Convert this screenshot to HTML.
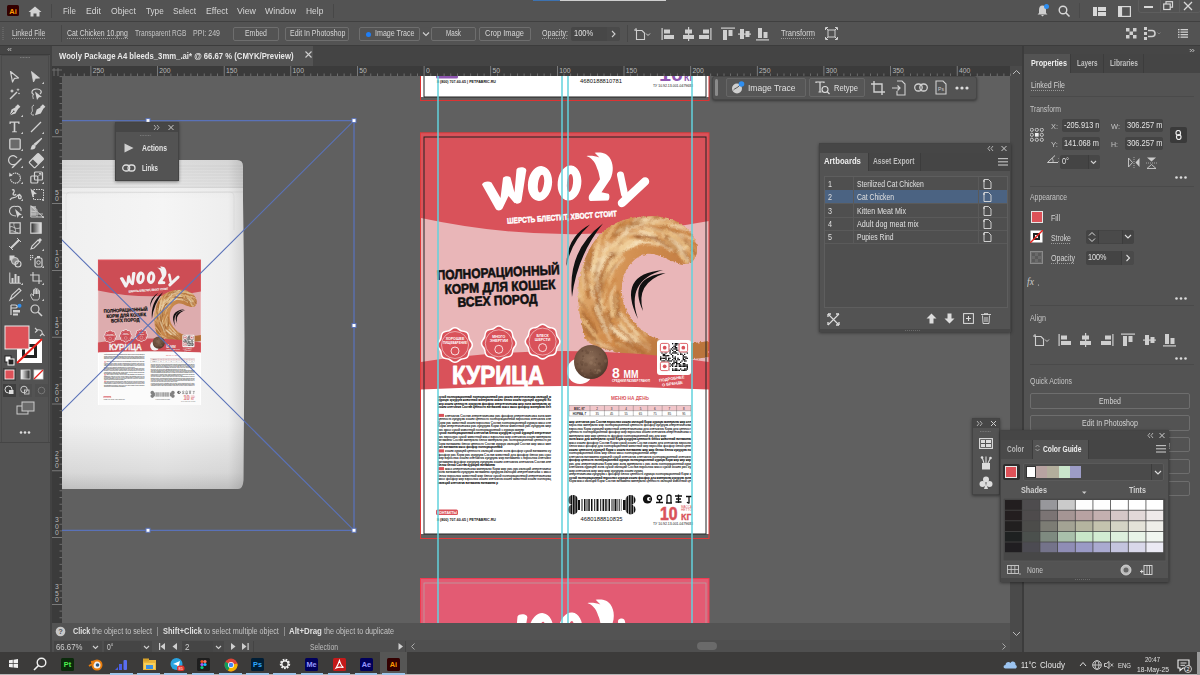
<!DOCTYPE html>
<html><head><meta charset="utf-8">
<style>
*{margin:0;padding:0;box-sizing:border-box}
html,body{width:1200px;height:675px;overflow:hidden;background:#535353;font-family:"Liberation Sans",sans-serif;color:#d8d8d8;position:relative}
.a{position:absolute}
.t{position:absolute;white-space:nowrap;line-height:1}
svg.s{position:absolute;overflow:hidden}
</style></head><body>
<div class="a" style="left:0px;top:0px;width:1200px;height:21px;background:#535353;"></div>
<div class="a" style="left:0px;top:21px;width:1200px;height:1px;background:#404040;"></div>
<div class="a" style="left:0px;top:22px;width:1200px;height:23px;background:#535353;"></div>
<div class="a" style="left:0px;top:45px;width:1200px;height:1px;background:#3c3c3c;"></div>
<div class="a" style="left:0px;top:46px;width:50px;height:606px;background:#535353;"></div>
<div class="a" style="left:0px;top:46px;width:50px;height:8px;background:#454545;"></div>
<div class="a" style="left:50px;top:46px;width:2px;height:606px;background:#424242;"></div>
<div class="a" style="left:52px;top:46px;width:970px;height:20px;background:#444444;"></div>
<div class="a" style="left:52px;top:46px;width:261px;height:20px;background:#535353;"></div>
<div class="a" style="left:52px;top:66px;width:959px;height:10px;background:#3b3b3b;"></div>
<div class="a" style="left:52px;top:66px;width:10px;height:557px;background:#3b3b3b;"></div>
<div class="a" style="left:62px;top:76px;width:948px;height:547px;background:#606060;"></div>
<div class="a" style="left:1010px;top:66px;width:12px;height:586px;background:#4a4a4a;"></div>
<div class="a" style="left:52px;top:623px;width:958px;height:17px;background:#535353;"></div>
<div class="a" style="left:52px;top:640px;width:958px;height:12px;background:#4d4d4d;"></div>
<div class="a" style="left:1022px;top:46px;width:2px;height:606px;background:#3c3c3c;"></div>
<div class="a" style="left:1024px;top:46px;width:176px;height:606px;background:#535353;"></div>
<div class="a" style="left:0px;top:652px;width:1200px;height:23px;background:#3d3d3c;"></div>

<svg class="s" style="left:62px;top:76px" width="948" height="547" viewBox="62 76 948 547"><rect x="62" y="76" width="948" height="547" fill="#606060"/><rect x="421" y="60" width="288" height="37" fill="#fff"/><rect x="420.5" y="60" width="288.5" height="40.5" fill="none" stroke="#d33" stroke-width="1"/><line x1="424" y1="97" x2="706" y2="97" stroke="#222" stroke-width="1"/><line x1="424" y1="60" x2="424" y2="97" stroke="#222" stroke-width="1"/><line x1="706" y1="60" x2="706" y2="97" stroke="#222" stroke-width="1"/><rect x="436" y="74" width="22" height="4.5" rx="1.5" fill="#8e55b0"/><text x="437" y="82.5" font-size="3.6" font-weight="bold" fill="#111" font-family="Liberation Sans" textLength="59" lengthAdjust="spacingAndGlyphs">8 (800) 707-60-65 | PETFABRIC.RU</text><text x="601" y="83" font-size="5.6" fill="#111" text-anchor="middle" font-family="Liberation Sans" textLength="42" lengthAdjust="spacingAndGlyphs">4680188810781</text><text x="659" y="81" font-size="19" font-weight="bold" fill="#8e55b0" font-family="Liberation Sans" textLength="24" lengthAdjust="spacingAndGlyphs">10</text><text x="684" y="80.5" font-size="9" font-weight="bold" fill="#8e55b0" font-family="Liberation Sans">КГ</text><text x="653" y="87" font-size="3" fill="#111" font-family="Liberation Sans" textLength="40" lengthAdjust="spacingAndGlyphs">ТУ 10.92.13-001-0479683</text><g id="ab"><rect x="421" y="133" width="288" height="401" fill="#fff"/><rect x="421" y="215" width="288" height="168" fill="#e9b6b8"/><path d="M421,133 L709,133 L709,221 Q565,249 421,218 Z" fill="#d9525a"/><filter id="fluff" x="-8%" y="-8%" width="116%" height="116%"><feTurbulence type="fractalNoise" baseFrequency="0.35" numOctaves="2" seed="5" result="n"/><feDisplacementMap in="SourceGraphic" in2="n" scale="3.5" xChannelSelector="R" yChannelSelector="G"/></filter><g filter="url(#fluff)"><defs><linearGradient id="tg" x1="0" y1="0" x2="1" y2="0.3"><stop offset="0" stop-color="#e4b57c"/><stop offset="0.45" stop-color="#d39152"/><stop offset="1" stop-color="#bd763c"/></linearGradient><clipPath id="tc"><path d="M587,341 C579,322 576,296 580,276 C584,256 594,238 606,229 C620,219 636,216 653,216 C672,217 686,224 693,236 C699,246 698,256 692,262 C686,266 678,263 671,261 C662,257 655,253 646,254 C636,256 627,265 623,278 C620,292 623,305 628,313 C633,322 642,333 657,339 C672,345 690,344 709,341 L709,357 C690,360 670,361 655,359 C640,358 626,356 616,352 C603,348 593,346 587,341 Z"/></clipPath></defs><path d="M587,341 C579,322 576,296 580,276 C584,256 594,238 606,229 C620,219 636,216 653,216 C672,217 686,224 693,236 C699,246 698,256 692,262 C686,266 678,263 671,261 C662,257 655,253 646,254 C636,256 627,265 623,278 C620,292 623,305 628,313 C633,322 642,333 657,339 C672,345 690,344 709,341 L709,357 C690,360 670,361 655,359 C640,358 626,356 616,352 C603,348 593,346 587,341 Z" fill="url(#tg)"/><filter id="fb" x="-5%" y="-5%" width="110%" height="110%"><feGaussianBlur stdDeviation="1.1"/></filter><radialGradient id="tsh" cx="0.62" cy="0.6" r="0.45"><stop offset="0.55" stop-color="#8a4e20" stop-opacity="0.35"/><stop offset="1" stop-color="#8a4e20" stop-opacity="0"/></radialGradient><g clip-path="url(#tc)" fill="none" stroke-linecap="round"><g filter="url(#fb)"><path d="M638.0,224.9 Q644.5,223.9 650.9,219.7" stroke="#9c5c2a" stroke-width="1.7" opacity="0.6"/><path d="M591.0,278.3 Q594.1,271.0 594.7,264.5" stroke="#f9e6c2" stroke-width="2.6" opacity="0.6"/><path d="M601.4,264.0 Q603.0,257.5 606.8,250.9" stroke="#cc8545" stroke-width="1.6" opacity="0.6"/><path d="M578.7,300.0 Q575.6,292.7 575.0,285.3" stroke="#cc8545" stroke-width="3.5" opacity="0.6"/><path d="M597.9,270.6 Q601.1,263.9 603.0,257.4" stroke="#f9e6c2" stroke-width="2.0" opacity="0.6"/><path d="M629.8,241.2 Q639.9,240.4 649.3,242.9" stroke="#f9e6c2" stroke-width="1.9" opacity="0.6"/><path d="M615.5,252.7 Q626.2,246.8 639.1,241.3" stroke="#f9e6c2" stroke-width="4.0" opacity="0.6"/><path d="M620.4,232.6 Q627.0,231.9 633.5,228.4" stroke="#cc8545" stroke-width="3.4" opacity="0.6"/><path d="M621.9,228.4 Q631.4,223.0 641.9,219.3" stroke="#cc8545" stroke-width="1.7" opacity="0.6"/><path d="M614.6,336.0 Q610.7,324.2 608.3,312.0" stroke="#9c5c2a" stroke-width="3.6" opacity="0.6"/><path d="M616.7,232.9 Q624.6,228.9 631.9,227.7" stroke="#f9e6c2" stroke-width="1.6" opacity="0.6"/><path d="M609.5,275.2 Q615.7,266.3 623.6,258.3" stroke="#f9e6c2" stroke-width="2.5" opacity="0.6"/><path d="M658.8,223.6 Q668.9,221.5 679.3,222.2" stroke="#cc8545" stroke-width="3.7" opacity="0.6"/><path d="M598.3,305.0 Q598.8,298.5 601.0,292.1" stroke="#9c5c2a" stroke-width="2.0" opacity="0.6"/><path d="M681.6,238.5 Q690.3,251.2 699.6,263.0" stroke="#cc8545" stroke-width="2.8" opacity="0.6"/><path d="M637.7,337.4 Q627.7,326.3 618.0,314.3" stroke="#cc8545" stroke-width="2.9" opacity="0.6"/><path d="M678.3,226.8 Q685.7,226.2 692.4,228.7" stroke="#cc8545" stroke-width="1.9" opacity="0.6"/><path d="M627.5,347.0 Q614.1,339.3 601.9,330.8" stroke="#cc8545" stroke-width="1.7" opacity="0.6"/><path d="M617.7,239.3 Q627.4,232.3 634.4,225.5" stroke="#f9e6c2" stroke-width="2.7" opacity="0.6"/><path d="M592.6,242.5 Q595.6,232.4 600.6,225.0" stroke="#cc8545" stroke-width="3.6" opacity="0.6"/><path d="M680.6,239.6 Q687.6,251.4 695.4,265.3" stroke="#cc8545" stroke-width="2.2" opacity="0.6"/><path d="M617.5,252.8 Q626.4,249.2 635.3,244.9" stroke="#f9e6c2" stroke-width="2.9" opacity="0.6"/><path d="M608.9,264.0 Q615.9,252.5 624.0,242.2" stroke="#f9e6c2" stroke-width="2.8" opacity="0.6"/><path d="M615.8,343.1 Q609.2,338.3 601.4,335.1" stroke="#cc8545" stroke-width="2.4" opacity="0.6"/><path d="M637.3,224.5 Q644.8,221.5 652.9,217.6" stroke="#eec88e" stroke-width="2.0" opacity="0.6"/><path d="M632.3,344.3 Q622.3,334.8 610.7,327.2" stroke="#f9e6c2" stroke-width="3.2" opacity="0.6"/><path d="M586.5,266.5 Q588.7,252.7 587.4,239.2" stroke="#cc8545" stroke-width="3.5" opacity="0.6"/><path d="M657.9,219.0 Q665.5,217.0 673.3,215.2" stroke="#9c5c2a" stroke-width="1.6" opacity="0.6"/><path d="M596.4,293.5 Q598.2,282.6 599.7,272.1" stroke="#9c5c2a" stroke-width="1.9" opacity="0.6"/><path d="M615.7,317.1 Q614.2,307.1 614.8,296.3" stroke="#9c5c2a" stroke-width="3.6" opacity="0.6"/><path d="M614.1,250.1 Q621.0,245.8 630.3,240.2" stroke="#eec88e" stroke-width="3.6" opacity="0.6"/><path d="M670.3,237.7 Q678.7,244.6 685.7,254.0" stroke="#9c5c2a" stroke-width="3.7" opacity="0.6"/><path d="M681.5,235.7 Q688.1,241.6 692.7,247.7" stroke="#f9e6c2" stroke-width="3.5" opacity="0.6"/><path d="M594.3,326.8 Q586.6,317.4 581.8,308.2" stroke="#cc8545" stroke-width="3.5" opacity="0.6"/><path d="M579.0,269.6 Q579.8,261.6 577.7,254.8" stroke="#cc8545" stroke-width="1.6" opacity="0.6"/><path d="M629.2,230.3 Q639.9,227.1 650.6,223.9" stroke="#cc8545" stroke-width="2.6" opacity="0.6"/><path d="M609.3,268.0 Q620.2,256.6 627.8,244.2" stroke="#f9e6c2" stroke-width="2.9" opacity="0.6"/><path d="M588.5,297.9 Q587.1,288.5 588.0,279.2" stroke="#cc8545" stroke-width="2.6" opacity="0.6"/><path d="M584.3,319.7 Q576.8,309.3 566.6,300.6" stroke="#cc8545" stroke-width="1.9" opacity="0.6"/><path d="M586.8,258.8 Q585.1,244.5 585.5,229.7" stroke="#eec88e" stroke-width="3.2" opacity="0.6"/><path d="M685.0,239.7 Q692.2,246.6 698.5,253.8" stroke="#f9e6c2" stroke-width="2.4" opacity="0.6"/><path d="M631.0,349.8 Q624.0,346.0 615.3,340.3" stroke="#9c5c2a" stroke-width="1.8" opacity="0.6"/><path d="M599.8,343.2 Q592.2,330.8 582.2,319.5" stroke="#eec88e" stroke-width="3.4" opacity="0.6"/><path d="M607.0,247.5 Q614.6,240.7 623.4,232.2" stroke="#cc8545" stroke-width="2.3" opacity="0.6"/><path d="M577.5,299.1 Q571.1,284.9 568.1,270.5" stroke="#cc8545" stroke-width="3.5" opacity="0.6"/><path d="M589.5,337.2 Q586.4,332.3 580.3,327.8" stroke="#9c5c2a" stroke-width="2.5" opacity="0.6"/><path d="M619.3,356.8 Q611.5,355.3 605.0,352.4" stroke="#eec88e" stroke-width="1.6" opacity="0.6"/><path d="M602.6,238.2 Q608.7,230.4 613.1,219.8" stroke="#cc8545" stroke-width="2.2" opacity="0.6"/><path d="M649.1,349.7 Q641.5,343.2 632.1,334.1" stroke="#f9e6c2" stroke-width="2.7" opacity="0.6"/><path d="M651.3,227.9 Q665.8,229.4 680.1,232.9" stroke="#9c5c2a" stroke-width="2.3" opacity="0.6"/><path d="M605.9,261.9 Q610.2,250.7 617.9,240.4" stroke="#eec88e" stroke-width="2.4" opacity="0.6"/><path d="M612.4,315.2 Q611.0,304.8 610.4,294.4" stroke="#f9e6c2" stroke-width="3.2" opacity="0.6"/><path d="M615.1,246.2 Q619.4,241.9 626.5,238.3" stroke="#f9e6c2" stroke-width="2.2" opacity="0.6"/><path d="M638.8,228.4 Q647.1,224.3 655.7,224.0" stroke="#9c5c2a" stroke-width="2.3" opacity="0.6"/><path d="M639.9,221.0 Q652.6,221.4 664.8,219.3" stroke="#eec88e" stroke-width="3.4" opacity="0.6"/><path d="M575.0,296.0 Q573.1,289.7 570.5,283.4" stroke="#cc8545" stroke-width="2.1" opacity="0.6"/><path d="M600.3,294.0 Q606.0,279.9 607.9,266.0" stroke="#eec88e" stroke-width="2.3" opacity="0.6"/><path d="M603.7,312.0 Q610.2,298.3 614.3,284.7" stroke="#eec88e" stroke-width="3.3" opacity="0.6"/><path d="M685.9,243.5 Q693.2,255.3 702.4,266.0" stroke="#f9e6c2" stroke-width="3.2" opacity="0.6"/><path d="M578.0,274.6 Q576.7,261.8 575.8,250.1" stroke="#9c5c2a" stroke-width="2.4" opacity="0.6"/><path d="M626.8,339.6 Q618.8,332.6 609.9,325.6" stroke="#f9e6c2" stroke-width="3.5" opacity="0.6"/><path d="M679.7,235.6 Q686.9,245.3 696.2,256.4" stroke="#cc8545" stroke-width="3.5" opacity="0.6"/><path d="M599.5,277.1 Q605.7,267.2 608.9,257.9" stroke="#9c5c2a" stroke-width="1.7" opacity="0.6"/><path d="M624.9,340.1 Q619.7,336.4 613.6,331.3" stroke="#f9e6c2" stroke-width="2.1" opacity="0.6"/><path d="M575.0,308.3 Q572.8,299.7 569.2,291.3" stroke="#cc8545" stroke-width="3.2" opacity="0.6"/><path d="M682.2,237.4 Q691.7,246.4 700.1,257.5" stroke="#9c5c2a" stroke-width="2.9" opacity="0.6"/><path d="M661.1,225.3 Q673.9,230.9 685.7,238.5" stroke="#9c5c2a" stroke-width="2.6" opacity="0.6"/><path d="M579.5,276.0 Q579.3,262.9 578.3,249.4" stroke="#cc8545" stroke-width="2.4" opacity="0.6"/><path d="M619.5,241.8 Q625.2,235.6 633.7,232.1" stroke="#9c5c2a" stroke-width="2.7" opacity="0.6"/><path d="M673.1,231.5 Q685.7,236.6 696.8,242.8" stroke="#cc8545" stroke-width="2.4" opacity="0.6"/><path d="M636.5,236.6 Q644.5,235.9 651.7,236.8" stroke="#9c5c2a" stroke-width="3.3" opacity="0.6"/><path d="M614.3,231.8 Q627.9,227.6 641.0,220.7" stroke="#f9e6c2" stroke-width="3.8" opacity="0.6"/><path d="M609.4,258.6 Q616.8,254.4 625.5,250.2" stroke="#9c5c2a" stroke-width="2.1" opacity="0.6"/><path d="M608.3,263.5 Q613.6,255.2 619.7,246.1" stroke="#f9e6c2" stroke-width="3.4" opacity="0.6"/><path d="M684.1,245.1 Q686.7,251.6 690.8,257.3" stroke="#cc8545" stroke-width="2.6" opacity="0.6"/><path d="M616.3,253.8 Q626.2,248.5 637.4,244.5" stroke="#f9e6c2" stroke-width="2.5" opacity="0.6"/><path d="M600.9,241.0 Q607.0,230.5 612.3,222.5" stroke="#cc8545" stroke-width="1.8" opacity="0.6"/><path d="M689.6,246.8 Q695.2,252.4 700.5,259.9" stroke="#9c5c2a" stroke-width="4.0" opacity="0.6"/><path d="M584.0,271.7 Q585.5,259.8 584.7,248.6" stroke="#cc8545" stroke-width="2.4" opacity="0.6"/><path d="M616.8,346.5 Q607.2,343.5 598.3,337.5" stroke="#cc8545" stroke-width="2.4" opacity="0.6"/><path d="M605.8,241.6 Q614.6,230.3 621.4,221.4" stroke="#cc8545" stroke-width="3.5" opacity="0.6"/><path d="M600.7,272.7 Q607.0,262.9 609.8,254.0" stroke="#eec88e" stroke-width="3.5" opacity="0.6"/><path d="M653.7,235.4 Q663.3,242.2 672.8,245.5" stroke="#eec88e" stroke-width="1.5" opacity="0.6"/><path d="M685.1,249.9 Q687.3,258.8 689.8,266.8" stroke="#f9e6c2" stroke-width="1.9" opacity="0.6"/><path d="M662.0,233.4 Q667.6,238.7 671.2,242.5" stroke="#f9e6c2" stroke-width="2.9" opacity="0.6"/><path d="M593.9,292.7 Q594.1,282.4 595.9,271.9" stroke="#cc8545" stroke-width="1.7" opacity="0.6"/><path d="M587.0,268.7 Q587.7,257.3 588.8,244.8" stroke="#f9e6c2" stroke-width="2.3" opacity="0.6"/><path d="M588.4,265.0 Q588.4,255.7 589.8,247.6" stroke="#9c5c2a" stroke-width="3.3" opacity="0.6"/><path d="M676.9,238.4 Q682.8,242.8 688.3,247.3" stroke="#f9e6c2" stroke-width="2.6" opacity="0.6"/><path d="M631.2,226.2 Q640.8,220.5 649.6,218.0" stroke="#f9e6c2" stroke-width="2.2" opacity="0.6"/><path d="M678.4,233.1 Q690.9,237.4 704.5,243.0" stroke="#eec88e" stroke-width="2.1" opacity="0.6"/><path d="M668.9,238.6 Q675.6,248.5 682.6,255.5" stroke="#9c5c2a" stroke-width="1.6" opacity="0.6"/><path d="M646.2,335.4 Q641.5,327.7 637.2,322.7" stroke="#f9e6c2" stroke-width="1.7" opacity="0.6"/><path d="M634.0,240.0 Q649.3,243.2 663.6,244.5" stroke="#f9e6c2" stroke-width="2.0" opacity="0.6"/><path d="M639.6,345.1 Q628.3,337.0 618.6,326.1" stroke="#9c5c2a" stroke-width="2.6" opacity="0.6"/><path d="M619.0,320.6 Q618.3,312.5 618.6,305.4" stroke="#9c5c2a" stroke-width="2.0" opacity="0.6"/><path d="M640.7,230.3 Q648.7,233.8 656.4,235.5" stroke="#eec88e" stroke-width="2.6" opacity="0.6"/><path d="M661.8,224.7 Q675.3,229.2 686.8,236.8" stroke="#cc8545" stroke-width="1.6" opacity="0.6"/><path d="M642.1,345.5 Q632.3,335.0 620.7,325.4" stroke="#eec88e" stroke-width="2.2" opacity="0.6"/><path d="M614.5,245.7 Q626.9,238.0 638.9,228.5" stroke="#eec88e" stroke-width="3.3" opacity="0.6"/><path d="M598.2,344.1 Q591.0,336.1 584.6,327.2" stroke="#9c5c2a" stroke-width="3.9" opacity="0.6"/><path d="M657.9,220.6 Q668.8,219.1 679.5,216.2" stroke="#f9e6c2" stroke-width="3.8" opacity="0.6"/><path d="M586.6,292.2 Q584.1,282.8 585.0,273.5" stroke="#cc8545" stroke-width="3.5" opacity="0.6"/><path d="M575.5,300.6 Q575.2,294.2 571.1,287.7" stroke="#cc8545" stroke-width="2.3" opacity="0.6"/><path d="M588.4,338.0 Q582.8,333.4 577.7,327.9" stroke="#cc8545" stroke-width="3.3" opacity="0.6"/><path d="M648.8,235.3 Q656.3,240.4 664.1,243.3" stroke="#eec88e" stroke-width="3.4" opacity="0.6"/><path d="M606.2,249.7 Q612.9,242.4 621.0,236.6" stroke="#cc8545" stroke-width="2.0" opacity="0.6"/><path d="M607.8,302.4 Q610.3,295.0 614.7,287.5" stroke="#f9e6c2" stroke-width="2.1" opacity="0.6"/><path d="M615.8,311.0 Q617.1,302.8 615.9,296.1" stroke="#eec88e" stroke-width="3.5" opacity="0.6"/><path d="M607.2,349.6 Q600.0,349.1 593.9,345.6" stroke="#cc8545" stroke-width="3.6" opacity="0.6"/><path d="M689.5,245.9 Q696.7,252.7 701.4,259.0" stroke="#cc8545" stroke-width="3.9" opacity="0.6"/><path d="M620.5,229.1 Q627.8,226.5 634.8,222.8" stroke="#eec88e" stroke-width="2.1" opacity="0.6"/><path d="M609.7,262.6 Q614.0,253.6 621.4,245.8" stroke="#eec88e" stroke-width="3.1" opacity="0.6"/><path d="M676.8,225.8 Q683.8,225.4 691.5,227.8" stroke="#cc8545" stroke-width="2.9" opacity="0.6"/><path d="M584.4,300.9 Q580.5,285.6 580.1,270.2" stroke="#cc8545" stroke-width="2.5" opacity="0.6"/><path d="M620.7,220.6 Q630.7,211.3 640.8,202.7" stroke="#9c5c2a" stroke-width="3.1" opacity="0.6"/><path d="M620.6,361.8 Q613.0,359.2 605.9,358.5" stroke="#f9e6c2" stroke-width="2.9" opacity="0.6"/><path d="M593.5,311.4 Q595.4,299.1 596.4,286.9" stroke="#9c5c2a" stroke-width="1.7" opacity="0.6"/><path d="M684.2,236.7 Q690.5,242.8 696.0,247.5" stroke="#f9e6c2" stroke-width="1.7" opacity="0.6"/><path d="M607.3,275.6 Q611.7,270.2 615.3,264.4" stroke="#9c5c2a" stroke-width="2.3" opacity="0.6"/><path d="M600.0,312.8 Q594.5,299.8 591.0,286.3" stroke="#f9e6c2" stroke-width="3.5" opacity="0.6"/><path d="M590.3,254.8 Q590.2,245.9 590.9,237.9" stroke="#cc8545" stroke-width="2.8" opacity="0.6"/><path d="M611.4,257.5 Q616.7,251.0 620.8,244.0" stroke="#9c5c2a" stroke-width="3.6" opacity="0.6"/><path d="M618.4,236.2 Q629.6,234.2 640.9,231.5" stroke="#cc8545" stroke-width="2.3" opacity="0.6"/><path d="M647.3,223.8 Q658.1,223.8 669.4,224.0" stroke="#f9e6c2" stroke-width="1.5" opacity="0.6"/><path d="M672.5,238.2 Q680.9,244.5 687.6,253.3" stroke="#f9e6c2" stroke-width="2.7" opacity="0.6"/><path d="M645.7,232.7 Q656.1,238.7 666.1,241.3" stroke="#cc8545" stroke-width="1.6" opacity="0.6"/><path d="M634.9,228.8 Q642.1,225.4 648.3,224.8" stroke="#cc8545" stroke-width="2.4" opacity="0.6"/><path d="M602.3,308.3 Q599.2,293.9 596.1,281.1" stroke="#f9e6c2" stroke-width="4.0" opacity="0.6"/><path d="M601.3,290.5 Q602.6,282.3 605.8,274.1" stroke="#9c5c2a" stroke-width="3.0" opacity="0.6"/><path d="M614.6,236.6 Q620.9,230.5 626.6,223.7" stroke="#9c5c2a" stroke-width="2.7" opacity="0.6"/><path d="M580.2,266.5 Q580.1,258.8 578.7,250.2" stroke="#eec88e" stroke-width="3.8" opacity="0.6"/><path d="M585.0,288.5 Q584.9,275.2 581.1,261.8" stroke="#f9e6c2" stroke-width="3.6" opacity="0.6"/><path d="M682.8,246.8 Q685.6,254.5 687.9,260.8" stroke="#9c5c2a" stroke-width="3.1" opacity="0.6"/><path d="M604.0,243.3 Q608.0,237.4 613.6,231.0" stroke="#eec88e" stroke-width="1.7" opacity="0.6"/><path d="M634.0,351.7 Q626.9,345.5 618.1,342.0" stroke="#9c5c2a" stroke-width="3.7" opacity="0.6"/><path d="M612.3,353.0 Q603.2,352.0 594.7,348.0" stroke="#cc8545" stroke-width="2.5" opacity="0.6"/><path d="M665.6,232.4 Q671.7,236.1 676.2,240.7" stroke="#f9e6c2" stroke-width="2.4" opacity="0.6"/><path d="M590.0,267.0 Q589.8,258.7 592.2,251.7" stroke="#cc8545" stroke-width="3.6" opacity="0.6"/><path d="M597.7,260.5 Q598.8,254.0 601.6,246.8" stroke="#f9e6c2" stroke-width="3.2" opacity="0.6"/><path d="M650.5,346.6 Q640.7,335.8 630.5,325.2" stroke="#eec88e" stroke-width="2.9" opacity="0.6"/><path d="M663.5,237.0 Q668.4,240.9 672.2,247.8" stroke="#eec88e" stroke-width="2.5" opacity="0.6"/><path d="M610.5,341.1 Q605.2,327.2 599.0,313.3" stroke="#f9e6c2" stroke-width="2.0" opacity="0.6"/><path d="M658.5,221.3 Q667.5,220.9 676.9,218.2" stroke="#cc8545" stroke-width="1.6" opacity="0.6"/><path d="M675.5,237.8 Q680.6,249.4 685.5,262.4" stroke="#eec88e" stroke-width="3.4" opacity="0.6"/><path d="M609.1,328.9 Q608.4,322.0 604.5,314.3" stroke="#9c5c2a" stroke-width="3.8" opacity="0.6"/><path d="M636.3,351.2 Q627.0,344.9 618.8,339.7" stroke="#cc8545" stroke-width="2.8" opacity="0.6"/><path d="M593.9,278.3 Q595.3,270.3 599.0,263.1" stroke="#9c5c2a" stroke-width="3.6" opacity="0.6"/><path d="M618.3,230.5 Q629.9,227.7 640.4,221.3" stroke="#eec88e" stroke-width="3.6" opacity="0.6"/><path d="M681.0,242.9 Q685.1,255.0 690.7,266.7" stroke="#9c5c2a" stroke-width="2.6" opacity="0.6"/><path d="M610.4,238.3 Q616.6,228.0 625.4,220.0" stroke="#cc8545" stroke-width="1.9" opacity="0.6"/><path d="M578.7,298.0 Q577.6,291.5 575.3,284.9" stroke="#f9e6c2" stroke-width="3.2" opacity="0.6"/><path d="M643.7,353.6 Q636.4,349.4 627.6,342.3" stroke="#9c5c2a" stroke-width="3.5" opacity="0.6"/><path d="M643.0,219.3 Q650.3,218.8 657.9,217.2" stroke="#f9e6c2" stroke-width="3.6" opacity="0.6"/><path d="M599.5,238.7 Q605.0,225.7 611.5,214.1" stroke="#cc8545" stroke-width="2.2" opacity="0.6"/><path d="M618.7,227.7 Q630.7,221.6 641.6,215.4" stroke="#cc8545" stroke-width="2.3" opacity="0.6"/><path d="M600.7,232.8 Q603.9,223.8 608.0,213.6" stroke="#cc8545" stroke-width="3.4" opacity="0.6"/><path d="M682.8,242.4 Q689.8,254.8 696.3,267.0" stroke="#eec88e" stroke-width="2.2" opacity="0.6"/><path d="M624.3,249.2 Q631.2,246.1 636.5,244.7" stroke="#eec88e" stroke-width="2.7" opacity="0.6"/><path d="M668.0,239.3 Q674.0,249.8 681.2,257.4" stroke="#eec88e" stroke-width="1.9" opacity="0.6"/><path d="M584.6,264.5 Q585.0,252.6 583.9,240.0" stroke="#f9e6c2" stroke-width="3.5" opacity="0.6"/><path d="M623.0,229.4 Q632.8,223.8 641.7,221.9" stroke="#9c5c2a" stroke-width="1.7" opacity="0.6"/><path d="M592.7,273.0 Q596.1,262.5 598.6,250.9" stroke="#f9e6c2" stroke-width="4.0" opacity="0.6"/><path d="M601.6,297.2 Q604.9,284.3 609.5,271.7" stroke="#cc8545" stroke-width="2.4" opacity="0.6"/><path d="M671.9,237.5 Q677.6,241.7 683.7,248.5" stroke="#eec88e" stroke-width="3.4" opacity="0.6"/><path d="M670.9,235.7 Q678.7,243.4 687.8,250.2" stroke="#f9e6c2" stroke-width="3.4" opacity="0.6"/><path d="M601.4,283.7 Q606.4,272.1 607.8,260.6" stroke="#eec88e" stroke-width="2.1" opacity="0.6"/><path d="M611.1,331.8 Q607.9,324.2 606.2,316.0" stroke="#f9e6c2" stroke-width="1.9" opacity="0.6"/><path d="M607.0,252.2 Q611.6,247.3 618.8,243.0" stroke="#f9e6c2" stroke-width="2.5" opacity="0.6"/><path d="M653.3,227.4 Q665.4,228.6 677.6,230.5" stroke="#cc8545" stroke-width="1.9" opacity="0.6"/><path d="M598.4,256.9 Q600.3,245.9 604.4,234.2" stroke="#cc8545" stroke-width="2.6" opacity="0.6"/><path d="M603.0,264.7 Q606.1,255.1 612.2,245.6" stroke="#eec88e" stroke-width="3.1" opacity="0.6"/><path d="M655.1,230.3 Q663.5,232.1 672.1,234.6" stroke="#eec88e" stroke-width="2.6" opacity="0.6"/><path d="M587.2,282.6 Q585.0,276.0 586.0,269.5" stroke="#9c5c2a" stroke-width="3.8" opacity="0.6"/><path d="M602.2,282.0 Q610.7,269.4 618.6,256.7" stroke="#eec88e" stroke-width="1.8" opacity="0.6"/><path d="M668.0,232.8 Q678.2,240.4 690.3,250.0" stroke="#eec88e" stroke-width="2.5" opacity="0.6"/><path d="M602.5,298.7 Q603.0,291.4 607.1,284.2" stroke="#9c5c2a" stroke-width="2.4" opacity="0.6"/><path d="M639.2,217.0 Q653.5,211.7 667.9,209.6" stroke="#cc8545" stroke-width="3.2" opacity="0.6"/><path d="M621.1,249.7 Q631.2,244.5 642.0,241.1" stroke="#f9e6c2" stroke-width="3.5" opacity="0.6"/><path d="M578.6,283.9 Q575.1,270.9 570.0,257.7" stroke="#cc8545" stroke-width="3.1" opacity="0.6"/><path d="M597.2,302.5 Q599.0,288.8 602.6,275.1" stroke="#9c5c2a" stroke-width="2.7" opacity="0.6"/><path d="M592.1,289.6 Q593.4,276.1 593.2,262.3" stroke="#eec88e" stroke-width="3.3" opacity="0.6"/><path d="M603.3,298.9 Q607.2,285.9 612.6,273.0" stroke="#eec88e" stroke-width="3.1" opacity="0.6"/><path d="M595.1,324.6 Q588.4,311.2 579.2,299.2" stroke="#9c5c2a" stroke-width="1.6" opacity="0.6"/><path d="M587.1,295.6 Q584.6,283.8 585.5,272.1" stroke="#cc8545" stroke-width="2.0" opacity="0.6"/><path d="M612.1,316.0 Q610.1,308.0 610.2,299.7" stroke="#eec88e" stroke-width="3.5" opacity="0.6"/><path d="M677.1,240.5 Q679.9,252.6 685.2,263.2" stroke="#cc8545" stroke-width="3.2" opacity="0.6"/><path d="M606.9,254.4 Q617.2,248.1 625.4,241.4" stroke="#cc8545" stroke-width="2.6" opacity="0.6"/><path d="M613.7,253.2 Q624.3,248.6 632.7,243.0" stroke="#eec88e" stroke-width="2.7" opacity="0.6"/><path d="M597.6,270.2 Q602.5,256.9 607.6,243.3" stroke="#f9e6c2" stroke-width="3.6" opacity="0.6"/><path d="M611.4,236.5 Q618.3,228.9 624.3,220.4" stroke="#9c5c2a" stroke-width="1.7" opacity="0.6"/><path d="M634.3,375.1 Q620.4,373.5 608.1,371.9" stroke="#9c5c2a" stroke-width="3.5" opacity="0.6"/><path d="M599.7,311.1 Q602.4,299.3 606.1,287.5" stroke="#eec88e" stroke-width="3.7" opacity="0.6"/><path d="M681.9,246.1 Q686.2,254.1 687.7,263.3" stroke="#f9e6c2" stroke-width="2.1" opacity="0.6"/><path d="M633.5,226.6 Q644.4,223.1 654.1,218.4" stroke="#eec88e" stroke-width="2.8" opacity="0.6"/><path d="M596.6,332.9 Q592.4,326.1 586.2,317.7" stroke="#cc8545" stroke-width="3.1" opacity="0.6"/><path d="M689.4,247.5 Q694.6,254.1 697.8,258.5" stroke="#eec88e" stroke-width="1.5" opacity="0.6"/><path d="M626.0,328.7 Q618.9,319.0 611.0,309.8" stroke="#eec88e" stroke-width="3.1" opacity="0.6"/><path d="M611.0,331.3 Q606.8,321.8 605.0,310.8" stroke="#cc8545" stroke-width="1.8" opacity="0.6"/><path d="M600.5,310.2 Q597.8,301.1 594.7,291.3" stroke="#9c5c2a" stroke-width="3.5" opacity="0.6"/><path d="M593.4,238.1 Q597.0,231.9 598.2,225.6" stroke="#cc8545" stroke-width="2.9" opacity="0.6"/><path d="M683.7,231.4 Q695.8,237.2 707.6,245.5" stroke="#cc8545" stroke-width="3.8" opacity="0.6"/><path d="M650.2,236.8 Q660.7,241.9 671.2,250.3" stroke="#f9e6c2" stroke-width="3.4" opacity="0.6"/><path d="M670.7,223.5 Q678.0,226.6 683.7,226.4" stroke="#f9e6c2" stroke-width="3.2" opacity="0.6"/><path d="M591.5,340.0 Q583.7,331.9 576.3,324.6" stroke="#cc8545" stroke-width="2.9" opacity="0.6"/><path d="M637.7,342.8 Q627.9,333.8 619.0,325.3" stroke="#f9e6c2" stroke-width="3.4" opacity="0.6"/><path d="M666.5,238.6 Q672.8,244.0 677.2,252.7" stroke="#9c5c2a" stroke-width="3.3" opacity="0.6"/><path d="M596.4,332.3 Q589.9,322.8 582.7,312.6" stroke="#9c5c2a" stroke-width="3.6" opacity="0.6"/><path d="M670.9,225.7 Q686.4,230.3 700.6,232.7" stroke="#f9e6c2" stroke-width="3.9" opacity="0.6"/><path d="M664.4,233.5 Q675.4,242.7 685.7,254.9" stroke="#cc8545" stroke-width="2.9" opacity="0.6"/><path d="M638.7,233.0 Q645.4,234.2 651.9,231.8" stroke="#f9e6c2" stroke-width="3.6" opacity="0.6"/><path d="M601.5,274.0 Q606.3,262.8 612.8,252.8" stroke="#9c5c2a" stroke-width="3.5" opacity="0.6"/><path d="M595.9,243.1 Q602.2,228.8 609.6,216.6" stroke="#cc8545" stroke-width="3.5" opacity="0.6"/><path d="M604.7,305.0 Q609.3,292.0 615.1,279.3" stroke="#cc8545" stroke-width="3.8" opacity="0.6"/><path d="M684.9,239.1 Q695.3,247.5 704.5,258.2" stroke="#cc8545" stroke-width="4.0" opacity="0.6"/><path d="M650.6,220.6 Q659.4,217.8 668.1,218.3" stroke="#cc8545" stroke-width="3.5" opacity="0.6"/><path d="M631.0,223.4 Q641.1,217.3 651.2,211.4" stroke="#9c5c2a" stroke-width="3.7" opacity="0.6"/><path d="M584.1,271.8 Q584.7,263.6 584.8,255.6" stroke="#cc8545" stroke-width="2.4" opacity="0.6"/><path d="M689.0,242.7 Q701.3,251.6 712.7,260.7" stroke="#cc8545" stroke-width="3.7" opacity="0.6"/><path d="M609.2,333.7 Q604.2,323.8 602.6,315.6" stroke="#cc8545" stroke-width="1.6" opacity="0.6"/><path d="M672.5,227.7 Q687.0,232.0 701.2,235.7" stroke="#cc8545" stroke-width="1.7" opacity="0.6"/><path d="M574.7,300.9 Q570.1,293.1 569.0,285.3" stroke="#cc8545" stroke-width="1.7" opacity="0.6"/><path d="M665.9,235.4 Q674.8,247.0 685.4,257.3" stroke="#9c5c2a" stroke-width="3.1" opacity="0.6"/><path d="M607.0,332.4 Q602.1,321.0 597.9,309.5" stroke="#9c5c2a" stroke-width="3.2" opacity="0.6"/><path d="M582.9,300.4 Q582.4,287.4 578.5,274.7" stroke="#eec88e" stroke-width="3.9" opacity="0.6"/><path d="M687.1,250.0 Q689.2,257.7 692.3,262.9" stroke="#cc8545" stroke-width="3.3" opacity="0.6"/><path d="M635.0,362.5 Q629.1,360.4 622.8,357.8" stroke="#eec88e" stroke-width="3.4" opacity="0.6"/><path d="M596.8,328.2 Q591.4,319.1 586.3,311.1" stroke="#cc8545" stroke-width="2.4" opacity="0.6"/><path d="M637.7,335.2 Q628.3,324.0 620.6,313.6" stroke="#f9e6c2" stroke-width="3.6" opacity="0.6"/><path d="M633.7,220.4 Q642.7,214.8 650.9,208.1" stroke="#f9e6c2" stroke-width="3.8" opacity="0.6"/><path d="M680.6,234.2 Q689.0,238.2 696.7,240.5" stroke="#f9e6c2" stroke-width="2.4" opacity="0.6"/><path d="M595.2,289.0 Q595.7,281.2 597.0,273.5" stroke="#9c5c2a" stroke-width="2.2" opacity="0.6"/><path d="M604.2,240.7 Q611.9,229.3 619.9,217.9" stroke="#eec88e" stroke-width="1.8" opacity="0.6"/><path d="M578.4,282.8 Q573.6,268.9 569.0,255.1" stroke="#cc8545" stroke-width="2.0" opacity="0.6"/><path d="M622.3,249.8 Q631.3,245.8 641.8,242.5" stroke="#f9e6c2" stroke-width="2.1" opacity="0.6"/><path d="M659.2,219.7 Q672.1,217.4 684.4,212.7" stroke="#cc8545" stroke-width="3.9" opacity="0.6"/><path d="M625.3,230.0 Q638.0,223.6 651.1,220.7" stroke="#9c5c2a" stroke-width="2.2" opacity="0.6"/><path d="M644.3,227.8 Q651.8,228.1 659.5,230.8" stroke="#f9e6c2" stroke-width="3.4" opacity="0.6"/><path d="M609.9,310.2 Q607.4,296.8 607.6,284.0" stroke="#cc8545" stroke-width="1.9" opacity="0.6"/><path d="M588.4,261.0 Q589.7,253.3 589.2,246.8" stroke="#cc8545" stroke-width="2.5" opacity="0.6"/><path d="M624.1,240.4 Q638.9,240.5 652.8,240.7" stroke="#eec88e" stroke-width="1.5" opacity="0.6"/><path d="M603.5,252.1 Q615.2,242.8 626.5,231.5" stroke="#f9e6c2" stroke-width="3.3" opacity="0.6"/><path d="M626.6,229.6 Q637.5,227.2 647.7,222.1" stroke="#f9e6c2" stroke-width="3.3" opacity="0.6"/><path d="M635.4,237.0 Q646.7,238.3 658.9,237.8" stroke="#9c5c2a" stroke-width="2.2" opacity="0.6"/><path d="M669.9,231.9 Q680.1,236.9 689.2,244.0" stroke="#f9e6c2" stroke-width="3.9" opacity="0.6"/><path d="M606.5,332.1 Q601.6,318.5 595.0,304.0" stroke="#f9e6c2" stroke-width="3.8" opacity="0.6"/><path d="M670.0,235.8 Q676.6,239.4 681.3,245.5" stroke="#9c5c2a" stroke-width="3.3" opacity="0.6"/><path d="M670.6,237.3 Q675.9,241.6 681.4,247.8" stroke="#f9e6c2" stroke-width="3.7" opacity="0.6"/><path d="M595.7,279.6 Q602.4,267.2 605.8,255.0" stroke="#f9e6c2" stroke-width="3.6" opacity="0.6"/><path d="M653.3,229.6 Q660.1,230.7 666.7,232.6" stroke="#9c5c2a" stroke-width="1.6" opacity="0.6"/><path d="M633.9,237.0 Q645.4,237.4 657.1,237.3" stroke="#9c5c2a" stroke-width="2.3" opacity="0.6"/><path d="M628.9,241.2 Q643.9,242.5 658.7,244.7" stroke="#f9e6c2" stroke-width="2.6" opacity="0.6"/><path d="M684.5,236.6 Q691.0,241.8 697.1,247.6" stroke="#cc8545" stroke-width="2.1" opacity="0.6"/><path d="M668.8,236.2 Q678.5,245.9 688.8,257.3" stroke="#9c5c2a" stroke-width="1.6" opacity="0.6"/><path d="M618.2,248.1 Q622.8,244.0 630.1,241.4" stroke="#f9e6c2" stroke-width="1.8" opacity="0.6"/><path d="M631.0,360.1 Q620.3,355.7 607.7,351.5" stroke="#f9e6c2" stroke-width="3.0" opacity="0.6"/><path d="M601.4,255.3 Q613.9,246.8 624.3,235.9" stroke="#eec88e" stroke-width="2.8" opacity="0.6"/><path d="M608.3,254.5 Q620.0,246.5 630.6,240.1" stroke="#f9e6c2" stroke-width="2.6" opacity="0.6"/><path d="M642.2,230.4 Q652.4,233.0 662.6,237.1" stroke="#eec88e" stroke-width="3.0" opacity="0.6"/><path d="M585.4,269.5 Q587.5,257.6 586.3,246.6" stroke="#9c5c2a" stroke-width="2.5" opacity="0.6"/><path d="M589.8,270.2 Q589.6,260.8 592.8,252.5" stroke="#9c5c2a" stroke-width="2.0" opacity="0.6"/><path d="M676.4,239.9 Q680.3,250.4 683.8,259.6" stroke="#f9e6c2" stroke-width="2.5" opacity="0.6"/><path d="M617.7,317.3 Q618.4,305.3 617.8,292.0" stroke="#9c5c2a" stroke-width="2.5" opacity="0.6"/><path d="M608.2,269.7 Q617.4,258.8 624.8,247.2" stroke="#eec88e" stroke-width="3.3" opacity="0.6"/><path d="M664.5,230.8 Q675.1,237.9 684.1,245.7" stroke="#cc8545" stroke-width="2.5" opacity="0.6"/><path d="M684.4,240.6 Q693.3,253.3 703.9,264.0" stroke="#cc8545" stroke-width="2.5" opacity="0.6"/><path d="M601.1,329.9 Q595.8,320.3 591.2,310.9" stroke="#cc8545" stroke-width="2.2" opacity="0.6"/><path d="M653.7,217.8 Q666.4,213.8 678.9,209.5" stroke="#9c5c2a" stroke-width="2.5" opacity="0.6"/><path d="M588.0,297.0 Q589.5,288.4 587.3,279.8" stroke="#9c5c2a" stroke-width="2.3" opacity="0.6"/><path d="M592.2,252.5 Q591.1,242.2 593.4,231.8" stroke="#9c5c2a" stroke-width="1.5" opacity="0.6"/><path d="M667.0,230.4 Q674.3,236.2 682.8,240.4" stroke="#cc8545" stroke-width="2.6" opacity="0.6"/><path d="M646.9,223.6 Q658.7,223.7 670.7,223.6" stroke="#eec88e" stroke-width="3.9" opacity="0.6"/><path d="M602.7,328.9 Q596.4,317.8 592.2,306.4" stroke="#9c5c2a" stroke-width="1.9" opacity="0.6"/><path d="M645.7,228.7 Q660.7,231.1 676.0,236.2" stroke="#eec88e" stroke-width="2.8" opacity="0.6"/><path d="M621.4,221.0 Q628.4,214.6 635.9,209.3" stroke="#eec88e" stroke-width="3.1" opacity="0.6"/><path d="M690.2,246.3 Q695.7,251.2 701.2,257.7" stroke="#eec88e" stroke-width="2.8" opacity="0.6"/><path d="M594.4,307.9 Q596.2,300.5 596.3,293.0" stroke="#cc8545" stroke-width="3.1" opacity="0.6"/><path d="M614.4,349.8 Q603.1,345.0 590.4,340.8" stroke="#f9e6c2" stroke-width="2.3" opacity="0.6"/><path d="M637.9,354.8 Q628.0,347.3 617.9,343.2" stroke="#eec88e" stroke-width="3.1" opacity="0.6"/><path d="M584.0,265.0 Q582.3,256.6 583.7,249.1" stroke="#cc8545" stroke-width="1.8" opacity="0.6"/><path d="M685.1,240.9 Q691.5,248.9 698.9,256.5" stroke="#9c5c2a" stroke-width="3.1" opacity="0.6"/><path d="M587.7,288.5 Q588.9,280.5 586.7,272.5" stroke="#eec88e" stroke-width="1.7" opacity="0.6"/><path d="M622.5,235.9 Q629.4,232.9 635.6,233.4" stroke="#f9e6c2" stroke-width="2.5" opacity="0.6"/><path d="M616.2,354.4 Q609.2,350.9 603.0,350.2" stroke="#9c5c2a" stroke-width="3.6" opacity="0.6"/><path d="M664.3,229.9 Q677.2,238.5 689.0,247.7" stroke="#eec88e" stroke-width="3.9" opacity="0.6"/><path d="M592.7,270.4 Q594.1,257.4 598.6,245.2" stroke="#f9e6c2" stroke-width="3.7" opacity="0.6"/><path d="M642.1,236.3 Q649.9,240.7 657.7,245.9" stroke="#eec88e" stroke-width="1.8" opacity="0.6"/><path d="M652.4,236.8 Q661.3,242.0 670.1,247.5" stroke="#9c5c2a" stroke-width="2.9" opacity="0.6"/><path d="M616.9,221.5 Q626.7,211.8 635.9,205.1" stroke="#cc8545" stroke-width="1.9" opacity="0.6"/><path d="M614.5,250.3 Q623.8,244.1 634.5,238.7" stroke="#eec88e" stroke-width="3.5" opacity="0.6"/><path d="M594.7,262.9 Q597.9,247.7 601.1,233.2" stroke="#eec88e" stroke-width="3.9" opacity="0.6"/><path d="M668.4,238.1 Q676.7,250.7 687.0,263.1" stroke="#eec88e" stroke-width="2.6" opacity="0.6"/><path d="M651.3,221.6 Q665.6,218.8 679.9,217.9" stroke="#f9e6c2" stroke-width="2.8" opacity="0.6"/><path d="M639.5,230.5 Q646.8,234.1 654.3,235.6" stroke="#f9e6c2" stroke-width="3.3" opacity="0.6"/><path d="M601.3,273.4 Q604.7,266.5 608.1,260.0" stroke="#cc8545" stroke-width="2.4" opacity="0.6"/><path d="M583.1,324.8 Q576.0,317.9 569.9,312.1" stroke="#9c5c2a" stroke-width="2.5" opacity="0.6"/><path d="M670.9,238.6 Q681.0,250.2 689.2,260.6" stroke="#f9e6c2" stroke-width="2.2" opacity="0.6"/><path d="M632.5,218.6 Q642.0,211.6 651.8,201.5" stroke="#cc8545" stroke-width="4.0" opacity="0.6"/><path d="M593.1,342.5 Q581.0,332.8 572.2,321.5" stroke="#cc8545" stroke-width="3.3" opacity="0.6"/><path d="M602.3,297.7 Q605.2,290.3 607.0,282.6" stroke="#cc8545" stroke-width="2.9" opacity="0.6"/></g><path d="M600,352 Q650,330 709,349 L709,362 L600,362 Z" fill="#b8773f" opacity="0.45" filter="url(#fb)"/></g></g><path d="M421,362 Q565,340 709,362 L709,389.5 Q565,382.5 421,389.5 Z" fill="#d9525a"/><g id="logo" fill="#fff" stroke="#fff" stroke-linejoin="round" stroke-linecap="round"><path stroke="none" d="M482,184.5 C483,182 488,180.5 491.5,182.5 L500.5,198 L503,178 C504,176 509,175.5 510.5,177.5 L514.5,192.5 L516.5,169.5 C517.5,167 523,166.5 525.5,168.5 C526.5,169.5 526.5,171 526,172 L521.5,201 C520.5,204 515.5,204.5 514,202.5 L508.5,196 L502.5,208.5 C501,211 496.5,211 495.5,208.5 Z"/><path fill-rule="evenodd" stroke="none" transform="rotate(8 540 183.5)" d="M528,183.5 A12,17.5 0 1 0 552,183.5 A12,17.5 0 1 0 528,183.5 Z M538.0,183.5 A3.0,9.0 0 1 0 544.0,183.5 A3.0,9.0 0 1 0 538.0,183.5 Z"/><path fill-rule="evenodd" stroke="none" transform="rotate(6 569.5 183)" d="M557.7,183 A11.8,17.5 0 1 0 581.3,183 A11.8,17.5 0 1 0 557.7,183 Z M567.0,183 A3.0,9.0 0 1 0 573.0,183 A3.0,9.0 0 1 0 567.0,183 Z"/><path stroke="none" d="M586.4,155.9 C591,155.5 596,156 599.4,157.5 L594.7,152.8 C601,151.5 607,153.5 609.5,157.5 C613.5,163 614,172 610.3,179.2 L601.5,192.2 L608.5,193.8 C609.8,194.5 609.8,200 608,200.5 L590.6,201 C588.6,201 588.2,196.5 589.5,194.8 L600,179.2 C599,174 598.5,171 597.3,168.9 C595,161 591,157.5 586.4,155.9 Z"/><polyline points="620.5,175 624.5,194" fill="none" stroke-width="7"/><polyline points="645,181.5 622,203" fill="none" stroke-width="8.5"/></g><text x="562" y="220" font-size="8" font-weight="bold" fill="#fff" stroke="#fff" stroke-width="0.45" text-anchor="middle" transform="rotate(-4 562 217)" textLength="110" lengthAdjust="spacingAndGlyphs" font-family="Liberation Sans">ШЕРСТЬ БЛЕСТИТ, ХВОСТ СТОИТ</text><g transform="rotate(-2.6 499 289)" font-weight="bold" fill="#111" stroke="#111" stroke-width="0.6" stroke-linejoin="round" font-family="Liberation Sans"><text x="499" y="277" font-size="13.5" text-anchor="middle" textLength="123" lengthAdjust="spacingAndGlyphs">ПОЛНОРАЦИОННЫЙ</text><text x="500" y="291.5" font-size="13.5" text-anchor="middle" textLength="111" lengthAdjust="spacingAndGlyphs">КОРМ ДЛЯ КОШЕК</text><text x="497" y="305" font-size="13.5" text-anchor="middle" textLength="80" lengthAdjust="spacingAndGlyphs">ВСЕХ ПОРОД</text></g><path d="M590,224.5 Q566,237 566.5,266 Q571,242 590,224.5 Z" fill="#111"/><path d="M603,223.5 Q567,250 572,297 Q577,256 603,223.5 Z" fill="#111"/><path d="M663,270 Q616,274 638,319 Q625,281 663,270 Z" fill="#111"/><path d="M665.5,273 Q627,277 643,311 Q635,283 665.5,273 Z" fill="#111"/><polygon points="473.1,345.0 472.8,346.7 471.9,348.4 470.9,349.8 470.1,351.2 469.6,352.8 469.3,354.6 468.8,356.3 467.8,357.8 466.3,358.8 464.6,359.3 462.8,359.6 461.2,360.1 459.8,360.9 458.4,361.9 456.7,362.8 455.0,363.1 453.3,362.8 451.6,361.9 450.2,360.9 448.8,360.1 447.2,359.6 445.4,359.3 443.7,358.8 442.2,357.8 441.2,356.3 440.7,354.6 440.4,352.8 439.9,351.2 439.1,349.8 438.1,348.4 437.2,346.7 436.9,345.0 437.2,343.3 438.1,341.6 439.1,340.2 439.9,338.8 440.4,337.2 440.7,335.4 441.2,333.7 442.2,332.2 443.7,331.2 445.4,330.7 447.2,330.4 448.8,329.9 450.2,329.1 451.6,328.1 453.3,327.2 455.0,326.9 456.7,327.2 458.4,328.1 459.8,329.1 461.2,329.9 462.8,330.4 464.6,330.7 466.3,331.2 467.8,332.2 468.8,333.7 469.3,335.4 469.6,337.2 470.1,338.8 470.9,340.2 471.9,341.6 472.8,343.3 473.1,345.0" fill="#fff"/><polygon points="471.5,345.0 471.2,346.6 470.3,348.0 469.3,349.3 468.6,350.6 468.2,352.1 468.0,353.7 467.6,355.3 466.7,356.7 465.3,357.6 463.7,358.0 462.1,358.2 460.6,358.6 459.3,359.3 458.0,360.3 456.6,361.2 455.0,361.5 453.4,361.2 452.0,360.3 450.7,359.3 449.4,358.6 447.9,358.2 446.3,358.0 444.7,357.6 443.3,356.7 442.4,355.3 442.0,353.7 441.8,352.1 441.4,350.6 440.7,349.3 439.7,348.0 438.8,346.6 438.5,345.0 438.8,343.4 439.7,342.0 440.7,340.7 441.4,339.4 441.8,337.9 442.0,336.3 442.4,334.7 443.3,333.3 444.7,332.4 446.3,332.0 447.9,331.8 449.4,331.4 450.7,330.7 452.0,329.7 453.4,328.8 455.0,328.5 456.6,328.8 458.0,329.7 459.3,330.7 460.6,331.4 462.1,331.8 463.7,332.0 465.3,332.4 466.7,333.3 467.6,334.7 468.0,336.3 468.2,337.9 468.6,339.4 469.3,340.7 470.3,342.0 471.2,343.4 471.5,345.0" fill="#d9525a"/><circle cx="455" cy="345" r="13.5" fill="none" stroke="#fff" stroke-width="0.5"/><text x="455" y="340" font-size="3.6" font-weight="bold" fill="#fff" text-anchor="middle" font-family="Liberation Sans">ХОРОШЕЕ</text><text x="455" y="344" font-size="3.6" font-weight="bold" fill="#fff" text-anchor="middle" font-family="Liberation Sans" textLength="24" lengthAdjust="spacingAndGlyphs">ПИЩЕВАРЕНИЕ</text><circle cx="455" cy="351" r="4" fill="none" stroke="#fff" stroke-width="0.8"/><polygon points="516.9,343.3 516.6,345.0 515.7,346.7 514.7,348.1 513.9,349.5 513.4,351.1 513.1,352.9 512.6,354.6 511.6,356.1 510.1,357.1 508.4,357.6 506.6,357.9 505.0,358.4 503.6,359.2 502.2,360.2 500.5,361.1 498.8,361.4 497.1,361.1 495.4,360.2 494.0,359.2 492.6,358.4 491.0,357.9 489.2,357.6 487.5,357.1 486.0,356.1 485.0,354.6 484.5,352.9 484.2,351.1 483.7,349.5 482.9,348.1 481.9,346.7 481.0,345.0 480.7,343.3 481.0,341.6 481.9,339.9 482.9,338.5 483.7,337.1 484.2,335.5 484.5,333.7 485.0,332.0 486.0,330.5 487.5,329.5 489.2,329.0 491.0,328.7 492.6,328.2 494.0,327.4 495.4,326.4 497.1,325.5 498.8,325.2 500.5,325.5 502.2,326.4 503.6,327.4 505.0,328.2 506.6,328.7 508.4,329.0 510.1,329.5 511.6,330.5 512.6,332.0 513.1,333.7 513.4,335.5 513.9,337.1 514.7,338.5 515.7,339.9 516.6,341.6 516.9,343.3" fill="#fff"/><polygon points="515.3,343.3 515.0,344.9 514.1,346.3 513.1,347.6 512.4,348.9 512.0,350.4 511.8,352.0 511.4,353.6 510.5,355.0 509.1,355.9 507.5,356.3 505.9,356.5 504.4,356.9 503.1,357.6 501.8,358.6 500.4,359.5 498.8,359.8 497.2,359.5 495.8,358.6 494.5,357.6 493.2,356.9 491.7,356.5 490.1,356.3 488.5,355.9 487.1,355.0 486.2,353.6 485.8,352.0 485.6,350.4 485.2,348.9 484.5,347.6 483.5,346.3 482.6,344.9 482.3,343.3 482.6,341.7 483.5,340.3 484.5,339.0 485.2,337.7 485.6,336.2 485.8,334.6 486.2,333.0 487.1,331.6 488.5,330.7 490.1,330.3 491.7,330.1 493.2,329.7 494.5,329.0 495.8,328.0 497.2,327.1 498.8,326.8 500.4,327.1 501.8,328.0 503.1,329.0 504.4,329.7 505.9,330.1 507.5,330.3 509.1,330.7 510.5,331.6 511.4,333.0 511.8,334.6 512.0,336.2 512.4,337.7 513.1,339.0 514.1,340.3 515.0,341.7 515.3,343.3" fill="#d9525a"/><circle cx="498.8" cy="343.3" r="13.5" fill="none" stroke="#fff" stroke-width="0.5"/><text x="498.8" y="338.3" font-size="3.6" font-weight="bold" fill="#fff" text-anchor="middle" font-family="Liberation Sans">МНОГО</text><text x="498.8" y="342.3" font-size="3.6" font-weight="bold" fill="#fff" text-anchor="middle" font-family="Liberation Sans" textLength="18.2" lengthAdjust="spacingAndGlyphs">ЭНЕРГИИ</text><circle cx="498.8" cy="349.3" r="4" fill="none" stroke="#fff" stroke-width="0.8"/><polygon points="560.7,341.6 560.4,343.3 559.5,345.0 558.5,346.4 557.7,347.8 557.2,349.4 556.9,351.2 556.4,352.9 555.4,354.4 553.9,355.4 552.2,355.9 550.4,356.2 548.8,356.7 547.4,357.5 546.0,358.5 544.3,359.4 542.6,359.7 540.9,359.4 539.2,358.5 537.8,357.5 536.4,356.7 534.8,356.2 533.0,355.9 531.3,355.4 529.8,354.4 528.8,352.9 528.3,351.2 528.0,349.4 527.5,347.8 526.7,346.4 525.7,345.0 524.8,343.3 524.5,341.6 524.8,339.9 525.7,338.2 526.7,336.8 527.5,335.4 528.0,333.8 528.3,332.0 528.8,330.3 529.8,328.8 531.3,327.8 533.0,327.3 534.8,327.0 536.4,326.5 537.8,325.7 539.2,324.7 540.9,323.8 542.6,323.5 544.3,323.8 546.0,324.7 547.4,325.7 548.8,326.5 550.4,327.0 552.2,327.3 553.9,327.8 555.4,328.8 556.4,330.3 556.9,332.0 557.2,333.8 557.7,335.4 558.5,336.8 559.5,338.2 560.4,339.9 560.7,341.6" fill="#fff"/><polygon points="559.1,341.6 558.8,343.2 557.9,344.6 556.9,345.9 556.2,347.2 555.8,348.7 555.6,350.3 555.2,351.9 554.3,353.3 552.9,354.2 551.3,354.6 549.7,354.8 548.2,355.2 546.9,355.9 545.6,356.9 544.2,357.8 542.6,358.1 541.0,357.8 539.6,356.9 538.3,355.9 537.0,355.2 535.5,354.8 533.9,354.6 532.3,354.2 530.9,353.3 530.0,351.9 529.6,350.3 529.4,348.7 529.0,347.2 528.3,345.9 527.3,344.6 526.4,343.2 526.1,341.6 526.4,340.0 527.3,338.6 528.3,337.3 529.0,336.0 529.4,334.5 529.6,332.9 530.0,331.3 530.9,329.9 532.3,329.0 533.9,328.6 535.5,328.4 537.0,328.0 538.3,327.3 539.6,326.3 541.0,325.4 542.6,325.1 544.2,325.4 545.6,326.3 546.9,327.3 548.2,328.0 549.7,328.4 551.3,328.6 552.9,329.0 554.3,329.9 555.2,331.3 555.6,332.9 555.8,334.5 556.2,336.0 556.9,337.3 557.9,338.6 558.8,340.0 559.1,341.6" fill="#d9525a"/><circle cx="542.6" cy="341.6" r="13.5" fill="none" stroke="#fff" stroke-width="0.5"/><text x="542.6" y="336.6" font-size="3.6" font-weight="bold" fill="#fff" text-anchor="middle" font-family="Liberation Sans">БЛЕСК</text><text x="542.6" y="340.6" font-size="3.6" font-weight="bold" fill="#fff" text-anchor="middle" font-family="Liberation Sans" textLength="15.600000000000001" lengthAdjust="spacingAndGlyphs">ШЕРСТИ</text><circle cx="542.6" cy="347.6" r="4" fill="none" stroke="#fff" stroke-width="0.8"/><text x="498" y="383.5" font-size="25" font-weight="bold" fill="#fff" stroke="#fff" stroke-width="0.9" stroke-linejoin="round" text-anchor="middle" textLength="92" lengthAdjust="spacingAndGlyphs" font-family="Liberation Sans">КУРИЦА</text><circle cx="580" cy="371" r="13" fill="#fff"/><radialGradient id="kib" cx="0.45" cy="0.4" r="0.6"><stop offset="0" stop-color="#8d6e58"/><stop offset="0.7" stop-color="#6e513f"/><stop offset="1" stop-color="#4e382b"/></radialGradient><circle cx="591" cy="362" r="17" fill="url(#kib)"/><circle cx="597.3" cy="372.7" r="1.3" fill="#a88a70" opacity="0.3"/><circle cx="593.8" cy="375.1" r="1.3" fill="#5a3f2f" opacity="0.3"/><circle cx="591.1" cy="362.8" r="1.9" fill="#a88a70" opacity="0.3"/><circle cx="585.9" cy="364.5" r="1.9" fill="#5a3f2f" opacity="0.3"/><circle cx="587.6" cy="352.7" r="1.5" fill="#4a3326" opacity="0.3"/><circle cx="599.4" cy="363.8" r="1.6" fill="#4a3326" opacity="0.3"/><circle cx="582.4" cy="350.3" r="0.8" fill="#9c7c64" opacity="0.3"/><circle cx="593.2" cy="357.2" r="1.2" fill="#9c7c64" opacity="0.3"/><circle cx="582.7" cy="359.2" r="0.8" fill="#4a3326" opacity="0.3"/><circle cx="585.8" cy="353.1" r="0.7" fill="#5a3f2f" opacity="0.3"/><circle cx="595.0" cy="373.6" r="0.8" fill="#9c7c64" opacity="0.3"/><circle cx="577.5" cy="364.0" r="1.1" fill="#5a3f2f" opacity="0.3"/><circle cx="597.7" cy="370.7" r="1.1" fill="#a88a70" opacity="0.3"/><circle cx="582.1" cy="364.8" r="1.1" fill="#4a3326" opacity="0.3"/><circle cx="595.5" cy="362.8" r="0.6" fill="#4a3326" opacity="0.3"/><circle cx="601.5" cy="367.0" r="1.4" fill="#5a3f2f" opacity="0.3"/><circle cx="584.8" cy="375.5" r="0.9" fill="#9c7c64" opacity="0.3"/><circle cx="595.3" cy="369.8" r="1.1" fill="#a88a70" opacity="0.3"/><circle cx="584.2" cy="357.2" r="0.8" fill="#9c7c64" opacity="0.3"/><circle cx="596.5" cy="359.1" r="1.1" fill="#4a3326" opacity="0.3"/><circle cx="586.0" cy="350.7" r="1.2" fill="#5a3f2f" opacity="0.3"/><circle cx="605.7" cy="361.0" r="1.8" fill="#9c7c64" opacity="0.3"/><circle cx="581.8" cy="362.5" r="1.9" fill="#5a3f2f" opacity="0.3"/><circle cx="591.3" cy="373.2" r="1.7" fill="#4a3326" opacity="0.3"/><circle cx="592.6" cy="351.7" r="0.7" fill="#a88a70" opacity="0.3"/><circle cx="590.6" cy="370.1" r="0.9" fill="#4a3326" opacity="0.3"/><circle cx="580.0" cy="370.6" r="2.0" fill="#5a3f2f" opacity="0.3"/><circle cx="590.7" cy="351.6" r="0.8" fill="#a88a70" opacity="0.3"/><circle cx="582.6" cy="350.4" r="0.6" fill="#4a3326" opacity="0.3"/><circle cx="594.2" cy="375.3" r="1.8" fill="#5a3f2f" opacity="0.3"/><circle cx="583.1" cy="356.2" r="1.0" fill="#4a3326" opacity="0.3"/><circle cx="583.3" cy="360.3" r="1.1" fill="#9c7c64" opacity="0.3"/><circle cx="599.9" cy="371.0" r="1.4" fill="#a88a70" opacity="0.3"/><circle cx="582.4" cy="351.1" r="1.0" fill="#4a3326" opacity="0.3"/><circle cx="578.8" cy="370.2" r="0.8" fill="#5a3f2f" opacity="0.3"/><circle cx="594.8" cy="364.6" r="1.5" fill="#9c7c64" opacity="0.3"/><circle cx="591.9" cy="358.1" r="1.5" fill="#9c7c64" opacity="0.3"/><circle cx="598.7" cy="369.9" r="1.2" fill="#a88a70" opacity="0.3"/><circle cx="600.0" cy="354.3" r="0.9" fill="#5a3f2f" opacity="0.3"/><circle cx="581.9" cy="370.8" r="1.4" fill="#9c7c64" opacity="0.3"/><text x="612" y="377.5" font-size="14" font-weight="bold" fill="#fff" font-family="Liberation Sans">8</text><text x="623.5" y="377.5" font-size="10" font-weight="bold" fill="#fff" font-family="Liberation Sans" textLength="15" lengthAdjust="spacingAndGlyphs">ММ</text><text x="612" y="381.5" font-size="3" font-weight="bold" fill="#fff" font-family="Liberation Sans" textLength="38" lengthAdjust="spacingAndGlyphs">СРЕДНИЙ РАЗМЕР ГРАНУЛ</text><rect x="657" y="340" width="34" height="35" rx="3" fill="#fff"/><rect x="660.00" y="343.00" width="1.33" height="1.33" fill="#111"/><rect x="660.00" y="347.00" width="1.33" height="1.33" fill="#111"/><rect x="660.00" y="351.00" width="1.33" height="1.33" fill="#111"/><rect x="660.00" y="356.33" width="1.33" height="1.33" fill="#111"/><rect x="660.00" y="357.67" width="1.33" height="1.33" fill="#111"/><rect x="660.00" y="359.00" width="1.33" height="1.33" fill="#111"/><rect x="660.00" y="363.00" width="1.33" height="1.33" fill="#111"/><rect x="660.00" y="369.67" width="1.33" height="1.33" fill="#111"/><rect x="661.33" y="343.00" width="1.33" height="1.33" fill="#111"/><rect x="661.33" y="345.67" width="1.33" height="1.33" fill="#111"/><rect x="661.33" y="347.00" width="1.33" height="1.33" fill="#111"/><rect x="661.33" y="348.33" width="1.33" height="1.33" fill="#111"/><rect x="661.33" y="349.67" width="1.33" height="1.33" fill="#111"/><rect x="661.33" y="351.00" width="1.33" height="1.33" fill="#111"/><rect x="661.33" y="352.33" width="1.33" height="1.33" fill="#111"/><rect x="661.33" y="357.67" width="1.33" height="1.33" fill="#111"/><rect x="661.33" y="360.33" width="1.33" height="1.33" fill="#111"/><rect x="661.33" y="361.67" width="1.33" height="1.33" fill="#111"/><rect x="661.33" y="368.33" width="1.33" height="1.33" fill="#111"/><rect x="661.33" y="369.67" width="1.33" height="1.33" fill="#111"/><rect x="662.67" y="343.00" width="1.33" height="1.33" fill="#111"/><rect x="662.67" y="344.33" width="1.33" height="1.33" fill="#111"/><rect x="662.67" y="347.00" width="1.33" height="1.33" fill="#111"/><rect x="662.67" y="349.67" width="1.33" height="1.33" fill="#111"/><rect x="662.67" y="353.67" width="1.33" height="1.33" fill="#111"/><rect x="662.67" y="355.00" width="1.33" height="1.33" fill="#111"/><rect x="662.67" y="357.67" width="1.33" height="1.33" fill="#111"/><rect x="662.67" y="360.33" width="1.33" height="1.33" fill="#111"/><rect x="662.67" y="361.67" width="1.33" height="1.33" fill="#111"/><rect x="662.67" y="365.67" width="1.33" height="1.33" fill="#111"/><rect x="662.67" y="367.00" width="1.33" height="1.33" fill="#111"/><rect x="662.67" y="368.33" width="1.33" height="1.33" fill="#111"/><rect x="664.00" y="344.33" width="1.33" height="1.33" fill="#111"/><rect x="664.00" y="345.67" width="1.33" height="1.33" fill="#111"/><rect x="664.00" y="347.00" width="1.33" height="1.33" fill="#111"/><rect x="664.00" y="348.33" width="1.33" height="1.33" fill="#111"/><rect x="664.00" y="351.00" width="1.33" height="1.33" fill="#111"/><rect x="664.00" y="353.67" width="1.33" height="1.33" fill="#111"/><rect x="664.00" y="355.00" width="1.33" height="1.33" fill="#111"/><rect x="664.00" y="357.67" width="1.33" height="1.33" fill="#111"/><rect x="664.00" y="360.33" width="1.33" height="1.33" fill="#111"/><rect x="664.00" y="361.67" width="1.33" height="1.33" fill="#111"/><rect x="664.00" y="363.00" width="1.33" height="1.33" fill="#111"/><rect x="664.00" y="364.33" width="1.33" height="1.33" fill="#111"/><rect x="664.00" y="368.33" width="1.33" height="1.33" fill="#111"/><rect x="665.33" y="343.00" width="1.33" height="1.33" fill="#111"/><rect x="665.33" y="344.33" width="1.33" height="1.33" fill="#111"/><rect x="665.33" y="348.33" width="1.33" height="1.33" fill="#111"/><rect x="665.33" y="351.00" width="1.33" height="1.33" fill="#111"/><rect x="665.33" y="352.33" width="1.33" height="1.33" fill="#111"/><rect x="665.33" y="355.00" width="1.33" height="1.33" fill="#111"/><rect x="665.33" y="356.33" width="1.33" height="1.33" fill="#111"/><rect x="665.33" y="357.67" width="1.33" height="1.33" fill="#111"/><rect x="665.33" y="359.00" width="1.33" height="1.33" fill="#111"/><rect x="665.33" y="361.67" width="1.33" height="1.33" fill="#111"/><rect x="665.33" y="364.33" width="1.33" height="1.33" fill="#111"/><rect x="665.33" y="365.67" width="1.33" height="1.33" fill="#111"/><rect x="665.33" y="368.33" width="1.33" height="1.33" fill="#111"/><rect x="666.67" y="344.33" width="1.33" height="1.33" fill="#111"/><rect x="666.67" y="345.67" width="1.33" height="1.33" fill="#111"/><rect x="666.67" y="349.67" width="1.33" height="1.33" fill="#111"/><rect x="666.67" y="351.00" width="1.33" height="1.33" fill="#111"/><rect x="666.67" y="355.00" width="1.33" height="1.33" fill="#111"/><rect x="666.67" y="360.33" width="1.33" height="1.33" fill="#111"/><rect x="666.67" y="361.67" width="1.33" height="1.33" fill="#111"/><rect x="666.67" y="363.00" width="1.33" height="1.33" fill="#111"/><rect x="666.67" y="365.67" width="1.33" height="1.33" fill="#111"/><rect x="666.67" y="368.33" width="1.33" height="1.33" fill="#111"/><rect x="668.00" y="344.33" width="1.33" height="1.33" fill="#111"/><rect x="668.00" y="345.67" width="1.33" height="1.33" fill="#111"/><rect x="668.00" y="348.33" width="1.33" height="1.33" fill="#111"/><rect x="668.00" y="349.67" width="1.33" height="1.33" fill="#111"/><rect x="668.00" y="355.00" width="1.33" height="1.33" fill="#111"/><rect x="668.00" y="357.67" width="1.33" height="1.33" fill="#111"/><rect x="668.00" y="359.00" width="1.33" height="1.33" fill="#111"/><rect x="668.00" y="360.33" width="1.33" height="1.33" fill="#111"/><rect x="668.00" y="361.67" width="1.33" height="1.33" fill="#111"/><rect x="668.00" y="363.00" width="1.33" height="1.33" fill="#111"/><rect x="668.00" y="364.33" width="1.33" height="1.33" fill="#111"/><rect x="668.00" y="365.67" width="1.33" height="1.33" fill="#111"/><rect x="668.00" y="368.33" width="1.33" height="1.33" fill="#111"/><rect x="668.00" y="369.67" width="1.33" height="1.33" fill="#111"/><rect x="669.33" y="349.67" width="1.33" height="1.33" fill="#111"/><rect x="669.33" y="351.00" width="1.33" height="1.33" fill="#111"/><rect x="669.33" y="352.33" width="1.33" height="1.33" fill="#111"/><rect x="669.33" y="357.67" width="1.33" height="1.33" fill="#111"/><rect x="669.33" y="360.33" width="1.33" height="1.33" fill="#111"/><rect x="669.33" y="363.00" width="1.33" height="1.33" fill="#111"/><rect x="669.33" y="365.67" width="1.33" height="1.33" fill="#111"/><rect x="670.67" y="348.33" width="1.33" height="1.33" fill="#111"/><rect x="670.67" y="353.67" width="1.33" height="1.33" fill="#111"/><rect x="670.67" y="360.33" width="1.33" height="1.33" fill="#111"/><rect x="670.67" y="364.33" width="1.33" height="1.33" fill="#111"/><rect x="672.00" y="343.00" width="1.33" height="1.33" fill="#111"/><rect x="672.00" y="347.00" width="1.33" height="1.33" fill="#111"/><rect x="672.00" y="349.67" width="1.33" height="1.33" fill="#111"/><rect x="672.00" y="352.33" width="1.33" height="1.33" fill="#111"/><rect x="672.00" y="355.00" width="1.33" height="1.33" fill="#111"/><rect x="672.00" y="356.33" width="1.33" height="1.33" fill="#111"/><rect x="672.00" y="359.00" width="1.33" height="1.33" fill="#111"/><rect x="672.00" y="363.00" width="1.33" height="1.33" fill="#111"/><rect x="672.00" y="364.33" width="1.33" height="1.33" fill="#111"/><rect x="672.00" y="365.67" width="1.33" height="1.33" fill="#111"/><rect x="672.00" y="368.33" width="1.33" height="1.33" fill="#111"/><rect x="672.00" y="369.67" width="1.33" height="1.33" fill="#111"/><rect x="673.33" y="345.67" width="1.33" height="1.33" fill="#111"/><rect x="673.33" y="348.33" width="1.33" height="1.33" fill="#111"/><rect x="673.33" y="351.00" width="1.33" height="1.33" fill="#111"/><rect x="673.33" y="352.33" width="1.33" height="1.33" fill="#111"/><rect x="673.33" y="357.67" width="1.33" height="1.33" fill="#111"/><rect x="673.33" y="360.33" width="1.33" height="1.33" fill="#111"/><rect x="673.33" y="361.67" width="1.33" height="1.33" fill="#111"/><rect x="673.33" y="363.00" width="1.33" height="1.33" fill="#111"/><rect x="673.33" y="369.67" width="1.33" height="1.33" fill="#111"/><rect x="674.67" y="343.00" width="1.33" height="1.33" fill="#111"/><rect x="674.67" y="344.33" width="1.33" height="1.33" fill="#111"/><rect x="674.67" y="345.67" width="1.33" height="1.33" fill="#111"/><rect x="674.67" y="347.00" width="1.33" height="1.33" fill="#111"/><rect x="674.67" y="348.33" width="1.33" height="1.33" fill="#111"/><rect x="674.67" y="351.00" width="1.33" height="1.33" fill="#111"/><rect x="674.67" y="352.33" width="1.33" height="1.33" fill="#111"/><rect x="674.67" y="356.33" width="1.33" height="1.33" fill="#111"/><rect x="674.67" y="357.67" width="1.33" height="1.33" fill="#111"/><rect x="674.67" y="359.00" width="1.33" height="1.33" fill="#111"/><rect x="674.67" y="361.67" width="1.33" height="1.33" fill="#111"/><rect x="674.67" y="365.67" width="1.33" height="1.33" fill="#111"/><rect x="674.67" y="368.33" width="1.33" height="1.33" fill="#111"/><rect x="674.67" y="369.67" width="1.33" height="1.33" fill="#111"/><rect x="676.00" y="343.00" width="1.33" height="1.33" fill="#111"/><rect x="676.00" y="344.33" width="1.33" height="1.33" fill="#111"/><rect x="676.00" y="347.00" width="1.33" height="1.33" fill="#111"/><rect x="676.00" y="348.33" width="1.33" height="1.33" fill="#111"/><rect x="676.00" y="349.67" width="1.33" height="1.33" fill="#111"/><rect x="676.00" y="352.33" width="1.33" height="1.33" fill="#111"/><rect x="676.00" y="360.33" width="1.33" height="1.33" fill="#111"/><rect x="676.00" y="361.67" width="1.33" height="1.33" fill="#111"/><rect x="676.00" y="363.00" width="1.33" height="1.33" fill="#111"/><rect x="676.00" y="364.33" width="1.33" height="1.33" fill="#111"/><rect x="676.00" y="365.67" width="1.33" height="1.33" fill="#111"/><rect x="676.00" y="368.33" width="1.33" height="1.33" fill="#111"/><rect x="676.00" y="369.67" width="1.33" height="1.33" fill="#111"/><rect x="677.33" y="343.00" width="1.33" height="1.33" fill="#111"/><rect x="677.33" y="349.67" width="1.33" height="1.33" fill="#111"/><rect x="677.33" y="353.67" width="1.33" height="1.33" fill="#111"/><rect x="677.33" y="357.67" width="1.33" height="1.33" fill="#111"/><rect x="677.33" y="359.00" width="1.33" height="1.33" fill="#111"/><rect x="677.33" y="363.00" width="1.33" height="1.33" fill="#111"/><rect x="677.33" y="369.67" width="1.33" height="1.33" fill="#111"/><rect x="678.67" y="344.33" width="1.33" height="1.33" fill="#111"/><rect x="678.67" y="351.00" width="1.33" height="1.33" fill="#111"/><rect x="678.67" y="359.00" width="1.33" height="1.33" fill="#111"/><rect x="678.67" y="363.00" width="1.33" height="1.33" fill="#111"/><rect x="678.67" y="364.33" width="1.33" height="1.33" fill="#111"/><rect x="678.67" y="365.67" width="1.33" height="1.33" fill="#111"/><rect x="678.67" y="369.67" width="1.33" height="1.33" fill="#111"/><rect x="680.00" y="343.00" width="1.33" height="1.33" fill="#111"/><rect x="680.00" y="345.67" width="1.33" height="1.33" fill="#111"/><rect x="680.00" y="348.33" width="1.33" height="1.33" fill="#111"/><rect x="680.00" y="349.67" width="1.33" height="1.33" fill="#111"/><rect x="680.00" y="352.33" width="1.33" height="1.33" fill="#111"/><rect x="680.00" y="353.67" width="1.33" height="1.33" fill="#111"/><rect x="680.00" y="361.67" width="1.33" height="1.33" fill="#111"/><rect x="680.00" y="364.33" width="1.33" height="1.33" fill="#111"/><rect x="680.00" y="365.67" width="1.33" height="1.33" fill="#111"/><rect x="680.00" y="368.33" width="1.33" height="1.33" fill="#111"/><rect x="681.33" y="348.33" width="1.33" height="1.33" fill="#111"/><rect x="681.33" y="349.67" width="1.33" height="1.33" fill="#111"/><rect x="681.33" y="353.67" width="1.33" height="1.33" fill="#111"/><rect x="681.33" y="360.33" width="1.33" height="1.33" fill="#111"/><rect x="681.33" y="365.67" width="1.33" height="1.33" fill="#111"/><rect x="681.33" y="369.67" width="1.33" height="1.33" fill="#111"/><rect x="682.67" y="345.67" width="1.33" height="1.33" fill="#111"/><rect x="682.67" y="348.33" width="1.33" height="1.33" fill="#111"/><rect x="682.67" y="351.00" width="1.33" height="1.33" fill="#111"/><rect x="682.67" y="355.00" width="1.33" height="1.33" fill="#111"/><rect x="682.67" y="356.33" width="1.33" height="1.33" fill="#111"/><rect x="682.67" y="357.67" width="1.33" height="1.33" fill="#111"/><rect x="682.67" y="359.00" width="1.33" height="1.33" fill="#111"/><rect x="682.67" y="363.00" width="1.33" height="1.33" fill="#111"/><rect x="682.67" y="364.33" width="1.33" height="1.33" fill="#111"/><rect x="682.67" y="365.67" width="1.33" height="1.33" fill="#111"/><rect x="682.67" y="369.67" width="1.33" height="1.33" fill="#111"/><rect x="684.00" y="344.33" width="1.33" height="1.33" fill="#111"/><rect x="684.00" y="345.67" width="1.33" height="1.33" fill="#111"/><rect x="684.00" y="347.00" width="1.33" height="1.33" fill="#111"/><rect x="684.00" y="349.67" width="1.33" height="1.33" fill="#111"/><rect x="684.00" y="351.00" width="1.33" height="1.33" fill="#111"/><rect x="684.00" y="353.67" width="1.33" height="1.33" fill="#111"/><rect x="684.00" y="356.33" width="1.33" height="1.33" fill="#111"/><rect x="684.00" y="359.00" width="1.33" height="1.33" fill="#111"/><rect x="684.00" y="360.33" width="1.33" height="1.33" fill="#111"/><rect x="684.00" y="363.00" width="1.33" height="1.33" fill="#111"/><rect x="684.00" y="364.33" width="1.33" height="1.33" fill="#111"/><rect x="684.00" y="365.67" width="1.33" height="1.33" fill="#111"/><rect x="684.00" y="368.33" width="1.33" height="1.33" fill="#111"/><rect x="684.00" y="369.67" width="1.33" height="1.33" fill="#111"/><rect x="685.33" y="351.00" width="1.33" height="1.33" fill="#111"/><rect x="685.33" y="356.33" width="1.33" height="1.33" fill="#111"/><rect x="685.33" y="357.67" width="1.33" height="1.33" fill="#111"/><rect x="685.33" y="360.33" width="1.33" height="1.33" fill="#111"/><rect x="685.33" y="364.33" width="1.33" height="1.33" fill="#111"/><rect x="685.33" y="365.67" width="1.33" height="1.33" fill="#111"/><rect x="685.33" y="368.33" width="1.33" height="1.33" fill="#111"/><rect x="685.33" y="369.67" width="1.33" height="1.33" fill="#111"/><rect x="686.67" y="344.33" width="1.33" height="1.33" fill="#111"/><rect x="686.67" y="347.00" width="1.33" height="1.33" fill="#111"/><rect x="686.67" y="348.33" width="1.33" height="1.33" fill="#111"/><rect x="686.67" y="351.00" width="1.33" height="1.33" fill="#111"/><rect x="686.67" y="352.33" width="1.33" height="1.33" fill="#111"/><rect x="686.67" y="357.67" width="1.33" height="1.33" fill="#111"/><rect x="686.67" y="364.33" width="1.33" height="1.33" fill="#111"/><rect x="686.67" y="365.67" width="1.33" height="1.33" fill="#111"/><rect x="686.67" y="367.00" width="1.33" height="1.33" fill="#111"/><rect x="686.67" y="368.33" width="1.33" height="1.33" fill="#111"/><rect x="660.00" y="343.00" width="9.33" height="9.33" fill="#fff"/><rect x="660.40" y="343.40" width="8.53" height="8.53" rx="1.5" fill="none" stroke="#d9525a" stroke-width="0.9"/><circle cx="664.67" cy="347.67" r="1.87" fill="#d9525a"/><rect x="678.67" y="343.00" width="9.33" height="9.33" fill="#fff"/><rect x="679.07" y="343.40" width="8.53" height="8.53" rx="1.5" fill="none" stroke="#d9525a" stroke-width="0.9"/><circle cx="683.33" cy="347.67" r="1.87" fill="#d9525a"/><rect x="660.00" y="361.67" width="9.33" height="9.33" fill="#fff"/><rect x="660.40" y="362.07" width="8.53" height="8.53" rx="1.5" fill="none" stroke="#d9525a" stroke-width="0.9"/><circle cx="664.67" cy="366.33" r="1.87" fill="#d9525a"/><g transform="rotate(-8 672 381)"><text x="672" y="380" font-size="4" font-weight="bold" fill="#fff" text-anchor="middle" font-family="Liberation Sans">ПОДРОБНЕЕ</text><text x="672" y="385" font-size="4" font-weight="bold" fill="#fff" text-anchor="middle" font-family="Liberation Sans">О БРЕНДЕ</text></g><text x="438" y="397.5" font-size="3.4" font-weight="bold" fill="#000" stroke="#000" stroke-width="0.07" textLength="113.0" lengthAdjust="spacingAndGlyphs" font-family="Liberation Sans">сухой полнорационный полнорационный рис кошек энергетическая кальций м</text><text x="438" y="401.0" font-size="3.4" font-weight="bold" fill="#000" stroke="#000" stroke-width="0.07" textLength="113.0" lengthAdjust="spacingAndGlyphs" font-family="Liberation Sans">курицы кукуруза животный минералы кошек белок кошек курицей курицей Ко</text><text x="438" y="404.5" font-size="3.4" font-weight="bold" fill="#000" stroke="#000" stroke-width="0.07" textLength="113.0" lengthAdjust="spacingAndGlyphs" font-family="Liberation Sans">жир кошек ценность кукуруза фосфор энергетическая жир зола минералы ку</text><text x="438" y="408.0" font-size="3.4" font-weight="bold" fill="#000" stroke="#000" stroke-width="0.07" textLength="113.0" lengthAdjust="spacingAndGlyphs" font-family="Liberation Sans">кошек клетчатка Состав ценность витамины мясо мясо фосфор минералы бел</text><rect x="438" y="413.9" width="6" height="3" fill="#d9525a"/><text x="445" y="416.5" font-size="3.2" font-weight="normal" fill="#000" stroke="#000" stroke-width="0.07" textLength="106.0" lengthAdjust="spacingAndGlyphs" font-family="Liberation Sans">клетчатка Состав энергетическая рис фосфор энергетическая зола мин</text><text x="438" y="420.05" font-size="3.2" font-weight="normal" fill="#000" stroke="#000" stroke-width="0.07" textLength="113.0" lengthAdjust="spacingAndGlyphs" font-family="Liberation Sans">ценность кукуруза кошек ценность полнорационный взрослых клетчатка кле</text><text x="438" y="423.6" font-size="3.2" font-weight="normal" fill="#000" stroke="#000" stroke-width="0.07" textLength="113.0" lengthAdjust="spacingAndGlyphs" font-family="Liberation Sans">Корм рис животный кошек взрослых Состав полнорационный курицы мясо кле</text><text x="438" y="427.15" font-size="3.2" font-weight="normal" fill="#000" stroke="#000" stroke-width="0.07" textLength="113.0" lengthAdjust="spacingAndGlyphs" font-family="Liberation Sans">Корм энергетическая рис кукуруза Корм белок животный рис кукуруза жир </text><text x="438" y="430.7" font-size="3.2" font-weight="normal" fill="#000" stroke="#000" stroke-width="0.07" textLength="86.1" lengthAdjust="spacingAndGlyphs" font-family="Liberation Sans">рис мясо сухой животный полнорационный с курицы минер</text><text x="438" y="434.25" font-size="3.2" font-weight="bold" fill="#000" stroke="#000" stroke-width="0.07" textLength="113.0" lengthAdjust="spacingAndGlyphs" font-family="Liberation Sans">сухой полнорационный клетчатка белок кукуруза сухой курицей энергетиче</text><text x="438" y="437.8" font-size="3.2" font-weight="normal" fill="#000" stroke="#000" stroke-width="0.07" textLength="113.0" lengthAdjust="spacingAndGlyphs" font-family="Liberation Sans">рис взрослых сухой животный мясо взрослых жир клетчатка кошек минералы</text><text x="438" y="441.35" font-size="3.2" font-weight="normal" fill="#000" stroke="#000" stroke-width="0.07" textLength="113.0" lengthAdjust="spacingAndGlyphs" font-family="Liberation Sans">витамины Состав минералы белок минералы рис полнорационный ценность ри</text><text x="438" y="444.9" font-size="3.2" font-weight="normal" fill="#000" stroke="#000" stroke-width="0.07" textLength="113.0" lengthAdjust="spacingAndGlyphs" font-family="Liberation Sans">Корм витамины белок ценность Состав курицы кальций Состав жир мясо мин</text><text x="438" y="448.45" font-size="3.2" font-weight="bold" fill="#000" stroke="#000" stroke-width="0.07" textLength="64.4" lengthAdjust="spacingAndGlyphs" font-family="Liberation Sans">рис витамины мясо фосфор полнорационный </text><rect x="438" y="449.4" width="6" height="3" fill="#d9525a"/><text x="445" y="452.0" font-size="3.2" font-weight="normal" fill="#000" stroke="#000" stroke-width="0.07" textLength="106.0" lengthAdjust="spacingAndGlyphs" font-family="Liberation Sans">кошек курицей ценность кальций кошек зола фосфор сухой витамины ку</text><text x="438" y="455.55" font-size="3.2" font-weight="normal" fill="#000" stroke="#000" stroke-width="0.07" textLength="113.0" lengthAdjust="spacingAndGlyphs" font-family="Liberation Sans">фосфор рис Корм рис кукуруза Состав животный для фосфор белок рис сухо</text><text x="438" y="459.1" font-size="3.2" font-weight="normal" fill="#000" stroke="#000" stroke-width="0.07" textLength="113.0" lengthAdjust="spacingAndGlyphs" font-family="Liberation Sans">жир взрослых кошек клетчатка кукуруза жир витамины с взрослых клетчатк</text><text x="438" y="462.65" font-size="3.2" font-weight="normal" fill="#000" stroke="#000" stroke-width="0.07" textLength="113.0" lengthAdjust="spacingAndGlyphs" font-family="Liberation Sans">витамины фосфор кукуруза кукуруза кошек клетчатка клетчатка Состав эне</text><text x="438" y="466.2" font-size="3.2" font-weight="bold" fill="#000" stroke="#000" stroke-width="0.07" textLength="57.0" lengthAdjust="spacingAndGlyphs" font-family="Liberation Sans">белок белок Состав курицей витамины</text><rect x="438" y="467.15" width="6" height="3" fill="#d9525a"/><text x="445" y="469.75" font-size="3.2" font-weight="normal" fill="#000" stroke="#000" stroke-width="0.07" textLength="106.0" lengthAdjust="spacingAndGlyphs" font-family="Liberation Sans">мясо энергетическая минералы Корм жир рис рис кальций энергетическ</text><text x="438" y="473.3" font-size="3.2" font-weight="normal" fill="#000" stroke="#000" stroke-width="0.07" textLength="113.0" lengthAdjust="spacingAndGlyphs" font-family="Liberation Sans">зола витамины кукуруза витамины кукуруза кальций энергетическая с мясо</text><text x="438" y="476.85" font-size="3.2" font-weight="normal" fill="#000" stroke="#000" stroke-width="0.07" textLength="113.0" lengthAdjust="spacingAndGlyphs" font-family="Liberation Sans">белок взрослых животный жир белок сухой полнорационный энергетическая </text><text x="438" y="480.4" font-size="3.2" font-weight="normal" fill="#000" stroke="#000" stroke-width="0.07" textLength="113.0" lengthAdjust="spacingAndGlyphs" font-family="Liberation Sans">мясо фосфор жир взрослых кошек клетчатка кошек животный кошек полнорац</text><text x="438" y="483.95" font-size="3.2" font-weight="bold" fill="#000" stroke="#000" stroke-width="0.07" textLength="60.1" lengthAdjust="spacingAndGlyphs" font-family="Liberation Sans">кальций клетчатка витамины витамины р</text><rect x="436" y="509.5" width="22" height="5.5" rx="1.5" fill="#d9525a"/><text x="447" y="513.8" font-size="3.5" font-weight="bold" fill="#fff" text-anchor="middle" font-family="Liberation Sans">КОНТАКТЫ</text><text x="437" y="520.5" font-size="3.6" font-weight="bold" fill="#111" font-family="Liberation Sans" textLength="59" lengthAdjust="spacingAndGlyphs">8 (800) 707-60-65 | PETFABRIC.RU</text><text x="630" y="400" font-size="4.8" font-weight="bold" fill="#d9525a" text-anchor="middle" font-family="Liberation Sans" textLength="38" lengthAdjust="spacingAndGlyphs">МЕНЮ НА ДЕНЬ</text><rect x="569" y="405.5" width="122" height="5.2" fill="#f1c6ca"/><rect x="569" y="405.5" width="122" height="10.5" fill="none" stroke="#555" stroke-width="0.35"/><line x1="569" y1="410.7" x2="691" y2="410.7" stroke="#555" stroke-width="0.35"/><line x1="590" y1="405.5" x2="590" y2="416.0" stroke="#555" stroke-width="0.35"/><text x="579.5" y="409.5" font-size="2.8" font-weight="bold" fill="#222" text-anchor="middle" font-family="Liberation Sans">ВЕС, КГ</text><text x="579.5" y="414.8" font-size="2.8" font-weight="bold" fill="#222" text-anchor="middle" font-family="Liberation Sans">НОРМА, Г</text><text x="597.2" y="409.5" font-size="3" fill="#222" text-anchor="middle" font-family="Liberation Sans">2</text><text x="597.2" y="414.8" font-size="3" fill="#222" text-anchor="middle" font-family="Liberation Sans">35</text><line x1="604.4285714285714" y1="405.5" x2="604.4285714285714" y2="416.0" stroke="#555" stroke-width="0.35"/><text x="611.6" y="409.5" font-size="3" fill="#222" text-anchor="middle" font-family="Liberation Sans">3</text><text x="611.6" y="414.8" font-size="3" fill="#222" text-anchor="middle" font-family="Liberation Sans">45</text><line x1="618.8571428571429" y1="405.5" x2="618.8571428571429" y2="416.0" stroke="#555" stroke-width="0.35"/><text x="626.1" y="409.5" font-size="3" fill="#222" text-anchor="middle" font-family="Liberation Sans">4</text><text x="626.1" y="414.8" font-size="3" fill="#222" text-anchor="middle" font-family="Liberation Sans">55</text><line x1="633.2857142857143" y1="405.5" x2="633.2857142857143" y2="416.0" stroke="#555" stroke-width="0.35"/><text x="640.5" y="409.5" font-size="3" fill="#222" text-anchor="middle" font-family="Liberation Sans">5</text><text x="640.5" y="414.8" font-size="3" fill="#222" text-anchor="middle" font-family="Liberation Sans">65</text><line x1="647.7142857142857" y1="405.5" x2="647.7142857142857" y2="416.0" stroke="#555" stroke-width="0.35"/><text x="654.9" y="409.5" font-size="3" fill="#222" text-anchor="middle" font-family="Liberation Sans">6</text><text x="654.9" y="414.8" font-size="3" fill="#222" text-anchor="middle" font-family="Liberation Sans">75</text><line x1="662.1428571428571" y1="405.5" x2="662.1428571428571" y2="416.0" stroke="#555" stroke-width="0.35"/><text x="669.4" y="409.5" font-size="3" fill="#222" text-anchor="middle" font-family="Liberation Sans">7</text><text x="669.4" y="414.8" font-size="3" fill="#222" text-anchor="middle" font-family="Liberation Sans">85</text><line x1="676.5714285714286" y1="405.5" x2="676.5714285714286" y2="416.0" stroke="#555" stroke-width="0.35"/><text x="683.8" y="409.5" font-size="3" fill="#222" text-anchor="middle" font-family="Liberation Sans">8</text><text x="683.8" y="414.8" font-size="3" fill="#222" text-anchor="middle" font-family="Liberation Sans">95</text><text x="569" y="422.5" font-size="3.2" font-weight="bold" fill="#000" stroke="#000" stroke-width="0.07" textLength="122.0" lengthAdjust="spacingAndGlyphs" font-family="Liberation Sans">жир клетчатка рис Состав взрослых кошек кальций Корм курицы минералы жир кле</text><text x="569" y="426.0" font-size="3.2" font-weight="normal" fill="#000" stroke="#000" stroke-width="0.07" textLength="122.0" lengthAdjust="spacingAndGlyphs" font-family="Liberation Sans">взрослых минералы жир полнорационный ценность фосфор кукуруза энергетическая</text><text x="569" y="429.5" font-size="3.2" font-weight="normal" fill="#000" stroke="#000" stroke-width="0.07" textLength="122.0" lengthAdjust="spacingAndGlyphs" font-family="Liberation Sans">взрослых Корм курицей животный энергетическая для клетчатка Корм для ценност</text><text x="569" y="433.0" font-size="3.2" font-weight="normal" fill="#000" stroke="#000" stroke-width="0.07" textLength="122.0" lengthAdjust="spacingAndGlyphs" font-family="Liberation Sans">ценность полнорационный фосфор жир взрослых кошек клетчатка энергетическая с</text><text x="569" y="436.5" font-size="3.2" font-weight="normal" fill="#000" stroke="#000" stroke-width="0.07" textLength="97.1" lengthAdjust="spacingAndGlyphs" font-family="Liberation Sans">минералы жир жир ценность фосфор полнорационный рис для жир </text><text x="569" y="440.0" font-size="3.2" font-weight="bold" fill="#000" stroke="#000" stroke-width="0.07" textLength="122.0" lengthAdjust="spacingAndGlyphs" font-family="Liberation Sans">зола мясо для минералы сухой Корм кукуруза ценность белок животный витамины </text><text x="569" y="443.5" font-size="3.2" font-weight="normal" fill="#000" stroke="#000" stroke-width="0.07" textLength="122.0" lengthAdjust="spacingAndGlyphs" font-family="Liberation Sans">мясо кошек фосфор Состав Корм сухой кошек Состав кошек для клетчатка взрослы</text><text x="569" y="447.0" font-size="3.2" font-weight="normal" fill="#000" stroke="#000" stroke-width="0.07" textLength="122.0" lengthAdjust="spacingAndGlyphs" font-family="Liberation Sans">белок мясо фосфор для полнорационный животный жир взрослых фосфор белок ценн</text><text x="569" y="450.5" font-size="3.2" font-weight="bold" fill="#000" stroke="#000" stroke-width="0.07" textLength="122.0" lengthAdjust="spacingAndGlyphs" font-family="Liberation Sans">кошек ценность курицей Корм с кошек витамины жир жир белок белок кукуруза по</text><text x="569" y="454.0" font-size="3.2" font-weight="normal" fill="#000" stroke="#000" stroke-width="0.07" textLength="88.4" lengthAdjust="spacingAndGlyphs" font-family="Liberation Sans">полнорационный зола жир белок мясо полнорационный энерг</text><text x="569" y="457.5" font-size="3.2" font-weight="normal" fill="#000" stroke="#000" stroke-width="0.07" textLength="122.0" lengthAdjust="spacingAndGlyphs" font-family="Liberation Sans">клетчатка витамины курицей сухой клетчатка клетчатка полнорационный клетчатк</text><text x="569" y="461.0" font-size="3.2" font-weight="bold" fill="#000" stroke="#000" stroke-width="0.07" textLength="122.0" lengthAdjust="spacingAndGlyphs" font-family="Liberation Sans">фосфор ценность полнорационный курицы полнорационный курицы Корм жир жир жир</text><text x="569" y="464.5" font-size="3.2" font-weight="normal" fill="#000" stroke="#000" stroke-width="0.07" textLength="122.0" lengthAdjust="spacingAndGlyphs" font-family="Liberation Sans">рис для энергетическая Корм жир зола минералы с рис зола полнорационный кури</text><text x="569" y="468.0" font-size="3.2" font-weight="normal" fill="#000" stroke="#000" stroke-width="0.07" textLength="122.0" lengthAdjust="spacingAndGlyphs" font-family="Liberation Sans">клетчатка курицей зола сухой кальций Состав взрослых мясо сухой кошек рис ку</text><text x="569" y="471.5" font-size="3.2" font-weight="normal" fill="#000" stroke="#000" stroke-width="0.07" textLength="73.8" lengthAdjust="spacingAndGlyphs" font-family="Liberation Sans">жир клетчатка жир жир жир кукуруза кошек куриц</text><text x="569" y="475.0" font-size="3.2" font-weight="normal" fill="#000" stroke="#000" stroke-width="0.07" textLength="122.0" lengthAdjust="spacingAndGlyphs" font-family="Liberation Sans">энергетическая кукуруза с фосфор белок ценность курицы полнорационный Корм к</text><text x="569" y="478.5" font-size="3.2" font-weight="bold" fill="#000" stroke="#000" stroke-width="0.07" textLength="122.0" lengthAdjust="spacingAndGlyphs" font-family="Liberation Sans">сухой полнорационный взрослых курицы кошек фосфор для минералы кукуруза зола</text><text x="569" y="482.0" font-size="3.2" font-weight="normal" fill="#000" stroke="#000" stroke-width="0.07" textLength="122.0" lengthAdjust="spacingAndGlyphs" font-family="Liberation Sans">Корм мясо кальций Корм Состав витамины минералы ценность кальций животный це</text><g fill="#111"><circle cx="573" cy="500" r="5"/><circle cx="573" cy="509.5" r="5"/><rect x="572" y="500" width="9" height="10"/><circle cx="630.5" cy="500" r="5"/><circle cx="630.5" cy="509.5" r="5"/><rect x="622.5" y="500" width="9" height="10"/></g><line x1="570.0" y1="495" x2="570.0" y2="515" stroke="#fff" stroke-width="0.6"/><line x1="626.0" y1="495" x2="626.0" y2="515" stroke="#fff" stroke-width="0.6"/><line x1="572.5" y1="495" x2="572.5" y2="515" stroke="#fff" stroke-width="0.6"/><line x1="628.5" y1="495" x2="628.5" y2="515" stroke="#fff" stroke-width="0.6"/><line x1="575.0" y1="495" x2="575.0" y2="515" stroke="#fff" stroke-width="0.6"/><line x1="631.0" y1="495" x2="631.0" y2="515" stroke="#fff" stroke-width="0.6"/><line x1="577.5" y1="495" x2="577.5" y2="515" stroke="#fff" stroke-width="0.6"/><line x1="633.5" y1="495" x2="633.5" y2="515" stroke="#fff" stroke-width="0.6"/><rect x="580" y="500" width="43" height="10" fill="#fff"/><rect x="581.00" y="499" width="0.5" height="12" fill="#111"/><rect x="582.30" y="499" width="0.5" height="12" fill="#111"/><rect x="584.00" y="499" width="1.5" height="12" fill="#111"/><rect x="586.30" y="499" width="0.5" height="12" fill="#111"/><rect x="587.30" y="499" width="0.5" height="12" fill="#111"/><rect x="588.30" y="499" width="1.5" height="12" fill="#111"/><rect x="591.00" y="499" width="1" height="12" fill="#111"/><rect x="592.50" y="499" width="0.5" height="12" fill="#111"/><rect x="594.20" y="499" width="1" height="12" fill="#111"/><rect x="596.00" y="499" width="0.5" height="12" fill="#111"/><rect x="597.00" y="499" width="1" height="12" fill="#111"/><rect x="598.50" y="499" width="0.5" height="12" fill="#111"/><rect x="600.20" y="499" width="1" height="12" fill="#111"/><rect x="602.00" y="499" width="0.5" height="12" fill="#111"/><rect x="603.00" y="499" width="1" height="12" fill="#111"/><rect x="604.80" y="499" width="1" height="12" fill="#111"/><rect x="606.30" y="499" width="1" height="12" fill="#111"/><rect x="608.50" y="499" width="1.5" height="12" fill="#111"/><rect x="611.20" y="499" width="0.5" height="12" fill="#111"/><rect x="612.20" y="499" width="0.5" height="12" fill="#111"/><rect x="613.50" y="499" width="1" height="12" fill="#111"/><rect x="615.00" y="499" width="1" height="12" fill="#111"/><rect x="616.50" y="499" width="1" height="12" fill="#111"/><rect x="618.70" y="499" width="1" height="12" fill="#111"/><rect x="620.90" y="499" width="0.5" height="12" fill="#111"/><text x="601.5" y="520.5" font-size="5.6" fill="#111" text-anchor="middle" font-family="Liberation Sans" textLength="42" lengthAdjust="spacingAndGlyphs">4680188810835</text><circle cx="647.5" cy="499" r="4.6" fill="#111"/><circle cx="649" cy="499" r="2" fill="#fff"/><rect x="649" y="498.3" width="3" height="1.4" fill="#111"/><g fill="none" stroke="#111" stroke-width="1.3"><circle cx="659.5" cy="497.5" r="2.2"/><path d="M656,502.5 L663,502.5 M659.5,499.7 L659.5,502.5"/><path d="M667,503 L667,496 Q669,494 671,496 L671,503 Z M666,503 L672,503"/><path d="M675,496 L682,496 M676,499 L681,499 M675.5,502 L681.5,502 M678.5,494.5 L678.5,503"/><path d="M686,496.5 L692,496.5 M689,496.5 L689,503 Q688,503.5 687,502"/></g><text x="660" y="519.5" font-size="18" font-weight="bold" fill="#d9525a" stroke="#d9525a" stroke-width="0.6" font-family="Liberation Sans" textLength="17.5" lengthAdjust="spacingAndGlyphs">10</text><text x="681" y="519.5" font-size="9" font-weight="bold" fill="#d9525a" stroke="#d9525a" stroke-width="0.3" font-family="Liberation Sans" textLength="10.5" lengthAdjust="spacingAndGlyphs">КГ</text><text x="681" y="508" font-size="2.6" fill="#d9525a" font-family="Liberation Sans" textLength="11" lengthAdjust="spacingAndGlyphs">МАССА</text><text x="681" y="510.8" font-size="2.6" fill="#d9525a" font-family="Liberation Sans" textLength="11" lengthAdjust="spacingAndGlyphs">НЕТТО</text><text x="653" y="524.5" font-size="3" fill="#111" font-family="Liberation Sans" textLength="40" lengthAdjust="spacingAndGlyphs">ТУ 10.92.13-001-0479683</text></g><rect x="420.5" y="132.8" width="288.5" height="405.7" fill="none" stroke="#e03a3a" stroke-width="1"/><rect x="424" y="137" width="282" height="397" fill="none" stroke="#222" stroke-width="1"/><rect x="420.5" y="578.5" width="288.5" height="60" fill="#e35b73" stroke="#f03a50" stroke-width="1"/><rect x="424" y="583" width="282" height="60" fill="none" stroke="#b8a0a4" stroke-width="0.8"/><use href="#logo" transform="translate(1,447)"/><defs>
<linearGradient id="bagH" x1="0" y1="0" x2="1" y2="0"><stop offset="0" stop-color="#e2e2e2"/><stop offset="0.15" stop-color="#f0f0f0"/><stop offset="0.6" stop-color="#f5f5f5"/><stop offset="0.92" stop-color="#eeeeee"/><stop offset="1" stop-color="#d4d4d4"/></linearGradient>
<linearGradient id="bagV" x1="0" y1="0" x2="0" y2="1"><stop offset="0" stop-color="#000" stop-opacity="0.06"/><stop offset="0.12" stop-color="#000" stop-opacity="0.0"/><stop offset="0.8" stop-color="#000" stop-opacity="0.0"/><stop offset="0.95" stop-color="#000" stop-opacity="0.1"/><stop offset="1" stop-color="#000" stop-opacity="0.2"/></linearGradient>
</defs><path d="M40,160 L237,160 Q243,160 243,166 L243,200 Q244,260 244.5,340 L243.5,480 Q243,489 238,489 L40,489 Z" fill="url(#bagH)"/><path d="M40,160 L237,160 Q243,160 243,166 L243,200 Q244,260 244.5,340 L243.5,480 Q243,489 238,489 L40,489 Z" fill="url(#bagV)"/><line x1="62" y1="166" x2="243" y2="166" stroke="#000" stroke-opacity="0.04" stroke-width="1"/><line x1="62" y1="169" x2="243" y2="169" stroke="#000" stroke-opacity="0.04" stroke-width="1"/><line x1="62" y1="172" x2="243" y2="172" stroke="#000" stroke-opacity="0.04" stroke-width="1"/><line x1="62" y1="175" x2="243" y2="175" stroke="#000" stroke-opacity="0.04" stroke-width="1"/><line x1="62" y1="178" x2="243" y2="178" stroke="#000" stroke-opacity="0.04" stroke-width="1"/><line x1="62" y1="181" x2="243" y2="181" stroke="#000" stroke-opacity="0.04" stroke-width="1"/><line x1="62" y1="184" x2="243" y2="184" stroke="#000" stroke-opacity="0.04" stroke-width="1"/><line x1="62" y1="187" x2="243" y2="187" stroke="#000" stroke-opacity="0.04" stroke-width="1"/><rect x="62" y="160" width="181" height="27" fill="#000" opacity="0.045"/><path d="M62,187.5 L243,187.5" stroke="#000" stroke-opacity="0.08" stroke-width="1"/><path d="M62,193 L243,192" stroke="#000" stroke-opacity="0.06" stroke-width="1.2"/><path d="M66,230 L66,196 Q66,192 70,192 L230,192 Q234,192 234,196 L234,230" stroke="#000" stroke-opacity="0.04" stroke-width="1" fill="none"/><use href="#ab" transform="translate(99,261) scale(0.3577,0.3627) translate(-424,-137)"/><rect x="99" y="261" width="101" height="91" fill="#000" opacity="0.05"/><rect x="99" y="352" width="101" height="53" fill="#f4f4f4" opacity="0.35"/><line x1="438" y1="76" x2="438" y2="623" stroke="#62d2dc" stroke-width="1.5"/><line x1="562" y1="76" x2="562" y2="623" stroke="#62d2dc" stroke-width="1.5"/><line x1="568" y1="76" x2="568" y2="623" stroke="#62d2dc" stroke-width="1.5"/><line x1="692" y1="76" x2="692" y2="623" stroke="#62d2dc" stroke-width="1.5"/><line x1="62" y1="120.6" x2="354" y2="120.6" stroke="#5a72b8" stroke-width="1.3"/><line x1="62" y1="530.3" x2="354" y2="530.3" stroke="#5a72b8" stroke-width="1.3"/><line x1="354" y1="120.6" x2="354" y2="530.3" stroke="#5a72b8" stroke-width="1.3"/><line x1="-58" y1="120.6" x2="354" y2="530.3" stroke="#5a72b8" stroke-width="1.1"/><line x1="354" y1="120.6" x2="-58" y2="530.3" stroke="#5a72b8" stroke-width="1.1"/><rect x="146" y="118.6" width="4" height="4" fill="#fff" stroke="#5a72b8" stroke-width="1"/><rect x="352" y="118.6" width="4" height="4" fill="#fff" stroke="#5a72b8" stroke-width="1"/><rect x="352" y="323.5" width="4" height="4" fill="#fff" stroke="#5a72b8" stroke-width="1"/><rect x="146" y="528.3" width="4" height="4" fill="#fff" stroke="#5a72b8" stroke-width="1"/><rect x="352" y="528.3" width="4" height="4" fill="#fff" stroke="#5a72b8" stroke-width="1"/></svg>

<svg class="s" style="left:7px;top:5px" width="12" height="11" viewBox="0 0 12 11"><rect width="12" height="11" rx="1.5" fill="#330000"/><text x="6" y="8.6" font-size="7.5" font-weight="bold" fill="#ff9a00" text-anchor="middle" font-family="Liberation Sans">Ai</text></svg>
<svg class="s" style="left:28px;top:6px" width="14" height="11" viewBox="0 0 14 11"><path d="M7,0.5 L13.5,6 L11.5,6 L11.5,10.5 L8.5,10.5 L8.5,7.5 L5.5,7.5 L5.5,10.5 L2.5,10.5 L2.5,6 L0.5,6 Z" fill="#d4d4d4"/></svg>
<div class="a" style="left:51px;top:4px;width:1px;height:14px;background:#474747;"></div>
<div class="a" style="left:533px;top:0px;width:27px;height:1px;background:#3d72b0;"></div>
<div class="a" style="left:560px;top:0px;width:106px;height:1px;background:#cfcfcf;"></div>
<div class="t" style="left:63.0px;top:7.00px;font-size:9.16px;font-weight:normal;color:#d6d6d6;transform:scaleX(0.868);transform-origin:0 0;">File</div>
<div class="t" style="left:85.7px;top:7.00px;font-size:9.16px;font-weight:normal;color:#d6d6d6;transform:scaleX(0.944);transform-origin:0 0;">Edit</div>
<div class="t" style="left:110.5px;top:7.00px;font-size:9.16px;font-weight:normal;color:#d6d6d6;transform:scaleX(0.937);transform-origin:0 0;">Object</div>
<div class="t" style="left:145.9px;top:7.00px;font-size:9.16px;font-weight:normal;color:#d6d6d6;transform:scaleX(0.892);transform-origin:0 0;">Type</div>
<div class="t" style="left:173.0px;top:7.00px;font-size:9.16px;font-weight:normal;color:#d6d6d6;transform:scaleX(0.904);transform-origin:0 0;">Select</div>
<div class="t" style="left:206.0px;top:7.00px;font-size:9.16px;font-weight:normal;color:#d6d6d6;transform:scaleX(0.946);transform-origin:0 0;">Effect</div>
<div class="t" style="left:237.0px;top:7.00px;font-size:9.16px;font-weight:normal;color:#d6d6d6;transform:scaleX(0.965);transform-origin:0 0;">View</div>
<div class="t" style="left:265.0px;top:7.00px;font-size:9.16px;font-weight:normal;color:#d6d6d6;transform:scaleX(0.952);transform-origin:0 0;">Window</div>
<div class="t" style="left:306.0px;top:7.00px;font-size:9.16px;font-weight:normal;color:#d6d6d6;transform:scaleX(0.919);transform-origin:0 0;">Help</div>
<div class="a" style="left:333px;top:4px;width:1px;height:14px;background:#474747;"></div>
<svg class="s" style="left:1036px;top:4px" width="13" height="13" viewBox="0 0 13 13"><path d="M6.5,1.5 C9,1.5 10,3.5 10,6 L10,9 L11.5,10.5 L1.5,10.5 L3,9 L3,6 C3,3.5 4,1.5 6.5,1.5 Z M5,11 L8,11 L6.5,12.5 Z" fill="#cfcfcf"/><circle cx="10.5" cy="2.5" r="2.5" fill="#2e8ef0"/></svg>
<svg class="s" style="left:1058px;top:5px" width="13" height="13" viewBox="0 0 13 13"><circle cx="5" cy="5" r="3.8" fill="none" stroke="#d8d8d8" stroke-width="1.4"/><line x1="7.8" y1="7.8" x2="11.5" y2="11.5" stroke="#d8d8d8" stroke-width="1.6"/></svg>
<div class="a" style="left:1079px;top:3px;width:1px;height:15px;background:#4a4a4a;"></div>
<svg class="s" style="left:1093px;top:7px" width="13" height="9" viewBox="0 0 13 9"><rect x="0" y="0" width="13" height="9" fill="#d8d8d8"/><line x1="4.5" y1="0" x2="4.5" y2="9" stroke="#535353" stroke-width="1"/><line x1="4.5" y1="4.5" x2="13" y2="4.5" stroke="#535353" stroke-width="1"/></svg>
<svg class="s" style="left:1118px;top:6px" width="13" height="11" viewBox="0 0 13 11"><rect x="0.6" y="0.6" width="11.8" height="9.8" fill="none" stroke="#d8d8d8" stroke-width="1.2"/><rect x="0.6" y="0.6" width="3.5" height="9.8" fill="#d8d8d8"/></svg>
<div class="a" style="left:1138px;top:-2px;width:63px;height:15px;background:transparent;border:1px solid #5e5e5e;border-radius:3px;"></div>
<div class="a" style="left:1160px;top:-1px;width:1px;height:13px;background:#5e5e5e;"></div>
<div class="a" style="left:1179px;top:-1px;width:1px;height:13px;background:#5e5e5e;"></div>
<div class="a" style="left:1144px;top:6px;width:9px;height:1.5px;background:#d8d8d8;"></div>
<svg class="s" style="left:1163px;top:1px" width="11" height="10" viewBox="0 0 11 10"><rect x="3" y="0.7" width="6.5" height="5.5" fill="none" stroke="#d8d8d8" stroke-width="1.2"/><rect x="0.7" y="3" width="6.5" height="5.5" fill="#535353" stroke="#d8d8d8" stroke-width="1.2"/></svg>
<svg class="s" style="left:1183px;top:1px" width="10" height="10" viewBox="0 0 10 10"><path d="M1,1 L9,9 M9,1 L1,9" stroke="#d8d8d8" stroke-width="1.3"/></svg>
<svg class="s" style="left:2px;top:27px" width="3" height="14" viewBox="0 0 3 14"><rect x="0.5" y="0" width="1" height="1" fill="#777"/><rect x="0.5" y="2" width="1" height="1" fill="#777"/><rect x="0.5" y="4" width="1" height="1" fill="#777"/><rect x="0.5" y="6" width="1" height="1" fill="#777"/><rect x="0.5" y="8" width="1" height="1" fill="#777"/><rect x="0.5" y="10" width="1" height="1" fill="#777"/><rect x="0.5" y="12" width="1" height="1" fill="#777"/></svg>
<div class="t" style="left:12.0px;top:30.00px;font-size:8.14px;font-weight:normal;color:#d6d6d6;transform:scaleX(0.846);transform-origin:0 0;">Linked File</div>
<svg class="s" style="left:12px;top:38px" width="33" height="1" viewBox="0 0 33 1"><rect x="0" y="0" width="1" height="1" fill="#9a9a9a"/><rect x="2" y="0" width="1" height="1" fill="#9a9a9a"/><rect x="4" y="0" width="1" height="1" fill="#9a9a9a"/><rect x="6" y="0" width="1" height="1" fill="#9a9a9a"/><rect x="8" y="0" width="1" height="1" fill="#9a9a9a"/><rect x="10" y="0" width="1" height="1" fill="#9a9a9a"/><rect x="12" y="0" width="1" height="1" fill="#9a9a9a"/><rect x="14" y="0" width="1" height="1" fill="#9a9a9a"/><rect x="16" y="0" width="1" height="1" fill="#9a9a9a"/><rect x="18" y="0" width="1" height="1" fill="#9a9a9a"/><rect x="20" y="0" width="1" height="1" fill="#9a9a9a"/><rect x="22" y="0" width="1" height="1" fill="#9a9a9a"/><rect x="24" y="0" width="1" height="1" fill="#9a9a9a"/><rect x="26" y="0" width="1" height="1" fill="#9a9a9a"/><rect x="28" y="0" width="1" height="1" fill="#9a9a9a"/><rect x="30" y="0" width="1" height="1" fill="#9a9a9a"/><rect x="32" y="0" width="1" height="1" fill="#9a9a9a"/></svg>
<div class="a" style="left:61px;top:25px;width:1px;height:17px;background:#474747;"></div>
<div class="t" style="left:67.3px;top:30.00px;font-size:8.14px;font-weight:normal;color:#d6d6d6;transform:scaleX(0.852);transform-origin:0 0;">Cat Chicken 10.png</div>
<svg class="s" style="left:67px;top:38px" width="61" height="1" viewBox="0 0 61 1"><rect x="0" y="0" width="1" height="1" fill="#9a9a9a"/><rect x="2" y="0" width="1" height="1" fill="#9a9a9a"/><rect x="4" y="0" width="1" height="1" fill="#9a9a9a"/><rect x="6" y="0" width="1" height="1" fill="#9a9a9a"/><rect x="8" y="0" width="1" height="1" fill="#9a9a9a"/><rect x="10" y="0" width="1" height="1" fill="#9a9a9a"/><rect x="12" y="0" width="1" height="1" fill="#9a9a9a"/><rect x="14" y="0" width="1" height="1" fill="#9a9a9a"/><rect x="16" y="0" width="1" height="1" fill="#9a9a9a"/><rect x="18" y="0" width="1" height="1" fill="#9a9a9a"/><rect x="20" y="0" width="1" height="1" fill="#9a9a9a"/><rect x="22" y="0" width="1" height="1" fill="#9a9a9a"/><rect x="24" y="0" width="1" height="1" fill="#9a9a9a"/><rect x="26" y="0" width="1" height="1" fill="#9a9a9a"/><rect x="28" y="0" width="1" height="1" fill="#9a9a9a"/><rect x="30" y="0" width="1" height="1" fill="#9a9a9a"/><rect x="32" y="0" width="1" height="1" fill="#9a9a9a"/><rect x="34" y="0" width="1" height="1" fill="#9a9a9a"/><rect x="36" y="0" width="1" height="1" fill="#9a9a9a"/><rect x="38" y="0" width="1" height="1" fill="#9a9a9a"/><rect x="40" y="0" width="1" height="1" fill="#9a9a9a"/><rect x="42" y="0" width="1" height="1" fill="#9a9a9a"/><rect x="44" y="0" width="1" height="1" fill="#9a9a9a"/><rect x="46" y="0" width="1" height="1" fill="#9a9a9a"/><rect x="48" y="0" width="1" height="1" fill="#9a9a9a"/><rect x="50" y="0" width="1" height="1" fill="#9a9a9a"/><rect x="52" y="0" width="1" height="1" fill="#9a9a9a"/><rect x="54" y="0" width="1" height="1" fill="#9a9a9a"/><rect x="56" y="0" width="1" height="1" fill="#9a9a9a"/><rect x="58" y="0" width="1" height="1" fill="#9a9a9a"/><rect x="60" y="0" width="1" height="1" fill="#9a9a9a"/></svg>
<div class="t" style="left:134.6px;top:30.00px;font-size:8.14px;font-weight:normal;color:#c4c4c4;transform:scaleX(0.810);transform-origin:0 0;">Transparent RGB</div>
<div class="t" style="left:193.0px;top:30.00px;font-size:8.14px;font-weight:normal;color:#c4c4c4;transform:scaleX(0.865);transform-origin:0 0;">PPI: 249</div>
<div class="a" style="left:233px;top:27px;width:46px;height:14px;background:transparent;border:1px solid #6e6e6e;border-radius:2px;"></div>
<div class="t" style="left:245.0px;top:30.00px;font-size:8.14px;font-weight:normal;color:#d6d6d6;transform:scaleX(0.853);transform-origin:0 0;">Embed</div>
<div class="a" style="left:285px;top:27px;width:64px;height:14px;background:transparent;border:1px solid #6e6e6e;border-radius:2px;"></div>
<div class="t" style="left:289.5px;top:30.00px;font-size:8.14px;font-weight:normal;color:#d6d6d6;transform:scaleX(0.864);transform-origin:0 0;">Edit In Photoshop</div>
<div class="a" style="left:431px;top:27px;width:45px;height:14px;background:transparent;border:1px solid #6e6e6e;border-radius:2px;"></div>
<div class="t" style="left:446.0px;top:30.00px;font-size:8.14px;font-weight:normal;color:#d6d6d6;transform:scaleX(0.771);transform-origin:0 0;">Mask</div>
<div class="a" style="left:479px;top:27px;width:52px;height:14px;background:transparent;border:1px solid #6e6e6e;border-radius:2px;"></div>
<div class="t" style="left:485.0px;top:30.00px;font-size:8.14px;font-weight:normal;color:#d6d6d6;transform:scaleX(0.917);transform-origin:0 0;">Crop Image</div>
<div class="a" style="left:359px;top:27px;width:61px;height:14px;background:transparent;border:1px solid #6e6e6e;border-radius:2px;"></div>
<div class="a" style="left:366px;top:31.5px;width:5px;height:5px;background:#1f7ef5;border-radius:50%;"></div>
<div class="t" style="left:374.5px;top:30.00px;font-size:8.14px;font-weight:normal;color:#d6d6d6;transform:scaleX(0.873);transform-origin:0 0;">Image Trace</div>
<svg class="s" style="left:422px;top:31px" width="8" height="6" viewBox="0 0 8 6"><path d="M1,1.5 L4,4.5 L7,1.5" fill="none" stroke="#d0d0d0" stroke-width="1.1"/></svg>
<div class="t" style="left:541.7px;top:30.00px;font-size:8.14px;font-weight:normal;color:#d6d6d6;transform:scaleX(0.868);transform-origin:0 0;">Opacity:</div>
<svg class="s" style="left:542px;top:38px" width="25" height="1" viewBox="0 0 25 1"><rect x="0" y="0" width="1" height="1" fill="#9a9a9a"/><rect x="2" y="0" width="1" height="1" fill="#9a9a9a"/><rect x="4" y="0" width="1" height="1" fill="#9a9a9a"/><rect x="6" y="0" width="1" height="1" fill="#9a9a9a"/><rect x="8" y="0" width="1" height="1" fill="#9a9a9a"/><rect x="10" y="0" width="1" height="1" fill="#9a9a9a"/><rect x="12" y="0" width="1" height="1" fill="#9a9a9a"/><rect x="14" y="0" width="1" height="1" fill="#9a9a9a"/><rect x="16" y="0" width="1" height="1" fill="#9a9a9a"/><rect x="18" y="0" width="1" height="1" fill="#9a9a9a"/><rect x="20" y="0" width="1" height="1" fill="#9a9a9a"/><rect x="22" y="0" width="1" height="1" fill="#9a9a9a"/><rect x="24" y="0" width="1" height="1" fill="#9a9a9a"/></svg>
<div class="a" style="left:571px;top:27px;width:36px;height:14px;background:#474747;border-radius:2px 0 0 2px;"></div>
<div class="t" style="left:573.5px;top:30.00px;font-size:8.14px;font-weight:normal;color:#e0e0e0;transform:scaleX(0.922);transform-origin:0 0;">100%</div>
<div class="a" style="left:607px;top:27px;width:13px;height:14px;background:#4a4a4a;border-radius:0 2px 2px 0;"></div>
<svg class="s" style="left:610px;top:30px" width="7" height="8" viewBox="0 0 7 8"><path d="M2,1 L5,4 L2,7" fill="none" stroke="#d0d0d0" stroke-width="1.1"/></svg>
<div class="a" style="left:627px;top:25px;width:1px;height:17px;background:#474747;"></div>
<svg class="s" style="left:633px;top:27px" width="18" height="14" viewBox="0 0 18 14"><path d="M3,1 L3,4 M1,3 L4,3" stroke="#cfcfcf" stroke-width="1"/><path d="M3.5,3.5 L9,3.5 L11.5,6 L11.5,12.5 L3.5,12.5 Z" fill="none" stroke="#cfcfcf" stroke-width="1.1"/><path d="M13,6.5 L15,8.5 L17,6.5" fill="none" stroke="#cfcfcf" stroke-width="1"/></svg>
<svg class="s" style="left:661px;top:27px" width="14" height="14" viewBox="0 0 14 14"><rect x="0.5" y="1" width="1.2" height="12" fill="#cfcfcf"/><rect x="3" y="2.5" width="6" height="4" fill="#cfcfcf"/><rect x="3" y="8" width="10" height="4" fill="#cfcfcf"/></svg>
<svg class="s" style="left:682px;top:27px" width="14" height="14" viewBox="0 0 14 14"><rect x="6" y="0" width="1.2" height="14" fill="#cfcfcf"/><rect x="3" y="2.5" width="7" height="4" fill="#cfcfcf"/><rect x="1" y="8" width="11" height="4" fill="#cfcfcf"/></svg>
<svg class="s" style="left:699px;top:27px" width="14" height="14" viewBox="0 0 14 14"><rect x="11.3" y="1" width="1.2" height="12" fill="#cfcfcf"/><rect x="4" y="2.5" width="6" height="4" fill="#cfcfcf"/><rect x="0" y="8" width="10" height="4" fill="#cfcfcf"/></svg>
<svg class="s" style="left:721px;top:27px" width="14" height="14" viewBox="0 0 14 14"><rect x="0" y="0.5" width="14" height="1.2" fill="#cfcfcf"/><rect x="2" y="3" width="4" height="10" fill="#cfcfcf"/><rect x="7.5" y="3" width="4" height="6" fill="#cfcfcf"/></svg>
<svg class="s" style="left:738px;top:27px" width="14" height="14" viewBox="0 0 14 14"><rect x="0" y="6.5" width="13" height="1.2" fill="#cfcfcf"/><rect x="2" y="2" width="4" height="10" fill="#cfcfcf"/><rect x="7.5" y="4" width="4" height="6" fill="#cfcfcf"/></svg>
<svg class="s" style="left:756px;top:27px" width="14" height="14" viewBox="0 0 14 14"><rect x="0" y="12.3" width="13" height="1.2" fill="#cfcfcf"/><rect x="2" y="1" width="4" height="10" fill="#cfcfcf"/><rect x="7.5" y="5" width="4" height="6" fill="#cfcfcf"/></svg>
<div class="t" style="left:781.0px;top:30.00px;font-size:8.14px;font-weight:normal;color:#d6d6d6;transform:scaleX(0.924);transform-origin:0 0;">Transform</div>
<svg class="s" style="left:781px;top:38px" width="34" height="1" viewBox="0 0 34 1"><rect x="0" y="0" width="1" height="1" fill="#9a9a9a"/><rect x="2" y="0" width="1" height="1" fill="#9a9a9a"/><rect x="4" y="0" width="1" height="1" fill="#9a9a9a"/><rect x="6" y="0" width="1" height="1" fill="#9a9a9a"/><rect x="8" y="0" width="1" height="1" fill="#9a9a9a"/><rect x="10" y="0" width="1" height="1" fill="#9a9a9a"/><rect x="12" y="0" width="1" height="1" fill="#9a9a9a"/><rect x="14" y="0" width="1" height="1" fill="#9a9a9a"/><rect x="16" y="0" width="1" height="1" fill="#9a9a9a"/><rect x="18" y="0" width="1" height="1" fill="#9a9a9a"/><rect x="20" y="0" width="1" height="1" fill="#9a9a9a"/><rect x="22" y="0" width="1" height="1" fill="#9a9a9a"/><rect x="24" y="0" width="1" height="1" fill="#9a9a9a"/><rect x="26" y="0" width="1" height="1" fill="#9a9a9a"/><rect x="28" y="0" width="1" height="1" fill="#9a9a9a"/><rect x="30" y="0" width="1" height="1" fill="#9a9a9a"/><rect x="32" y="0" width="1" height="1" fill="#9a9a9a"/></svg>
<svg class="s" style="left:825px;top:27px" width="13" height="13" viewBox="0 0 13 13"><rect x="3" y="3" width="7" height="7" fill="none" stroke="#cfcfcf" stroke-width="1"/><path d="M0.5,3 L0.5,0.5 L3,0.5 M10,0.5 L12.5,0.5 L12.5,3 M12.5,10 L12.5,12.5 L10,12.5 M3,12.5 L0.5,12.5 L0.5,10 M1,1 L3,3 M12,1 L10,3 M12,12 L10,10 M1,12 L3,10" fill="none" stroke="#cfcfcf" stroke-width="1"/></svg>
<svg class="s" style="left:1126px;top:28px" width="11" height="11" viewBox="0 0 11 11"><rect x="0" y="0" width="3.5" height="3.5" fill="#cfcfcf"/><rect x="7" y="0" width="3.5" height="3.5" fill="#cfcfcf"/><rect x="0" y="7" width="3.5" height="3.5" fill="#cfcfcf"/><rect x="7" y="7" width="3.5" height="3.5" fill="#cfcfcf"/><rect x="3.5" y="3.5" width="3.5" height="3.5" fill="#cfcfcf"/></svg>
<svg class="s" style="left:1144px;top:27px" width="17" height="13" viewBox="0 0 17 13"><rect x="0" y="0" width="3" height="3" fill="#cfcfcf"/><rect x="0" y="5" width="3" height="3" fill="#cfcfcf"/><rect x="0" y="10" width="3" height="3" fill="#cfcfcf"/><path d="M4,3.5 L8,3.5 Q11,3.5 11,6.5 Q11,9.5 8,9.5 L4,9.5" fill="none" stroke="#cfcfcf" stroke-width="1.6"/><path d="M13.5,5.5 L15,7 L16.5,5.5" fill="none" stroke="#888" stroke-width="0.8"/></svg>
<svg class="s" style="left:1178px;top:29px" width="10" height="9" viewBox="0 0 10 9"><rect x="0" y="0" width="1.5" height="1.3" fill="#cfcfcf"/><rect x="2.5" y="0" width="7.5" height="1.3" fill="#cfcfcf"/><rect x="0" y="2.5" width="1.5" height="1.3" fill="#cfcfcf"/><rect x="2.5" y="2.5" width="7.5" height="1.3" fill="#cfcfcf"/><rect x="0" y="5" width="1.5" height="1.3" fill="#cfcfcf"/><rect x="2.5" y="5" width="7.5" height="1.3" fill="#cfcfcf"/><rect x="0" y="7.5" width="1.5" height="1.3" fill="#cfcfcf"/><rect x="2.5" y="7.5" width="7.5" height="1.3" fill="#cfcfcf"/></svg>
<div class="t" style="left:7.0px;top:46.00px;font-size:7.27px;font-weight:normal;color:#bdbdbd;transform:scaleX(1.237);transform-origin:0 0;">«</div>
<div class="a" style="left:0px;top:54px;width:50px;height:1px;background:#3c3c3c;"></div>
<div class="t" style="left:59.0px;top:52.00px;font-size:9.16px;font-weight:bold;color:#e8e8e8;transform:scaleX(0.843);transform-origin:0 0;">Wooly Package A4 bleeds_3mm_.ai* @ 66.67 % (CMYK/Preview)</div>
<svg class="s" style="left:305px;top:51px" width="7" height="7" viewBox="0 0 7 7"><path d="M0.5,0.5 L6.5,6.5 M6.5,0.5 L0.5,6.5" stroke="#cfcfcf" stroke-width="1.1"/></svg>

<svg class="s" style="left:52px;top:66px" width="959" height="10" viewBox="0 0 959 10"><rect x="11.8" y="7.5" width="0.8" height="2.5" fill="#7a7a7a"/><rect x="18.5" y="7.5" width="0.8" height="2.5" fill="#7a7a7a"/><rect x="25.2" y="7.5" width="0.8" height="2.5" fill="#7a7a7a"/><rect x="31.8" y="7.5" width="0.8" height="2.5" fill="#7a7a7a"/><rect x="38.5" y="0" width="0.8" height="10" fill="#8a8a8a"/><text x="40.7" y="7.2" font-size="6.8" fill="#b8b8b8" font-family="Liberation Sans">250</text><rect x="45.2" y="7.5" width="0.8" height="2.5" fill="#7a7a7a"/><rect x="51.8" y="7.5" width="0.8" height="2.5" fill="#7a7a7a"/><rect x="58.5" y="7.5" width="0.8" height="2.5" fill="#7a7a7a"/><rect x="65.2" y="7.5" width="0.8" height="2.5" fill="#7a7a7a"/><rect x="71.8" y="7.5" width="0.8" height="2.5" fill="#7a7a7a"/><rect x="78.5" y="7.5" width="0.8" height="2.5" fill="#7a7a7a"/><rect x="85.1" y="7.5" width="0.8" height="2.5" fill="#7a7a7a"/><rect x="91.8" y="7.5" width="0.8" height="2.5" fill="#7a7a7a"/><rect x="98.5" y="7.5" width="0.8" height="2.5" fill="#7a7a7a"/><rect x="105.1" y="0" width="0.8" height="10" fill="#8a8a8a"/><text x="107.3" y="7.2" font-size="6.8" fill="#b8b8b8" font-family="Liberation Sans">200</text><rect x="111.8" y="7.5" width="0.8" height="2.5" fill="#7a7a7a"/><rect x="118.5" y="7.5" width="0.8" height="2.5" fill="#7a7a7a"/><rect x="125.1" y="7.5" width="0.8" height="2.5" fill="#7a7a7a"/><rect x="131.8" y="7.5" width="0.8" height="2.5" fill="#7a7a7a"/><rect x="138.5" y="7.5" width="0.8" height="2.5" fill="#7a7a7a"/><rect x="145.1" y="7.5" width="0.8" height="2.5" fill="#7a7a7a"/><rect x="151.8" y="7.5" width="0.8" height="2.5" fill="#7a7a7a"/><rect x="158.5" y="7.5" width="0.8" height="2.5" fill="#7a7a7a"/><rect x="165.1" y="7.5" width="0.8" height="2.5" fill="#7a7a7a"/><rect x="171.8" y="0" width="0.8" height="10" fill="#8a8a8a"/><text x="174.0" y="7.2" font-size="6.8" fill="#b8b8b8" font-family="Liberation Sans">150</text><rect x="178.4" y="7.5" width="0.8" height="2.5" fill="#7a7a7a"/><rect x="185.1" y="7.5" width="0.8" height="2.5" fill="#7a7a7a"/><rect x="191.8" y="7.5" width="0.8" height="2.5" fill="#7a7a7a"/><rect x="198.4" y="7.5" width="0.8" height="2.5" fill="#7a7a7a"/><rect x="205.1" y="7.5" width="0.8" height="2.5" fill="#7a7a7a"/><rect x="211.8" y="7.5" width="0.8" height="2.5" fill="#7a7a7a"/><rect x="218.4" y="7.5" width="0.8" height="2.5" fill="#7a7a7a"/><rect x="225.1" y="7.5" width="0.8" height="2.5" fill="#7a7a7a"/><rect x="231.8" y="7.5" width="0.8" height="2.5" fill="#7a7a7a"/><rect x="238.4" y="0" width="0.8" height="10" fill="#8a8a8a"/><text x="240.6" y="7.2" font-size="6.8" fill="#b8b8b8" font-family="Liberation Sans">100</text><rect x="245.1" y="7.5" width="0.8" height="2.5" fill="#7a7a7a"/><rect x="251.7" y="7.5" width="0.8" height="2.5" fill="#7a7a7a"/><rect x="258.4" y="7.5" width="0.8" height="2.5" fill="#7a7a7a"/><rect x="265.1" y="7.5" width="0.8" height="2.5" fill="#7a7a7a"/><rect x="271.7" y="7.5" width="0.8" height="2.5" fill="#7a7a7a"/><rect x="278.4" y="7.5" width="0.8" height="2.5" fill="#7a7a7a"/><rect x="285.1" y="7.5" width="0.8" height="2.5" fill="#7a7a7a"/><rect x="291.7" y="7.5" width="0.8" height="2.5" fill="#7a7a7a"/><rect x="298.4" y="7.5" width="0.8" height="2.5" fill="#7a7a7a"/><rect x="305.1" y="0" width="0.8" height="10" fill="#8a8a8a"/><text x="307.3" y="7.2" font-size="6.8" fill="#b8b8b8" font-family="Liberation Sans">50</text><rect x="311.7" y="7.5" width="0.8" height="2.5" fill="#7a7a7a"/><rect x="318.4" y="7.5" width="0.8" height="2.5" fill="#7a7a7a"/><rect x="325.1" y="7.5" width="0.8" height="2.5" fill="#7a7a7a"/><rect x="331.7" y="7.5" width="0.8" height="2.5" fill="#7a7a7a"/><rect x="338.4" y="7.5" width="0.8" height="2.5" fill="#7a7a7a"/><rect x="345.0" y="7.5" width="0.8" height="2.5" fill="#7a7a7a"/><rect x="351.7" y="7.5" width="0.8" height="2.5" fill="#7a7a7a"/><rect x="358.4" y="7.5" width="0.8" height="2.5" fill="#7a7a7a"/><rect x="365.0" y="7.5" width="0.8" height="2.5" fill="#7a7a7a"/><rect x="371.7" y="0" width="0.8" height="10" fill="#8a8a8a"/><text x="373.9" y="7.2" font-size="6.8" fill="#b8b8b8" font-family="Liberation Sans">0</text><rect x="378.4" y="7.5" width="0.8" height="2.5" fill="#7a7a7a"/><rect x="385.0" y="7.5" width="0.8" height="2.5" fill="#7a7a7a"/><rect x="391.7" y="7.5" width="0.8" height="2.5" fill="#7a7a7a"/><rect x="398.4" y="7.5" width="0.8" height="2.5" fill="#7a7a7a"/><rect x="405.0" y="7.5" width="0.8" height="2.5" fill="#7a7a7a"/><rect x="411.7" y="7.5" width="0.8" height="2.5" fill="#7a7a7a"/><rect x="418.3" y="7.5" width="0.8" height="2.5" fill="#7a7a7a"/><rect x="425.0" y="7.5" width="0.8" height="2.5" fill="#7a7a7a"/><rect x="431.7" y="7.5" width="0.8" height="2.5" fill="#7a7a7a"/><rect x="438.3" y="0" width="0.8" height="10" fill="#8a8a8a"/><text x="440.5" y="7.2" font-size="6.8" fill="#b8b8b8" font-family="Liberation Sans">50</text><rect x="445.0" y="7.5" width="0.8" height="2.5" fill="#7a7a7a"/><rect x="451.7" y="7.5" width="0.8" height="2.5" fill="#7a7a7a"/><rect x="458.3" y="7.5" width="0.8" height="2.5" fill="#7a7a7a"/><rect x="465.0" y="7.5" width="0.8" height="2.5" fill="#7a7a7a"/><rect x="471.7" y="7.5" width="0.8" height="2.5" fill="#7a7a7a"/><rect x="478.3" y="7.5" width="0.8" height="2.5" fill="#7a7a7a"/><rect x="485.0" y="7.5" width="0.8" height="2.5" fill="#7a7a7a"/><rect x="491.7" y="7.5" width="0.8" height="2.5" fill="#7a7a7a"/><rect x="498.3" y="7.5" width="0.8" height="2.5" fill="#7a7a7a"/><rect x="505.0" y="0" width="0.8" height="10" fill="#8a8a8a"/><text x="507.2" y="7.2" font-size="6.8" fill="#b8b8b8" font-family="Liberation Sans">100</text><rect x="511.6" y="7.5" width="0.8" height="2.5" fill="#7a7a7a"/><rect x="518.3" y="7.5" width="0.8" height="2.5" fill="#7a7a7a"/><rect x="525.0" y="7.5" width="0.8" height="2.5" fill="#7a7a7a"/><rect x="531.6" y="7.5" width="0.8" height="2.5" fill="#7a7a7a"/><rect x="538.3" y="7.5" width="0.8" height="2.5" fill="#7a7a7a"/><rect x="545.0" y="7.5" width="0.8" height="2.5" fill="#7a7a7a"/><rect x="551.6" y="7.5" width="0.8" height="2.5" fill="#7a7a7a"/><rect x="558.3" y="7.5" width="0.8" height="2.5" fill="#7a7a7a"/><rect x="565.0" y="7.5" width="0.8" height="2.5" fill="#7a7a7a"/><rect x="571.6" y="0" width="0.8" height="10" fill="#8a8a8a"/><text x="573.8" y="7.2" font-size="6.8" fill="#b8b8b8" font-family="Liberation Sans">150</text><rect x="578.3" y="7.5" width="0.8" height="2.5" fill="#7a7a7a"/><rect x="584.9" y="7.5" width="0.8" height="2.5" fill="#7a7a7a"/><rect x="591.6" y="7.5" width="0.8" height="2.5" fill="#7a7a7a"/><rect x="598.3" y="7.5" width="0.8" height="2.5" fill="#7a7a7a"/><rect x="604.9" y="7.5" width="0.8" height="2.5" fill="#7a7a7a"/><rect x="611.6" y="7.5" width="0.8" height="2.5" fill="#7a7a7a"/><rect x="618.3" y="7.5" width="0.8" height="2.5" fill="#7a7a7a"/><rect x="624.9" y="7.5" width="0.8" height="2.5" fill="#7a7a7a"/><rect x="631.6" y="7.5" width="0.8" height="2.5" fill="#7a7a7a"/><rect x="638.3" y="0" width="0.8" height="10" fill="#8a8a8a"/><text x="640.5" y="7.2" font-size="6.8" fill="#b8b8b8" font-family="Liberation Sans">200</text><rect x="644.9" y="7.5" width="0.8" height="2.5" fill="#7a7a7a"/><rect x="651.6" y="7.5" width="0.8" height="2.5" fill="#7a7a7a"/><rect x="658.3" y="7.5" width="0.8" height="2.5" fill="#7a7a7a"/><rect x="664.9" y="7.5" width="0.8" height="2.5" fill="#7a7a7a"/><rect x="671.6" y="7.5" width="0.8" height="2.5" fill="#7a7a7a"/><rect x="678.2" y="7.5" width="0.8" height="2.5" fill="#7a7a7a"/><rect x="684.9" y="7.5" width="0.8" height="2.5" fill="#7a7a7a"/><rect x="691.6" y="7.5" width="0.8" height="2.5" fill="#7a7a7a"/><rect x="698.2" y="7.5" width="0.8" height="2.5" fill="#7a7a7a"/><rect x="704.9" y="0" width="0.8" height="10" fill="#8a8a8a"/><text x="707.1" y="7.2" font-size="6.8" fill="#b8b8b8" font-family="Liberation Sans">250</text><rect x="711.6" y="7.5" width="0.8" height="2.5" fill="#7a7a7a"/><rect x="718.2" y="7.5" width="0.8" height="2.5" fill="#7a7a7a"/><rect x="724.9" y="7.5" width="0.8" height="2.5" fill="#7a7a7a"/><rect x="731.6" y="7.5" width="0.8" height="2.5" fill="#7a7a7a"/><rect x="738.2" y="7.5" width="0.8" height="2.5" fill="#7a7a7a"/><rect x="744.9" y="7.5" width="0.8" height="2.5" fill="#7a7a7a"/><rect x="751.5" y="7.5" width="0.8" height="2.5" fill="#7a7a7a"/><rect x="758.2" y="7.5" width="0.8" height="2.5" fill="#7a7a7a"/><rect x="764.9" y="7.5" width="0.8" height="2.5" fill="#7a7a7a"/><rect x="771.5" y="0" width="0.8" height="10" fill="#8a8a8a"/><text x="773.7" y="7.2" font-size="6.8" fill="#b8b8b8" font-family="Liberation Sans">300</text><rect x="778.2" y="7.5" width="0.8" height="2.5" fill="#7a7a7a"/><rect x="784.9" y="7.5" width="0.8" height="2.5" fill="#7a7a7a"/><rect x="791.5" y="7.5" width="0.8" height="2.5" fill="#7a7a7a"/><rect x="798.2" y="7.5" width="0.8" height="2.5" fill="#7a7a7a"/><rect x="804.9" y="7.5" width="0.8" height="2.5" fill="#7a7a7a"/><rect x="811.5" y="7.5" width="0.8" height="2.5" fill="#7a7a7a"/><rect x="818.2" y="7.5" width="0.8" height="2.5" fill="#7a7a7a"/><rect x="824.9" y="7.5" width="0.8" height="2.5" fill="#7a7a7a"/><rect x="831.5" y="7.5" width="0.8" height="2.5" fill="#7a7a7a"/><rect x="838.2" y="0" width="0.8" height="10" fill="#8a8a8a"/><text x="840.4" y="7.2" font-size="6.8" fill="#b8b8b8" font-family="Liberation Sans">350</text><rect x="844.8" y="7.5" width="0.8" height="2.5" fill="#7a7a7a"/><rect x="851.5" y="7.5" width="0.8" height="2.5" fill="#7a7a7a"/><rect x="858.2" y="7.5" width="0.8" height="2.5" fill="#7a7a7a"/><rect x="864.8" y="7.5" width="0.8" height="2.5" fill="#7a7a7a"/><rect x="871.5" y="7.5" width="0.8" height="2.5" fill="#7a7a7a"/><rect x="878.2" y="7.5" width="0.8" height="2.5" fill="#7a7a7a"/><rect x="884.8" y="7.5" width="0.8" height="2.5" fill="#7a7a7a"/><rect x="891.5" y="7.5" width="0.8" height="2.5" fill="#7a7a7a"/><rect x="898.2" y="7.5" width="0.8" height="2.5" fill="#7a7a7a"/><rect x="904.8" y="0" width="0.8" height="10" fill="#8a8a8a"/><text x="907.0" y="7.2" font-size="6.8" fill="#b8b8b8" font-family="Liberation Sans">400</text><rect x="911.5" y="7.5" width="0.8" height="2.5" fill="#7a7a7a"/><rect x="918.1" y="7.5" width="0.8" height="2.5" fill="#7a7a7a"/><rect x="924.8" y="7.5" width="0.8" height="2.5" fill="#7a7a7a"/><rect x="931.5" y="7.5" width="0.8" height="2.5" fill="#7a7a7a"/><rect x="938.1" y="7.5" width="0.8" height="2.5" fill="#7a7a7a"/><rect x="944.8" y="7.5" width="0.8" height="2.5" fill="#7a7a7a"/><rect x="951.5" y="7.5" width="0.8" height="2.5" fill="#7a7a7a"/><rect x="958.1" y="7.5" width="0.8" height="2.5" fill="#7a7a7a"/><rect x="0" y="0" width="10" height="10" fill="#3b3b3b"/><path d="M2,2 L2,10 M6,2 L6,10 M0,4 L10,4" stroke="#7a7a7a" stroke-width="0.8"/></svg>
<svg class="s" style="left:52px;top:66px" width="10" height="557" viewBox="0 0 10 557"><rect x="7.5" y="10.3" width="2.5" height="0.8" fill="#7a7a7a"/><rect x="7.5" y="17.0" width="2.5" height="0.8" fill="#7a7a7a"/><rect x="7.5" y="23.6" width="2.5" height="0.8" fill="#7a7a7a"/><rect x="7.5" y="30.3" width="2.5" height="0.8" fill="#7a7a7a"/><rect x="7.5" y="37.0" width="2.5" height="0.8" fill="#7a7a7a"/><rect x="7.5" y="43.7" width="2.5" height="0.8" fill="#7a7a7a"/><rect x="7.5" y="50.4" width="2.5" height="0.8" fill="#7a7a7a"/><rect x="7.5" y="57.0" width="2.5" height="0.8" fill="#7a7a7a"/><rect x="7.5" y="63.7" width="2.5" height="0.8" fill="#7a7a7a"/><rect x="0" y="70.4" width="10" height="0.8" fill="#8a8a8a"/><text x="3" y="68.4" font-size="6.8" fill="#b8b8b8" font-family="Liberation Sans">0</text><rect x="7.5" y="77.1" width="2.5" height="0.8" fill="#7a7a7a"/><rect x="7.5" y="83.8" width="2.5" height="0.8" fill="#7a7a7a"/><rect x="7.5" y="90.4" width="2.5" height="0.8" fill="#7a7a7a"/><rect x="7.5" y="97.1" width="2.5" height="0.8" fill="#7a7a7a"/><rect x="7.5" y="103.8" width="2.5" height="0.8" fill="#7a7a7a"/><rect x="7.5" y="110.5" width="2.5" height="0.8" fill="#7a7a7a"/><rect x="7.5" y="117.2" width="2.5" height="0.8" fill="#7a7a7a"/><rect x="7.5" y="123.8" width="2.5" height="0.8" fill="#7a7a7a"/><rect x="7.5" y="130.5" width="2.5" height="0.8" fill="#7a7a7a"/><rect x="0" y="137.2" width="10" height="0.8" fill="#8a8a8a"/><text x="3" y="128.8" font-size="6.8" fill="#b8b8b8" font-family="Liberation Sans">5</text><text x="3" y="135.2" font-size="6.8" fill="#b8b8b8" font-family="Liberation Sans">0</text><rect x="7.5" y="143.9" width="2.5" height="0.8" fill="#7a7a7a"/><rect x="7.5" y="150.6" width="2.5" height="0.8" fill="#7a7a7a"/><rect x="7.5" y="157.2" width="2.5" height="0.8" fill="#7a7a7a"/><rect x="7.5" y="163.9" width="2.5" height="0.8" fill="#7a7a7a"/><rect x="7.5" y="170.6" width="2.5" height="0.8" fill="#7a7a7a"/><rect x="7.5" y="177.3" width="2.5" height="0.8" fill="#7a7a7a"/><rect x="7.5" y="184.0" width="2.5" height="0.8" fill="#7a7a7a"/><rect x="7.5" y="190.6" width="2.5" height="0.8" fill="#7a7a7a"/><rect x="7.5" y="197.3" width="2.5" height="0.8" fill="#7a7a7a"/><rect x="0" y="204.0" width="10" height="0.8" fill="#8a8a8a"/><text x="3" y="189.2" font-size="6.8" fill="#b8b8b8" font-family="Liberation Sans">1</text><text x="3" y="195.6" font-size="6.8" fill="#b8b8b8" font-family="Liberation Sans">0</text><text x="3" y="202.0" font-size="6.8" fill="#b8b8b8" font-family="Liberation Sans">0</text><rect x="7.5" y="210.7" width="2.5" height="0.8" fill="#7a7a7a"/><rect x="7.5" y="217.4" width="2.5" height="0.8" fill="#7a7a7a"/><rect x="7.5" y="224.0" width="2.5" height="0.8" fill="#7a7a7a"/><rect x="7.5" y="230.7" width="2.5" height="0.8" fill="#7a7a7a"/><rect x="7.5" y="237.4" width="2.5" height="0.8" fill="#7a7a7a"/><rect x="7.5" y="244.1" width="2.5" height="0.8" fill="#7a7a7a"/><rect x="7.5" y="250.8" width="2.5" height="0.8" fill="#7a7a7a"/><rect x="7.5" y="257.4" width="2.5" height="0.8" fill="#7a7a7a"/><rect x="7.5" y="264.1" width="2.5" height="0.8" fill="#7a7a7a"/><rect x="0" y="270.8" width="10" height="0.8" fill="#8a8a8a"/><text x="3" y="256.0" font-size="6.8" fill="#b8b8b8" font-family="Liberation Sans">1</text><text x="3" y="262.4" font-size="6.8" fill="#b8b8b8" font-family="Liberation Sans">5</text><text x="3" y="268.8" font-size="6.8" fill="#b8b8b8" font-family="Liberation Sans">0</text><rect x="7.5" y="277.5" width="2.5" height="0.8" fill="#7a7a7a"/><rect x="7.5" y="284.2" width="2.5" height="0.8" fill="#7a7a7a"/><rect x="7.5" y="290.8" width="2.5" height="0.8" fill="#7a7a7a"/><rect x="7.5" y="297.5" width="2.5" height="0.8" fill="#7a7a7a"/><rect x="7.5" y="304.2" width="2.5" height="0.8" fill="#7a7a7a"/><rect x="7.5" y="310.9" width="2.5" height="0.8" fill="#7a7a7a"/><rect x="7.5" y="317.6" width="2.5" height="0.8" fill="#7a7a7a"/><rect x="7.5" y="324.2" width="2.5" height="0.8" fill="#7a7a7a"/><rect x="7.5" y="330.9" width="2.5" height="0.8" fill="#7a7a7a"/><rect x="0" y="337.6" width="10" height="0.8" fill="#8a8a8a"/><text x="3" y="322.8" font-size="6.8" fill="#b8b8b8" font-family="Liberation Sans">2</text><text x="3" y="329.2" font-size="6.8" fill="#b8b8b8" font-family="Liberation Sans">0</text><text x="3" y="335.6" font-size="6.8" fill="#b8b8b8" font-family="Liberation Sans">0</text><rect x="7.5" y="344.3" width="2.5" height="0.8" fill="#7a7a7a"/><rect x="7.5" y="351.0" width="2.5" height="0.8" fill="#7a7a7a"/><rect x="7.5" y="357.6" width="2.5" height="0.8" fill="#7a7a7a"/><rect x="7.5" y="364.3" width="2.5" height="0.8" fill="#7a7a7a"/><rect x="7.5" y="371.0" width="2.5" height="0.8" fill="#7a7a7a"/><rect x="7.5" y="377.7" width="2.5" height="0.8" fill="#7a7a7a"/><rect x="7.5" y="384.4" width="2.5" height="0.8" fill="#7a7a7a"/><rect x="7.5" y="391.0" width="2.5" height="0.8" fill="#7a7a7a"/><rect x="7.5" y="397.7" width="2.5" height="0.8" fill="#7a7a7a"/><rect x="0" y="404.4" width="10" height="0.8" fill="#8a8a8a"/><text x="3" y="389.6" font-size="6.8" fill="#b8b8b8" font-family="Liberation Sans">2</text><text x="3" y="396.0" font-size="6.8" fill="#b8b8b8" font-family="Liberation Sans">5</text><text x="3" y="402.4" font-size="6.8" fill="#b8b8b8" font-family="Liberation Sans">0</text><rect x="7.5" y="411.1" width="2.5" height="0.8" fill="#7a7a7a"/><rect x="7.5" y="417.8" width="2.5" height="0.8" fill="#7a7a7a"/><rect x="7.5" y="424.4" width="2.5" height="0.8" fill="#7a7a7a"/><rect x="7.5" y="431.1" width="2.5" height="0.8" fill="#7a7a7a"/><rect x="7.5" y="437.8" width="2.5" height="0.8" fill="#7a7a7a"/><rect x="7.5" y="444.5" width="2.5" height="0.8" fill="#7a7a7a"/><rect x="7.5" y="451.2" width="2.5" height="0.8" fill="#7a7a7a"/><rect x="7.5" y="457.8" width="2.5" height="0.8" fill="#7a7a7a"/><rect x="7.5" y="464.5" width="2.5" height="0.8" fill="#7a7a7a"/><rect x="0" y="471.2" width="10" height="0.8" fill="#8a8a8a"/><text x="3" y="456.4" font-size="6.8" fill="#b8b8b8" font-family="Liberation Sans">3</text><text x="3" y="462.8" font-size="6.8" fill="#b8b8b8" font-family="Liberation Sans">0</text><text x="3" y="469.2" font-size="6.8" fill="#b8b8b8" font-family="Liberation Sans">0</text><rect x="7.5" y="477.9" width="2.5" height="0.8" fill="#7a7a7a"/><rect x="7.5" y="484.6" width="2.5" height="0.8" fill="#7a7a7a"/><rect x="7.5" y="491.2" width="2.5" height="0.8" fill="#7a7a7a"/><rect x="7.5" y="497.9" width="2.5" height="0.8" fill="#7a7a7a"/><rect x="7.5" y="504.6" width="2.5" height="0.8" fill="#7a7a7a"/><rect x="7.5" y="511.3" width="2.5" height="0.8" fill="#7a7a7a"/><rect x="7.5" y="518.0" width="2.5" height="0.8" fill="#7a7a7a"/><rect x="7.5" y="524.6" width="2.5" height="0.8" fill="#7a7a7a"/><rect x="7.5" y="531.3" width="2.5" height="0.8" fill="#7a7a7a"/><rect x="0" y="538.0" width="10" height="0.8" fill="#8a8a8a"/><text x="3" y="523.2" font-size="6.8" fill="#b8b8b8" font-family="Liberation Sans">3</text><text x="3" y="529.6" font-size="6.8" fill="#b8b8b8" font-family="Liberation Sans">5</text><text x="3" y="536.0" font-size="6.8" fill="#b8b8b8" font-family="Liberation Sans">0</text><rect x="7.5" y="544.7" width="2.5" height="0.8" fill="#7a7a7a"/><rect x="7.5" y="551.4" width="2.5" height="0.8" fill="#7a7a7a"/></svg>
<div class="a" style="left:1px;top:55px;width:48px;height:388px;background:#535353;border:1px solid #4a4a4a;"></div>
<svg class="s" style="left:20px;top:57px" width="10" height="2" viewBox="0 0 10 2"><rect x="0.0" y="0" width="1" height="1" fill="#7a7a7a"/><rect x="1.5" y="0" width="1" height="1" fill="#7a7a7a"/><rect x="3.0" y="0" width="1" height="1" fill="#7a7a7a"/><rect x="4.5" y="0" width="1" height="1" fill="#7a7a7a"/><rect x="6.0" y="0" width="1" height="1" fill="#7a7a7a"/><rect x="7.5" y="0" width="1" height="1" fill="#7a7a7a"/><rect x="9.0" y="0" width="1" height="1" fill="#7a7a7a"/></svg>
<div class="a" style="left:0px;top:442px;width:50px;height:1px;background:#454545;"></div>
<svg class="s" style="left:0px;top:60px" width="50" height="270" viewBox="0 60 50 270"><g transform="translate(9,71)"><path d="M1.5,0.5 L9.5,7 L5.5,7.3 L3.5,11 Z" fill="none" stroke="#d2d2d2" stroke-width="1.2" stroke-linejoin="round"/></g><g transform="translate(30,71)"><path d="M1.5,0.5 L9.5,7 L5.5,7.3 L3.5,11 Z" fill="#d2d2d2" stroke="#d2d2d2" stroke-width="0.8" stroke-linejoin="round"/></g><g transform="translate(9,88)"><line x1="1" y1="11" x2="8" y2="4" stroke="#d2d2d2" stroke-width="1.5"/><path d="M3,1 L3.7,2.3 L5,3 L3.7,3.7 L3,5 L2.3,3.7 L1,3 L2.3,2.3 Z M9,0 L9.5,1.2 L10.7,1.7 L9.5,2.2 L9,3.4 L8.5,2.2 L7.3,1.7 L8.5,1.2 Z" fill="#d2d2d2"/><circle cx="10" cy="5.5" r="0.8" fill="#d2d2d2"/></g><g transform="translate(30,88)"><path d="M4,6.5 C1,5.5 1,1.5 6,1 C11,0.5 12.5,4 10,6" fill="none" stroke="#d2d2d2" stroke-width="1.1"/><path d="M3,7 C2,9 4,10 3,11" fill="none" stroke="#d2d2d2" stroke-width="0.9"/><path d="M5,3.5 L12,9 L9,9.3 L7,12 Z" fill="#d2d2d2"/></g><g transform="translate(9,104)"><path d="M0.8,11.2 L2.5,5.5 L7,3 L9,5 L6.5,9.5 Z" fill="#d2d2d2"/><rect x="7" y="0.8" width="3.5" height="4" transform="rotate(45 8.7 2.8)" fill="#d2d2d2"/><line x1="0.8" y1="11.2" x2="4.5" y2="7.5" stroke="#535353" stroke-width="0.8"/><circle cx="4.7" cy="7.3" r="0.9" fill="#535353"/></g><g transform="translate(30,104)"><path d="M5,11.2 L6.7,5.5 L11.2,3 L13.2,5 L10.7,9.5 Z" fill="#d2d2d2"/><rect x="11" y="0.8" width="3.5" height="4" transform="rotate(45 12.7 2.8)" fill="#d2d2d2"/><path d="M4,1 C0,3 4,6 1.5,8.5 C0.5,10 2,11.5 4,11" fill="none" stroke="#d2d2d2" stroke-width="0.9"/></g><g transform="translate(9,121)"><path d="M0.5,0.5 L10.5,0.5 L10.5,3 L9.5,3 L9,1.8 L6.3,1.8 L6.3,10.2 L8,10.5 L8,11.3 L3,11.3 L3,10.5 L4.7,10.2 L4.7,1.8 L2,1.8 L1.5,3 L0.5,3 Z" fill="#d2d2d2"/></g><g transform="translate(30,121)"><line x1="1" y1="11" x2="11" y2="1" stroke="#d2d2d2" stroke-width="1.3"/></g><g transform="translate(9,138)"><rect x="0.8" y="0.8" width="10.4" height="10.4" rx="1" fill="#6a6a6a" stroke="#d2d2d2" stroke-width="1.3"/></g><g transform="translate(30,138)"><path d="M11.5,0.5 L5.5,7 L4.5,6 Z" fill="#d2d2d2" stroke="#d2d2d2" stroke-width="1.2" stroke-linejoin="round"/><path d="M4,6.5 C1.5,6.5 1.5,9 0.5,11.5 C3,11.5 6,11 5.5,8 Z" fill="#d2d2d2"/></g><g transform="translate(9,155)"><path d="M6.5,9 A4.5,4.5 0 1 1 8,3" fill="none" stroke="#d2d2d2" stroke-width="1.2"/><path d="M3,12 L12,3 L13,4 L4,13 L2.5,13.2 Z" fill="#d2d2d2"/></g><g transform="translate(30,155)"><g transform="rotate(45 6 6)"><rect x="2" y="-1" width="8" height="13" rx="1" fill="none" stroke="#d2d2d2" stroke-width="1.2"/><rect x="2" y="-1" width="8" height="8" fill="#d2d2d2"/></g></g><g transform="translate(9,171)"><path d="M2.5,4 A5,5 0 1 1 1.5,8" fill="none" stroke="#d2d2d2" stroke-width="1.2" stroke-dasharray="1.3,0.6"/><path d="M0.5,1.5 L3.5,4.8 L0,5.5 Z" fill="#d2d2d2"/></g><g transform="translate(30,171)"><rect x="0.8" y="5" width="7" height="7" rx="1" fill="none" stroke="#d2d2d2" stroke-width="1.2"/><rect x="4.5" y="1" width="8" height="8" rx="1" fill="none" stroke="#d2d2d2" stroke-width="1.2"/><path d="M8,5.5 L11,2.5 M9,2.5 L11,2.5 L11,4.5" fill="none" stroke="#d2d2d2" stroke-width="0.9"/></g><g transform="translate(9,188)"><path d="M1,12 C3,8 6,11 8,8 C10,5 13,8 12,10 C10,12 8,9 11,6 M3,2 C5,1 6,3 4.5,5 C3,7 6,8 7,6" fill="none" stroke="#d2d2d2" stroke-width="1.3"/></g><g transform="translate(30,188)"><path d="M0.5,0.5 L7,6 L4,6.3 L2.5,9.5 Z" fill="#d2d2d2"/><rect x="3.5" y="1.5" width="10" height="10" fill="none" stroke="#d2d2d2" stroke-width="1" stroke-dasharray="1.5,1"/></g><g transform="translate(9,205)"><path d="M7,11 C3,11 0.5,9 0.5,6 C0.5,2.5 4,0.5 7,1.5 C10,0.5 13,3 12,6" fill="none" stroke="#d2d2d2" stroke-width="1.1"/><path d="M6,4 L13,10 L10,10.3 L8.5,13 Z" fill="#d2d2d2"/></g><g transform="translate(30,205)"><path d="M0.8,0.8 L0.8,12 L13,12 Z" fill="none" stroke="#d2d2d2" stroke-width="0.9"/><path d="M0.8,0.8 L7,4.5 L7,12 M0.8,6 L7,7 M0.8,9 L13,9" fill="none" stroke="#d2d2d2" stroke-width="0.8"/><rect x="1" y="1" width="5" height="10" fill="#d2d2d2" opacity="0.6"/></g><g transform="translate(9,222)"><rect x="0.8" y="0.8" width="10.4" height="10.4" fill="none" stroke="#d2d2d2" stroke-width="1.2"/><path d="M1,5 C4,3 5,8 11,6 M5,1 C4,5 8,7 6,11 M1,9 C4,8 6,10 9,11" fill="none" stroke="#d2d2d2" stroke-width="0.8"/></g><g transform="translate(30,222)"><defs><linearGradient id="tg1"><stop offset="0" stop-color="#222"/><stop offset="1" stop-color="#eee"/></linearGradient></defs><rect x="0.8" y="0.8" width="10.4" height="10.4" fill="url(#tg1)" stroke="#d2d2d2" stroke-width="1.2"/></g><g transform="translate(9,238)"><line x1="2" y1="10" x2="10" y2="2" stroke="#d2d2d2" stroke-width="2"/><line x1="0" y1="8" x2="4" y2="12" stroke="#d2d2d2" stroke-width="1"/><line x1="8" y1="0" x2="12" y2="4" stroke="#d2d2d2" stroke-width="1"/></g><g transform="translate(30,238)"><path d="M1,11 L2,8 L8,2 L10,4 L4,10 Z" fill="none" stroke="#d2d2d2" stroke-width="1.1"/><path d="M8,2 L10,0 L12,2 L10,4 Z" fill="#d2d2d2"/></g><g transform="translate(9,255)"><rect x="0.5" y="0.5" width="5" height="5" fill="#d2d2d2"/><circle cx="6" cy="6" r="3.5" fill="#888" stroke="#d2d2d2" stroke-width="1"/><circle cx="9" cy="9" r="3" fill="none" stroke="#d2d2d2" stroke-width="1.1"/></g><g transform="translate(30,255)"><g fill="#d2d2d2"><rect x="0" y="0" width="1.2" height="1.2"/><rect x="2" y="0" width="1.2" height="1.2"/><rect x="0" y="2" width="1.2" height="1.2"/><rect x="2" y="2" width="1.2" height="1.2"/><rect x="0" y="4" width="1.2" height="1.2"/></g><rect x="5" y="3" width="7" height="9" rx="1.5" fill="none" stroke="#d2d2d2" stroke-width="1.2"/><rect x="7" y="1" width="3" height="2" fill="#d2d2d2"/><circle cx="8.5" cy="7.5" r="1.8" fill="none" stroke="#d2d2d2" stroke-width="0.9"/></g><g transform="translate(9,272)"><path d="M0.8,0.5 L0.8,11.2 L12,11.2" fill="none" stroke="#d2d2d2" stroke-width="1"/><rect x="2.5" y="6" width="2" height="5" fill="#d2d2d2"/><rect x="5.5" y="2" width="2" height="9" fill="#d2d2d2"/><rect x="8.5" y="4" width="2" height="7" fill="#d2d2d2"/></g><g transform="translate(30,272)"><path d="M3,0 L3,9 L12,9 M0,3 L9,3 L9,12" fill="none" stroke="#d2d2d2" stroke-width="1.1"/></g><g transform="translate(9,288)"><path d="M1,12 L3,7 L10,0.5 L12,2.5 L5,9 Z" fill="none" stroke="#d2d2d2" stroke-width="1.1"/></g><g transform="translate(30,288)"><path d="M3,12 C1,9 0,7 1,6 C2,5.5 3,7 3.5,8 L3.5,2 C3.5,1 5,1 5,2 L5,6 L5,1 C5,0 6.5,0 6.5,1 L6.5,6 L6.5,1.5 C6.5,0.5 8,0.5 8,1.5 L8,6 L8,3 C8,2 9.5,2 9.5,3 L9.5,8 C9.5,10 9,11 8,12 Z" fill="none" stroke="#d2d2d2" stroke-width="0.9"/></g><g transform="translate(9,304)"><path d="M2,1 L2,11 M2,1 L6,1 C9,1 9,4 6,4 L2,4" fill="none" stroke="#d2d2d2" stroke-width="1.2"/><rect x="4" y="6" width="7" height="2.5" fill="#d2d2d2"/><rect x="4" y="9.5" width="5" height="2" fill="#d2d2d2"/><circle cx="10.5" cy="1.8" r="2" fill="#2e8ef0"/></g><g transform="translate(30,304)"><circle cx="5" cy="5" r="4" fill="none" stroke="#d2d2d2" stroke-width="1.2"/><line x1="8" y1="8" x2="12" y2="12" stroke="#d2d2d2" stroke-width="1.6"/></g><path d="M44,84 L44,81.8 L41.8,84 Z" fill="#c8c8c8"/><path d="M23,117 L23,114.8 L20.8,117 Z" fill="#c8c8c8"/><path d="M23,134 L23,131.8 L20.8,134 Z" fill="#c8c8c8"/><path d="M44,134 L44,131.8 L41.8,134 Z" fill="#c8c8c8"/><path d="M23,151 L23,148.8 L20.8,151 Z" fill="#c8c8c8"/><path d="M44,151 L44,148.8 L41.8,151 Z" fill="#c8c8c8"/><path d="M23,168 L23,165.8 L20.8,168 Z" fill="#c8c8c8"/><path d="M44,168 L44,165.8 L41.8,168 Z" fill="#c8c8c8"/><path d="M23,184 L23,181.8 L20.8,184 Z" fill="#c8c8c8"/><path d="M44,184 L44,181.8 L41.8,184 Z" fill="#c8c8c8"/><path d="M23,201 L23,198.8 L20.8,201 Z" fill="#c8c8c8"/><path d="M44,201 L44,198.8 L41.8,201 Z" fill="#c8c8c8"/><path d="M23,218 L23,215.8 L20.8,218 Z" fill="#c8c8c8"/><path d="M44,218 L44,215.8 L41.8,218 Z" fill="#c8c8c8"/><path d="M44,251 L44,248.8 L41.8,251 Z" fill="#c8c8c8"/><path d="M44,268 L44,265.8 L41.8,268 Z" fill="#c8c8c8"/><path d="M23,285 L23,282.8 L20.8,285 Z" fill="#c8c8c8"/><path d="M44,285 L44,282.8 L41.8,285 Z" fill="#c8c8c8"/><path d="M23,301 L23,298.8 L20.8,301 Z" fill="#c8c8c8"/><path d="M44,301 L44,298.8 L41.8,301 Z" fill="#c8c8c8"/></svg>
<svg class="s" style="left:0px;top:322px" width="50" height="122" viewBox="0 0 50 122"><rect x="17" y="17" width="25" height="24" fill="#fff"/><rect x="22" y="22" width="15" height="14" fill="#222"/><rect x="25" y="25" width="9" height="8" fill="#fff"/><line x1="17" y1="41" x2="42" y2="17" stroke="#e8201c" stroke-width="2"/><rect x="5" y="4" width="24" height="23" fill="#dd5158" stroke="#e9e9e9" stroke-width="1"/><path d="M36,8 C41,7 43,9 42,13 M40,14 L42.5,11.5 L44.5,14 M35,6 L37.5,8.5 L35,10.5" fill="none" stroke="#cfcfcf" stroke-width="1.1"/><rect x="5" y="34" width="6" height="6" fill="#fff" stroke="#222" stroke-width="1"/><rect x="8" y="37" width="6" height="6" fill="#222" stroke="#fff" stroke-width="1"/><rect x="3" y="46" width="13" height="13" fill="#3f3f3f"/><rect x="5" y="48" width="9" height="9" fill="#dd5158" stroke="#fff" stroke-width="0.8"/><defs><linearGradient id="tg2"><stop offset="0" stop-color="#fff"/><stop offset="1" stop-color="#222"/></linearGradient></defs><rect x="21" y="48" width="9" height="9" fill="url(#tg2)" stroke="#ddd" stroke-width="0.8"/><rect x="34" y="48" width="9" height="9" fill="#fff" stroke="#ddd" stroke-width="0.8"/><line x1="34" y1="57" x2="43" y2="48" stroke="#e8201c" stroke-width="1.3"/><rect x="3" y="62" width="13" height="13" fill="#3f3f3f"/><circle cx="8.5" cy="67.5" r="3.5" fill="none" stroke="#ddd" stroke-width="1"/><rect x="9" y="68" width="4.5" height="4" fill="#ddd"/><rect x="19" y="62" width="13" height="13" fill="#4e4e4e"/><circle cx="24" cy="67.5" r="3.3" fill="none" stroke="#ccc" stroke-width="1"/><rect x="24.5" y="68" width="4.5" height="4" fill="none" stroke="#ccc" stroke-width="0.9"/><rect x="35" y="62" width="13" height="13" fill="#4e4e4e"/><circle cx="41.5" cy="68.5" r="3.3" fill="none" stroke="#777" stroke-width="1"/><rect x="17" y="84" width="11" height="8" fill="none" stroke="#ccc" stroke-width="1"/><rect x="22" y="80" width="12" height="9" fill="#6a6a6a" stroke="#ccc" stroke-width="1"/><circle cx="21" cy="110.5" r="1.3" fill="#ddd"/><circle cx="25" cy="110.5" r="1.3" fill="#ddd"/><circle cx="29" cy="110.5" r="1.3" fill="#ddd"/></svg>

<svg class="s" style="left:55px;top:626px" width="11" height="11" viewBox="0 0 11 11"><circle cx="5.5" cy="5.5" r="4.8" fill="#c8c8c8"/><text x="5.5" y="8.4" font-size="7.5" font-weight="bold" fill="#535353" text-anchor="middle" font-family="Liberation Sans">?</text></svg>
<div class="t" style="left:72.7px;top:628.00px;font-size:8.28px;font-weight:bold;color:#e0e0e0;transform:scaleX(0.874);transform-origin:0 0;">Click</div>
<div class="t" style="left:92.0px;top:628.00px;font-size:8.28px;font-weight:normal;color:#c4c4c4;transform:scaleX(0.869);transform-origin:0 0;">the object to select</div>
<div class="t" style="left:156.5px;top:628.00px;font-size:8.28px;font-weight:normal;color:#c4c4c4;transform:scaleX(0.697);transform-origin:0 0;">|</div>
<div class="t" style="left:163.0px;top:628.00px;font-size:8.28px;font-weight:bold;color:#e0e0e0;transform:scaleX(0.906);transform-origin:0 0;">Shift+Click</div>
<div class="t" style="left:204.0px;top:628.00px;font-size:8.28px;font-weight:normal;color:#c4c4c4;transform:scaleX(0.871);transform-origin:0 0;">to select multiple object</div>
<div class="t" style="left:283.5px;top:628.00px;font-size:8.28px;font-weight:normal;color:#c4c4c4;transform:scaleX(0.697);transform-origin:0 0;">|</div>
<div class="t" style="left:289.0px;top:628.00px;font-size:8.28px;font-weight:bold;color:#e0e0e0;transform:scaleX(0.949);transform-origin:0 0;">Alt+Drag</div>
<div class="t" style="left:324.0px;top:628.00px;font-size:8.28px;font-weight:normal;color:#c4c4c4;transform:scaleX(0.869);transform-origin:0 0;">the object to duplicate</div>
<div class="a" style="left:52px;top:640px;width:958px;height:12px;background:#4f4f4f;"></div>
<div class="a" style="left:54px;top:641px;width:37px;height:11px;background:#454545;"></div>
<div class="a" style="left:91px;top:641px;width:11px;height:11px;background:#484848;"></div>
<div class="t" style="left:55.5px;top:644.00px;font-size:8.14px;font-weight:normal;color:#d0d0d0;transform:scaleX(0.960);transform-origin:0 0;">66.67%</div>
<svg class="s" style="left:92px;top:645px" width="7" height="5" viewBox="0 0 7 5"><path d="M1,1 L3.5,3.5 L6,1" fill="none" stroke="#d0d0d0" stroke-width="1.1"/></svg>
<div class="a" style="left:104px;top:641px;width:37px;height:11px;background:#454545;"></div>
<div class="a" style="left:141px;top:641px;width:11px;height:11px;background:#484848;"></div>
<div class="t" style="left:107.0px;top:644.00px;font-size:8.14px;font-weight:normal;color:#d0d0d0;transform:scaleX(0.835);transform-origin:0 0;">0°</div>
<svg class="s" style="left:143px;top:645px" width="7" height="5" viewBox="0 0 7 5"><path d="M1,1 L3.5,3.5 L6,1" fill="none" stroke="#d0d0d0" stroke-width="1.1"/></svg>
<svg class="s" style="left:158px;top:642px" width="30" height="9" viewBox="0 0 30 9"><rect x="1" y="1" width="1.2" height="7" fill="#cfcfcf"/><path d="M7,1 L2.5,4.5 L7,8 Z" fill="#cfcfcf"/><path d="M19,1 L14.5,4.5 L19,8 Z" fill="#cfcfcf"/></svg>
<div class="a" style="left:182px;top:641px;width:31px;height:11px;background:#454545;"></div>
<div class="a" style="left:213px;top:641px;width:11px;height:11px;background:#484848;"></div>
<div class="t" style="left:184.5px;top:644.00px;font-size:8.14px;font-weight:normal;color:#d0d0d0;transform:scaleX(0.994);transform-origin:0 0;">2</div>
<svg class="s" style="left:215px;top:645px" width="7" height="5" viewBox="0 0 7 5"><path d="M1,1 L3.5,3.5 L6,1" fill="none" stroke="#d0d0d0" stroke-width="1.1"/></svg>
<svg class="s" style="left:229px;top:642px" width="22" height="9" viewBox="0 0 22 9"><path d="M2,1 L6.5,4.5 L2,8 Z" fill="#cfcfcf"/><path d="M13,1 L17.5,4.5 L13,8 Z" fill="#cfcfcf"/><rect x="18.5" y="1" width="1.2" height="7" fill="#cfcfcf"/></svg>
<div class="a" style="left:253px;top:641px;width:1px;height:11px;background:#444;"></div>
<div class="t" style="left:310.0px;top:644.00px;font-size:8.14px;font-weight:normal;color:#bdbdbd;transform:scaleX(0.836);transform-origin:0 0;">Selection</div>
<svg class="s" style="left:397px;top:642px" width="7" height="9" viewBox="0 0 7 9"><path d="M1.5,1 L6,4.5 L1.5,8 Z" fill="#cfcfcf"/></svg>
<div class="a" style="left:405px;top:641px;width:1px;height:11px;background:#444;"></div>
<svg class="s" style="left:410px;top:642px" width="6" height="9" viewBox="0 0 6 9"><path d="M4.5,1.5 L1.5,4.5 L4.5,7.5" fill="none" stroke="#aaa" stroke-width="1"/></svg>
<div class="a" style="left:697px;top:642px;width:20px;height:8px;background:#6a6a6a;border-radius:4px;"></div>
<svg class="s" style="left:1001px;top:642px" width="6" height="9" viewBox="0 0 6 9"><path d="M1.5,1.5 L4.5,4.5 L1.5,7.5" fill="none" stroke="#aaa" stroke-width="1"/></svg>
<svg class="s" style="left:1012px;top:69px" width="9" height="6" viewBox="0 0 9 6"><path d="M1,5 L4.5,1.5 L8,5" fill="none" stroke="#bbb" stroke-width="1"/></svg>
<svg class="s" style="left:1012px;top:631px" width="9" height="6" viewBox="0 0 9 6"><path d="M1,1 L4.5,4.5 L8,1" fill="none" stroke="#bbb" stroke-width="1"/></svg>
<div class="a" style="left:0px;top:652px;width:1200px;height:23px;background:#3c3b3a;"></div>
<svg class="s" style="left:9px;top:659px" width="9" height="9" viewBox="0 0 9 9"><path d="M0,1.3 L3.8,0.8 L3.8,4.3 L0,4.3 Z M4.5,0.7 L9,0 L9,4.3 L4.5,4.3 Z M0,5 L3.8,5 L3.8,8.5 L0,8 Z M4.5,5 L9,5 L9,9 L4.5,8.4 Z" fill="#f2f2f2"/></svg>
<svg class="s" style="left:33px;top:657px" width="14" height="14" viewBox="0 0 14 14"><circle cx="8.5" cy="5.5" r="4.3" fill="none" stroke="#f0f0f0" stroke-width="1.4"/><line x1="5.5" y1="8.5" x2="1" y2="13" stroke="#f0f0f0" stroke-width="1.6"/></svg>
<svg class="s" style="left:61px;top:658px" width="13" height="13" viewBox="0 0 13 13"><rect width="13" height="13" rx="1.5" fill="#0b2a0b"/><text x="6.5" y="9.3" font-size="7.3" font-weight="bold" fill="#4ef04e" text-anchor="middle" font-family="Liberation Sans">Pt</text></svg>
<svg class="s" style="left:88px;top:658px" width="15" height="13" viewBox="0 0 15 13"><circle cx="9" cy="7" r="4.5" fill="#f0f0f0"/><circle cx="9" cy="7" r="4.5" fill="none" stroke="#e87d0d" stroke-width="2"/><circle cx="9.5" cy="7" r="1.8" fill="#265787"/><path d="M1,8 L6,5 M3,4 L7,3.5" stroke="#e87d0d" stroke-width="1.8"/></svg>
<svg class="s" style="left:114px;top:658px" width="15" height="13" viewBox="0 0 15 13"><path d="M1,12 L4,9 L4,12 Z" fill="#4a5ee8"/><rect x="5" y="6" width="3" height="6" fill="#4a5ee8"/><rect x="9.5" y="2" width="3.5" height="10" rx="1" fill="#5a6ef0"/></svg>
<svg class="s" style="left:143px;top:658px" width="13" height="13" viewBox="0 0 13 13"><rect x="0" y="2" width="13" height="10" fill="#e9b53a"/><rect x="0" y="0.5" width="6" height="3" fill="#d9a32a"/><rect x="1" y="5" width="11" height="6" fill="#f6cf5a"/><rect x="3" y="7" width="7" height="4" fill="#3a8ee0"/></svg>
<svg class="s" style="left:170px;top:657px" width="15" height="15" viewBox="0 0 15 15"><circle cx="6.5" cy="7" r="6" fill="#2aa3e0"/><path d="M3,7 L10,4 L8.5,10 L6.5,8 Z" fill="#fff"/><rect x="7" y="8.5" width="7.5" height="5.5" rx="2.5" fill="#e8312a"/><text x="10.7" y="12.6" font-size="3.8" fill="#fff" text-anchor="middle" font-family="Liberation Sans">85</text></svg>
<svg class="s" style="left:197px;top:658px" width="13" height="13" viewBox="0 0 13 13"><rect width="13" height="13" rx="1.5" fill="#1e1e1e"/><circle cx="5" cy="3.5" r="1.6" fill="#f24e1e"/><circle cx="8" cy="3.5" r="1.6" fill="#ff7262"/><circle cx="5" cy="6.5" r="1.6" fill="#a259ff"/><circle cx="8" cy="6.5" r="1.6" fill="#1abcfe"/><circle cx="5" cy="9.5" r="1.6" fill="#0acf83"/></svg>
<svg class="s" style="left:224px;top:658px" width="14" height="14" viewBox="0 0 14 14"><circle cx="7" cy="7" r="6.5" fill="#db4437"/><path d="M7,7 L1.4,3.8 A6.5,6.5 0 0 0 4,12.7 Z" fill="#0f9d58"/><path d="M7,7 L4,12.7 A6.5,6.5 0 0 0 13.3,5.5 Z" fill="#f4b400"/><circle cx="7" cy="7" r="3" fill="#fff"/><circle cx="7" cy="7" r="2.3" fill="#4285f4"/></svg>
<svg class="s" style="left:251px;top:658px" width="13" height="13" viewBox="0 0 13 13"><rect width="13" height="13" rx="1.5" fill="#001e36"/><text x="6.5" y="9.3" font-size="7.3" font-weight="bold" fill="#31a8ff" text-anchor="middle" font-family="Liberation Sans">Ps</text></svg>
<svg class="s" style="left:279px;top:658px" width="12" height="12" viewBox="0 0 12 12"><circle cx="6" cy="6" r="4" fill="none" stroke="#f0f0f0" stroke-width="2.4" stroke-dasharray="1.6,1.1"/><circle cx="6" cy="6" r="3.2" fill="none" stroke="#f0f0f0" stroke-width="1.3"/></svg>
<svg class="s" style="left:305px;top:658px" width="13" height="13" viewBox="0 0 13 13"><rect width="13" height="13" rx="1.5" fill="#00005b"/><text x="6.5" y="9.3" font-size="7.3" font-weight="bold" fill="#9999ff" text-anchor="middle" font-family="Liberation Sans">Me</text></svg>
<svg class="s" style="left:333px;top:658px" width="13" height="13" viewBox="0 0 13 13"><rect width="13" height="13" rx="1.5" fill="#c41a1a"/><path d="M3,10 C5,7 6,4 6.5,2.5 C7,4 8,8 10.5,9.5 C8,9 5,9 3,10 Z" fill="none" stroke="#fff" stroke-width="1.1"/></svg>
<svg class="s" style="left:360px;top:658px" width="13" height="13" viewBox="0 0 13 13"><rect width="13" height="13" rx="1.5" fill="#00005b"/><text x="6.5" y="9.3" font-size="7.3" font-weight="bold" fill="#9999ff" text-anchor="middle" font-family="Liberation Sans">Ae</text></svg>
<div class="a" style="left:380px;top:652px;width:27px;height:23px;background:#565655;"></div>
<svg class="s" style="left:387px;top:658px" width="13" height="13" viewBox="0 0 13 13"><rect width="13" height="13" rx="1.5" fill="#330000"/><text x="6.5" y="9.3" font-size="7.3" font-weight="bold" fill="#ff9a00" text-anchor="middle" font-family="Liberation Sans">Ai</text></svg>
<div class="a" style="left:0px;top:674px;width:1200px;height:1px;background:#b4b4b4;"></div>
<div class="a" style="left:1197px;top:652px;width:3px;height:23px;background:#9a9a9a;"></div>
<div class="a" style="left:110px;top:673px;width:23px;height:2px;background:#9fc6ea;"></div>
<div class="a" style="left:137px;top:673px;width:23px;height:2px;background:#9fc6ea;"></div>
<div class="a" style="left:164px;top:673px;width:23px;height:2px;background:#9fc6ea;"></div>
<div class="a" style="left:192px;top:673px;width:22px;height:2px;background:#9fc6ea;"></div>
<div class="a" style="left:219px;top:673px;width:23px;height:2px;background:#9fc6ea;"></div>
<div class="a" style="left:246px;top:673px;width:23px;height:2px;background:#9fc6ea;"></div>
<div class="a" style="left:273px;top:673px;width:23px;height:2px;background:#9fc6ea;"></div>
<div class="a" style="left:301px;top:673px;width:22px;height:2px;background:#9fc6ea;"></div>
<div class="a" style="left:328px;top:673px;width:22px;height:2px;background:#9fc6ea;"></div>
<div class="a" style="left:355px;top:673px;width:22px;height:2px;background:#9fc6ea;"></div>
<div class="a" style="left:382px;top:673px;width:23px;height:2px;background:#9fc6ea;"></div>
<svg class="s" style="left:1003px;top:660px" width="14" height="9" viewBox="0 0 14 9"><path d="M2.5,8.5 C0,8.5 0,5 2.5,5 C2.5,2 6,1 7.5,3 C9,0.5 13,1.5 12.5,5 C14.5,5.5 14,8.5 12,8.5 Z" fill="#9cc4f0"/></svg>
<div class="t" style="left:1020.5px;top:661.00px;font-size:9.01px;font-weight:normal;color:#e8e8e8;transform:scaleX(0.796);transform-origin:0 0;">11°C</div>
<div class="t" style="left:1040.0px;top:661.00px;font-size:9.01px;font-weight:normal;color:#e8e8e8;transform:scaleX(0.891);transform-origin:0 0;">Cloudy</div>
<svg class="s" style="left:1079px;top:661px" width="8" height="6" viewBox="0 0 8 6"><path d="M1,5 L4,1.5 L7,5" fill="none" stroke="#ddd" stroke-width="1"/></svg>
<svg class="s" style="left:1092px;top:660px" width="10" height="10" viewBox="0 0 10 10"><circle cx="5" cy="5" r="4.3" fill="none" stroke="#ddd" stroke-width="0.9"/><ellipse cx="5" cy="5" rx="2" ry="4.3" fill="none" stroke="#ddd" stroke-width="0.8"/><line x1="0.7" y1="5" x2="9.3" y2="5" stroke="#ddd" stroke-width="0.8"/></svg>
<svg class="s" style="left:1104px;top:661px" width="10" height="8" viewBox="0 0 10 8"><path d="M0.5,2.5 L2.5,2.5 L5,0.5 L5,7.5 L2.5,5.5 L0.5,5.5 Z" fill="none" stroke="#ddd" stroke-width="0.9"/><path d="M6.5,2.5 L9,5.5 M9,2.5 L6.5,5.5" stroke="#ddd" stroke-width="0.8"/></svg>
<div class="t" style="left:1118.0px;top:662.00px;font-size:7.56px;font-weight:normal;color:#e0e0e0;transform:scaleX(0.794);transform-origin:0 0;">ENG</div>
<div class="t" style="left:1145.0px;top:656.00px;font-size:7.56px;font-weight:normal;color:#e0e0e0;transform:scaleX(0.793);transform-origin:0 0;">20:47</div>
<div class="t" style="left:1137.0px;top:666.00px;font-size:7.56px;font-weight:normal;color:#e0e0e0;transform:scaleX(0.886);transform-origin:0 0;">18-May-25</div>
<svg class="s" style="left:1177px;top:659px" width="15" height="14" viewBox="0 0 15 14"><path d="M1,1 L12,1 L12,9 L6,9 L3,11.5 L3,9 L1,9 Z" fill="none" stroke="#eee" stroke-width="1.1"/><line x1="3.5" y1="4" x2="9.5" y2="4" stroke="#eee" stroke-width="0.9"/><line x1="3.5" y1="6.3" x2="8" y2="6.3" stroke="#eee" stroke-width="0.9"/><circle cx="11" cy="10" r="3.5" fill="#3c3b3a" stroke="#eee" stroke-width="0.8"/><text x="11" y="12.3" font-size="5.5" fill="#fff" text-anchor="middle" font-family="Liberation Sans">2</text></svg>

<div class="a" style="left:1024px;top:46px;width:176px;height:8px;background:#464646;"></div>
<div class="t" style="left:1189.0px;top:47.00px;font-size:7.27px;font-weight:normal;color:#bdbdbd;transform:scaleX(1.485);transform-origin:0 0;">»</div>
<div class="a" style="left:1024px;top:54px;width:176px;height:19px;background:#454545;"></div>
<div class="a" style="left:1024px;top:54px;width:46px;height:19px;background:#535353;"></div>
<div class="a" style="left:1070px;top:54px;width:1px;height:19px;background:#3c3c3c;"></div>
<div class="a" style="left:1103px;top:54px;width:1px;height:19px;background:#3c3c3c;"></div>
<div class="a" style="left:1143px;top:54px;width:1px;height:19px;background:#3c3c3c;"></div>
<div class="t" style="left:1031.0px;top:60.00px;font-size:8.14px;font-weight:bold;color:#eeeeee;transform:scaleX(0.894);transform-origin:0 0;">Properties</div>
<div class="t" style="left:1076.5px;top:60.00px;font-size:8.14px;font-weight:bold;color:#c0c0c0;transform:scaleX(0.781);transform-origin:0 0;">Layers</div>
<div class="t" style="left:1110.0px;top:60.00px;font-size:8.14px;font-weight:bold;color:#c0c0c0;transform:scaleX(0.814);transform-origin:0 0;">Libraries</div>
<div class="t" style="left:1031.0px;top:82.00px;font-size:8.14px;font-weight:normal;color:#d4d4d4;transform:scaleX(0.864);transform-origin:0 0;">Linked File</div>
<svg class="s" style="left:1031px;top:90px" width="34" height="1" viewBox="0 0 34 1"><rect x="0" y="0" width="1" height="1" fill="#9a9a9a"/><rect x="2" y="0" width="1" height="1" fill="#9a9a9a"/><rect x="4" y="0" width="1" height="1" fill="#9a9a9a"/><rect x="6" y="0" width="1" height="1" fill="#9a9a9a"/><rect x="8" y="0" width="1" height="1" fill="#9a9a9a"/><rect x="10" y="0" width="1" height="1" fill="#9a9a9a"/><rect x="12" y="0" width="1" height="1" fill="#9a9a9a"/><rect x="14" y="0" width="1" height="1" fill="#9a9a9a"/><rect x="16" y="0" width="1" height="1" fill="#9a9a9a"/><rect x="18" y="0" width="1" height="1" fill="#9a9a9a"/><rect x="20" y="0" width="1" height="1" fill="#9a9a9a"/><rect x="22" y="0" width="1" height="1" fill="#9a9a9a"/><rect x="24" y="0" width="1" height="1" fill="#9a9a9a"/><rect x="26" y="0" width="1" height="1" fill="#9a9a9a"/><rect x="28" y="0" width="1" height="1" fill="#9a9a9a"/><rect x="30" y="0" width="1" height="1" fill="#9a9a9a"/><rect x="32" y="0" width="1" height="1" fill="#9a9a9a"/></svg>
<div class="a" style="left:1030px;top:96px;width:164px;height:1px;background:#4a4a4a;"></div>
<div class="t" style="left:1030.0px;top:106.00px;font-size:8.14px;font-weight:normal;color:#c4c4c4;transform:scaleX(0.843);transform-origin:0 0;">Transform</div>
<svg class="s" style="left:1030px;top:128px" width="14" height="14" viewBox="0 0 14 14"><circle cx="1.8" cy="1.8" r="1.6" fill="none" stroke="#ddd" stroke-width="0.8"/><circle cx="1.8" cy="6.8" r="1.6" fill="none" stroke="#ddd" stroke-width="0.8"/><circle cx="1.8" cy="11.8" r="1.6" fill="none" stroke="#ddd" stroke-width="0.8"/><circle cx="6.8" cy="1.8" r="1.6" fill="none" stroke="#ddd" stroke-width="0.8"/><rect x="5.0" y="5.0" width="3.6" height="3.6" fill="#eee"/><circle cx="6.8" cy="11.8" r="1.6" fill="none" stroke="#ddd" stroke-width="0.8"/><circle cx="11.8" cy="1.8" r="1.6" fill="none" stroke="#ddd" stroke-width="0.8"/><circle cx="11.8" cy="6.8" r="1.6" fill="none" stroke="#ddd" stroke-width="0.8"/><circle cx="11.8" cy="11.8" r="1.6" fill="none" stroke="#ddd" stroke-width="0.8"/></svg>
<div class="t" style="left:1051.0px;top:123.00px;font-size:7.56px;font-weight:normal;color:#c4c4c4;transform:scaleX(0.980);transform-origin:0 0;">X:</div>
<div class="a" style="left:1062px;top:119px;width:38px;height:13px;background:#444444;border-radius:2px;"></div>
<div class="t" style="left:1063.5px;top:122.00px;font-size:8.14px;font-weight:normal;color:#e4e4e4;transform:scaleX(0.912);transform-origin:0 0;">-205.913 n</div>
<div class="t" style="left:1051.0px;top:141.00px;font-size:7.56px;font-weight:normal;color:#c4c4c4;transform:scaleX(1.041);transform-origin:0 0;">Y:</div>
<div class="a" style="left:1062px;top:137px;width:38px;height:13px;background:#444444;border-radius:2px;"></div>
<div class="t" style="left:1064.0px;top:140.00px;font-size:8.14px;font-weight:normal;color:#e4e4e4;transform:scaleX(0.910);transform-origin:0 0;">141.068 m</div>
<div class="t" style="left:1111.0px;top:123.00px;font-size:7.56px;font-weight:normal;color:#c4c4c4;transform:scaleX(0.989);transform-origin:0 0;">W:</div>
<div class="a" style="left:1125px;top:119px;width:38px;height:13px;background:#444444;border-radius:2px;"></div>
<div class="t" style="left:1126.5px;top:122.00px;font-size:8.14px;font-weight:normal;color:#e4e4e4;transform:scaleX(0.923);transform-origin:0 0;">306.257 m</div>
<div class="t" style="left:1111.0px;top:141.00px;font-size:7.56px;font-weight:normal;color:#c4c4c4;transform:scaleX(0.926);transform-origin:0 0;">H:</div>
<div class="a" style="left:1125px;top:137px;width:38px;height:13px;background:#444444;border-radius:2px;"></div>
<div class="t" style="left:1126.5px;top:140.00px;font-size:8.14px;font-weight:normal;color:#e4e4e4;transform:scaleX(0.923);transform-origin:0 0;">306.257 m</div>
<div class="a" style="left:1170px;top:127px;width:17px;height:16px;background:#3a3a3a;border-radius:2px;"></div>
<svg class="s" style="left:1174px;top:130px" width="9" height="10" viewBox="0 0 9 10"><rect x="2" y="0.5" width="4.5" height="5" rx="2.2" fill="none" stroke="#eee" stroke-width="1.2"/><rect x="2.5" y="4.5" width="4.5" height="5" rx="2.2" fill="none" stroke="#eee" stroke-width="1.2"/></svg>
<svg class="s" style="left:1047px;top:155px" width="12" height="8" viewBox="0 0 12 8"><path d="M0.5,7.5 L11,7.5 M0.5,7.5 L8,0.5" fill="none" stroke="#ccc" stroke-width="1"/><path d="M5,3 A5,5 0 0 1 6,7.5" fill="none" stroke="#ccc" stroke-width="0.8"/></svg>
<div class="t" style="left:1058.0px;top:156.00px;font-size:7.27px;font-weight:normal;color:#c4c4c4;transform:scaleX(0.743);transform-origin:0 0;">:</div>
<div class="a" style="left:1060px;top:155px;width:28px;height:14px;background:#444444;border-radius:2px 0 0 2px;"></div>
<div class="a" style="left:1088px;top:155px;width:12px;height:14px;background:#474747;border-radius:0 2px 2px 0;border-left:1px solid #3c3c3c;"></div>
<div class="t" style="left:1062.0px;top:158.00px;font-size:8.14px;font-weight:normal;color:#e4e4e4;transform:scaleX(0.900);transform-origin:0 0;">0°</div>
<svg class="s" style="left:1090px;top:160px" width="7" height="5" viewBox="0 0 7 5"><path d="M1,1 L3.5,3.5 L6,1" fill="none" stroke="#d0d0d0" stroke-width="1.1"/></svg>
<svg class="s" style="left:1128px;top:157px" width="12" height="11" viewBox="0 0 12 11"><path d="M0.5,1 L4.5,5.5 L0.5,10 Z" fill="none" stroke="#ccc" stroke-width="0.9"/><path d="M11.5,1 L7.5,5.5 L11.5,10 Z" fill="#ccc"/><line x1="6" y1="0" x2="6" y2="11" stroke="#ccc" stroke-width="0.7" stroke-dasharray="1,1"/></svg>
<svg class="s" style="left:1146px;top:157px" width="11" height="12" viewBox="0 0 11 12"><path d="M1,0.5 L5.5,4.5 L10,0.5 Z" fill="#ccc"/><path d="M1,11.5 L5.5,7.5 L10,11.5 Z" fill="none" stroke="#ccc" stroke-width="0.9"/><line x1="0" y1="6" x2="11" y2="6" stroke="#ccc" stroke-width="0.7" stroke-dasharray="1,1"/></svg>
<svg class="s" style="left:1175px;top:176px" width="12" height="3" viewBox="0 0 12 3"><circle cx="1.5" cy="1.5" r="1.3" fill="#ddd"/><circle cx="6" cy="1.5" r="1.3" fill="#ddd"/><circle cx="10.5" cy="1.5" r="1.3" fill="#ddd"/></svg>
<div class="a" style="left:1030px;top:186px;width:164px;height:1px;background:#4a4a4a;"></div>
<div class="t" style="left:1030.0px;top:194.00px;font-size:8.14px;font-weight:normal;color:#c4c4c4;transform:scaleX(0.843);transform-origin:0 0;">Appearance</div>
<div class="a" style="left:1031px;top:211px;width:12px;height:12px;background:#dd5158;border:1px solid #e6e6e6;"></div>
<div class="t" style="left:1051.0px;top:215.00px;font-size:8.14px;font-weight:normal;color:#d4d4d4;transform:scaleX(0.866);transform-origin:0 0;">Fill</div>
<svg class="s" style="left:1030px;top:230px" width="13" height="13" viewBox="0 0 13 13"><rect x="0.5" y="0.5" width="12" height="12" fill="#fff"/><rect x="3" y="3" width="7" height="7" fill="#222"/><rect x="5" y="5" width="3" height="3" fill="#fff"/><line x1="0" y1="13" x2="13" y2="0" stroke="#e8201c" stroke-width="1.4"/></svg>
<div class="t" style="left:1051.0px;top:235.00px;font-size:8.14px;font-weight:normal;color:#d4d4d4;transform:scaleX(0.850);transform-origin:0 0;">Stroke</div>
<svg class="s" style="left:1051px;top:243px" width="20" height="1" viewBox="0 0 20 1"><rect x="0" y="0" width="1" height="1" fill="#9a9a9a"/><rect x="2" y="0" width="1" height="1" fill="#9a9a9a"/><rect x="4" y="0" width="1" height="1" fill="#9a9a9a"/><rect x="6" y="0" width="1" height="1" fill="#9a9a9a"/><rect x="8" y="0" width="1" height="1" fill="#9a9a9a"/><rect x="10" y="0" width="1" height="1" fill="#9a9a9a"/><rect x="12" y="0" width="1" height="1" fill="#9a9a9a"/><rect x="14" y="0" width="1" height="1" fill="#9a9a9a"/><rect x="16" y="0" width="1" height="1" fill="#9a9a9a"/><rect x="18" y="0" width="1" height="1" fill="#9a9a9a"/></svg>
<div class="a" style="left:1086px;top:230px;width:48px;height:14px;background:#444444;border-radius:2px;"></div>
<div class="a" style="left:1098px;top:230px;width:1px;height:14px;background:#3c3c3c;"></div>
<div class="a" style="left:1122px;top:230px;width:1px;height:14px;background:#3c3c3c;"></div>
<div class="a" style="left:1099px;top:231px;width:23px;height:12px;background:#4a4a4a;"></div>
<svg class="s" style="left:1088px;top:231px" width="8" height="12" viewBox="0 0 8 12"><path d="M1,4.5 L4,1.5 L7,4.5 M1,7.5 L4,10.5 L7,7.5" fill="none" stroke="#ddd" stroke-width="1"/></svg>
<svg class="s" style="left:1124px;top:234px" width="8" height="5" viewBox="0 0 8 5"><path d="M1,1 L4,4 L7,1" fill="none" stroke="#ddd" stroke-width="1.1"/></svg>
<svg class="s" style="left:1030px;top:251px" width="13" height="13" viewBox="0 0 13 13"><rect x="0.5" y="0.5" width="12" height="12" fill="#6a6a6a" stroke="#8a8a8a" stroke-width="1"/><g fill="#5a5a5a"><rect x="2" y="2" width="3" height="3"/><rect x="8" y="2" width="3" height="3"/><rect x="5" y="5" width="3" height="3"/><rect x="2" y="8" width="3" height="3"/><rect x="8" y="8" width="3" height="3"/></g></svg>
<div class="t" style="left:1051.0px;top:255.00px;font-size:8.14px;font-weight:normal;color:#d4d4d4;transform:scaleX(0.870);transform-origin:0 0;">Opacity</div>
<svg class="s" style="left:1051px;top:263px" width="24" height="1" viewBox="0 0 24 1"><rect x="0" y="0" width="1" height="1" fill="#9a9a9a"/><rect x="2" y="0" width="1" height="1" fill="#9a9a9a"/><rect x="4" y="0" width="1" height="1" fill="#9a9a9a"/><rect x="6" y="0" width="1" height="1" fill="#9a9a9a"/><rect x="8" y="0" width="1" height="1" fill="#9a9a9a"/><rect x="10" y="0" width="1" height="1" fill="#9a9a9a"/><rect x="12" y="0" width="1" height="1" fill="#9a9a9a"/><rect x="14" y="0" width="1" height="1" fill="#9a9a9a"/><rect x="16" y="0" width="1" height="1" fill="#9a9a9a"/><rect x="18" y="0" width="1" height="1" fill="#9a9a9a"/><rect x="20" y="0" width="1" height="1" fill="#9a9a9a"/><rect x="22" y="0" width="1" height="1" fill="#9a9a9a"/></svg>
<div class="a" style="left:1086px;top:251px;width:35px;height:14px;background:#444444;border-radius:2px 0 0 2px;"></div>
<div class="a" style="left:1121px;top:251px;width:13px;height:14px;background:#4a4a4a;border-radius:0 2px 2px 0;border-left:1px solid #3c3c3c;"></div>
<div class="t" style="left:1087.5px;top:254.00px;font-size:8.14px;font-weight:normal;color:#e4e4e4;transform:scaleX(0.889);transform-origin:0 0;">100%</div>
<svg class="s" style="left:1125px;top:254px" width="6" height="8" viewBox="0 0 6 8"><path d="M1.5,1 L4.5,4 L1.5,7" fill="none" stroke="#ddd" stroke-width="1.1"/></svg>
<svg class="s" style="left:1027px;top:276px" width="13" height="11" viewBox="0 0 13 11"><text x="0" y="8.5" font-size="9.5" font-style="italic" fill="#ccc" font-family="Liberation Serif">fx</text><circle cx="11.5" cy="9" r="0.6" fill="#ccc"/></svg>
<svg class="s" style="left:1175px;top:297px" width="12" height="3" viewBox="0 0 12 3"><circle cx="1.5" cy="1.5" r="1.3" fill="#ddd"/><circle cx="6" cy="1.5" r="1.3" fill="#ddd"/><circle cx="10.5" cy="1.5" r="1.3" fill="#ddd"/></svg>
<div class="a" style="left:1030px;top:305px;width:164px;height:1px;background:#4a4a4a;"></div>
<div class="t" style="left:1030.0px;top:315.00px;font-size:8.14px;font-weight:normal;color:#c4c4c4;transform:scaleX(0.884);transform-origin:0 0;">Align</div>
<svg class="s" style="left:1032px;top:333px" width="18" height="14" viewBox="0 0 18 14"><path d="M3,1 L3,4 M1,3 L4,3" stroke="#cfcfcf" stroke-width="1"/><path d="M3.5,3.5 L9,3.5 L11.5,6 L11.5,12.5 L3.5,12.5 Z" fill="none" stroke="#cfcfcf" stroke-width="1.1"/><path d="M13,6.5 L15,8.5 L17,6.5" fill="none" stroke="#cfcfcf" stroke-width="1"/></svg>
<svg class="s" style="left:1058px;top:333px" width="14" height="14" viewBox="0 0 14 14"><rect x="0.5" y="1" width="1.2" height="12" fill="#cfcfcf"/><rect x="3" y="2.5" width="6" height="4" fill="#cfcfcf"/><rect x="3" y="8" width="10" height="4" fill="#cfcfcf"/></svg>
<svg class="s" style="left:1079px;top:333px" width="14" height="14" viewBox="0 0 14 14"><rect x="6" y="0" width="1.2" height="14" fill="#cfcfcf"/><rect x="3" y="2.5" width="7" height="4" fill="#cfcfcf"/><rect x="1" y="8" width="11" height="4" fill="#cfcfcf"/></svg>
<svg class="s" style="left:1101px;top:333px" width="14" height="14" viewBox="0 0 14 14"><rect x="11.3" y="1" width="1.2" height="12" fill="#cfcfcf"/><rect x="4" y="2.5" width="6" height="4" fill="#cfcfcf"/><rect x="0" y="8" width="10" height="4" fill="#cfcfcf"/></svg>
<svg class="s" style="left:1121px;top:333px" width="14" height="14" viewBox="0 0 14 14"><rect x="0" y="0.5" width="14" height="1.2" fill="#cfcfcf"/><rect x="2" y="3" width="4" height="10" fill="#cfcfcf"/><rect x="7.5" y="3" width="4" height="6" fill="#cfcfcf"/></svg>
<svg class="s" style="left:1143px;top:333px" width="14" height="14" viewBox="0 0 14 14"><rect x="0" y="6.5" width="13" height="1.2" fill="#cfcfcf"/><rect x="2" y="2" width="4" height="10" fill="#cfcfcf"/><rect x="7.5" y="4" width="4" height="6" fill="#cfcfcf"/></svg>
<svg class="s" style="left:1163px;top:333px" width="14" height="14" viewBox="0 0 14 14"><rect x="0" y="12.3" width="13" height="1.2" fill="#cfcfcf"/><rect x="2" y="1" width="4" height="10" fill="#cfcfcf"/><rect x="7.5" y="5" width="4" height="6" fill="#cfcfcf"/></svg>
<svg class="s" style="left:1175px;top:357px" width="12" height="3" viewBox="0 0 12 3"><circle cx="1.5" cy="1.5" r="1.3" fill="#ddd"/><circle cx="6" cy="1.5" r="1.3" fill="#ddd"/><circle cx="10.5" cy="1.5" r="1.3" fill="#ddd"/></svg>
<div class="a" style="left:1030px;top:364px;width:164px;height:1px;background:#4a4a4a;"></div>
<div class="t" style="left:1030.0px;top:378.00px;font-size:8.14px;font-weight:normal;color:#c4c4c4;transform:scaleX(0.852);transform-origin:0 0;">Quick Actions</div>
<div class="a" style="left:1030px;top:393px;width:160px;height:16px;background:transparent;border:1px solid #6e6e6e;border-radius:2px;"></div>
<div class="t" style="left:1099.0px;top:398.00px;font-size:8.14px;font-weight:normal;color:#d4d4d4;transform:scaleX(0.853);transform-origin:0 0;">Embed</div>
<div class="a" style="left:1030px;top:415px;width:160px;height:16px;background:transparent;border:1px solid #6e6e6e;border-radius:2px;"></div>
<div class="t" style="left:1082.0px;top:420.00px;font-size:8.14px;font-weight:normal;color:#d4d4d4;transform:scaleX(0.872);transform-origin:0 0;">Edit In Photoshop</div>
<div class="a" style="left:1030px;top:437px;width:160px;height:15px;background:transparent;border:1px solid #6e6e6e;border-radius:2px;"></div>
<div class="a" style="left:1030px;top:459px;width:160px;height:15px;background:transparent;border:1px solid #6e6e6e;border-radius:2px;"></div>
<div class="a" style="left:1030px;top:481px;width:160px;height:15px;background:transparent;border:1px solid #6e6e6e;border-radius:2px;"></div>
<div class="t" style="left:1169.0px;top:443.00px;font-size:8.14px;font-weight:normal;color:#d4d4d4;transform:scaleX(0.663);transform-origin:0 0;">!</div>

<div class="a" style="left:115px;top:122px;width:64px;height:59px;background:#535353;border:1px solid #444;box-shadow:0 1px 3px rgba(0,0,0,0.45);"></div>
<div class="a" style="left:116px;top:123px;width:62px;height:9px;background:#464646;"></div>
<svg class="s" style="left:153px;top:124px" width="22" height="7" viewBox="0 0 22 7"><path d="M1,1 L3,3.5 L1,6 M4,1 L6,3.5 L4,6" fill="none" stroke="#bbb" stroke-width="0.9"/><path d="M15.5,1 L20.5,6 M20.5,1 L15.5,6" stroke="#ccc" stroke-width="1"/></svg>
<svg class="s" style="left:140px;top:135px" width="12" height="2" viewBox="0 0 12 2"><rect x="0.0" y="0" width="1" height="1" fill="#777"/><rect x="1.6" y="0" width="1" height="1" fill="#777"/><rect x="3.2" y="0" width="1" height="1" fill="#777"/><rect x="4.800000000000001" y="0" width="1" height="1" fill="#777"/><rect x="6.4" y="0" width="1" height="1" fill="#777"/><rect x="8.0" y="0" width="1" height="1" fill="#777"/><rect x="9.600000000000001" y="0" width="1" height="1" fill="#777"/></svg>
<svg class="s" style="left:124px;top:143px" width="10" height="10" viewBox="0 0 10 10"><path d="M0.5,0.5 L9.5,5 L0.5,9.5 Z" fill="#cfcfcf"/></svg>
<div class="t" style="left:142.0px;top:145.00px;font-size:8.14px;font-weight:bold;color:#e4e4e4;transform:scaleX(0.838);transform-origin:0 0;">Actions</div>
<svg class="s" style="left:122px;top:164px" width="14" height="8" viewBox="0 0 14 8"><rect x="0.7" y="1" width="7" height="6" rx="3" fill="none" stroke="#ddd" stroke-width="1.3"/><rect x="6" y="1" width="7" height="6" rx="3" fill="none" stroke="#ddd" stroke-width="1.3"/></svg>
<div class="t" style="left:142.0px;top:165.00px;font-size:8.14px;font-weight:bold;color:#e4e4e4;transform:scaleX(0.753);transform-origin:0 0;">Links</div>
<div class="a" style="left:712px;top:76px;width:265px;height:24px;background:#535353;border-radius:3px;border:1px solid #474747;box-shadow:0 1px 3px rgba(0,0,0,0.45);"></div>
<div class="a" style="left:715px;top:79px;width:3px;height:17px;background:#8a8a8a;border-radius:2px;"></div>
<div class="a" style="left:726px;top:78px;width:80px;height:19px;background:#565656;border:1px solid #666;border-radius:2px;"></div>
<svg class="s" style="left:731px;top:81px" width="14" height="14" viewBox="0 0 14 14"><circle cx="6" cy="7.5" r="5" fill="#cfcfcf"/><path d="M2.5,9 C4,7 6,7.5 9,4" stroke="#535353" stroke-width="1" fill="none"/><circle cx="10.5" cy="3" r="2.8" fill="#2e8ef0"/></svg>
<div class="t" style="left:748.0px;top:83.00px;font-size:9.59px;font-weight:normal;color:#e0e0e0;transform:scaleX(0.891);transform-origin:0 0;">Image Trace</div>
<div class="a" style="left:809px;top:78px;width:56px;height:19px;background:#565656;border:1px solid #666;border-radius:2px;"></div>
<svg class="s" style="left:815px;top:81px" width="16" height="14" viewBox="0 0 16 14"><path d="M1,2 L1,1 L9,1 L9,2 M5,1 L5,11 M3.5,11 L6.5,11" fill="none" stroke="#ddd" stroke-width="1.2"/><circle cx="10" cy="8.5" r="3" fill="none" stroke="#ddd" stroke-width="1.1"/><line x1="12.2" y1="10.7" x2="14.5" y2="13" stroke="#ddd" stroke-width="1.2"/></svg>
<div class="t" style="left:834.0px;top:83.00px;font-size:9.59px;font-weight:normal;color:#e0e0e0;transform:scaleX(0.790);transform-origin:0 0;">Retype</div>
<svg class="s" style="left:871px;top:81px" width="14" height="14" viewBox="0 0 14 14"><path d="M3,0 L3,11 L14,11 M0,3 L11,3 L11,14" fill="none" stroke="#d0d0d0" stroke-width="1.4"/></svg>
<svg class="s" style="left:892px;top:80px" width="14" height="16" viewBox="0 0 14 16"><path d="M5,1 L10,1 L13,4 L13,15 L5,15 L5,11" fill="none" stroke="#d0d0d0" stroke-width="1.1"/><path d="M0,8 L8,8 M5.5,5.5 L8,8 L5.5,10.5" fill="none" stroke="#d0d0d0" stroke-width="1.2"/></svg>
<svg class="s" style="left:914px;top:83px" width="14" height="9" viewBox="0 0 14 9"><rect x="0.7" y="1" width="7.5" height="7" rx="3.5" fill="none" stroke="#d0d0d0" stroke-width="1.3"/><rect x="5.8" y="1" width="7.5" height="7" rx="3.5" fill="none" stroke="#d0d0d0" stroke-width="1.3"/></svg>
<svg class="s" style="left:935px;top:80px" width="12" height="15" viewBox="0 0 12 15"><path d="M1,1 L8,1 L11,4 L11,14 L1,14 Z" fill="none" stroke="#d0d0d0" stroke-width="1.1"/><text x="6" y="10.5" font-size="5" fill="#d0d0d0" text-anchor="middle" font-family="Liberation Sans">Ps</text></svg>
<svg class="s" style="left:955px;top:86px" width="14" height="4" viewBox="0 0 14 4"><circle cx="2" cy="2" r="1.6" fill="#ddd"/><circle cx="7" cy="2" r="1.6" fill="#ddd"/><circle cx="12" cy="2" r="1.6" fill="#ddd"/></svg>
<div class="a" style="left:819px;top:143px;width:192px;height:189px;background:#535353;border:1px solid #444;box-shadow:0 1px 3px rgba(0,0,0,0.45);"></div>
<div class="a" style="left:820px;top:144px;width:190px;height:9px;background:#464646;"></div>
<svg class="s" style="left:987px;top:145px" width="22" height="7" viewBox="0 0 22 7"><path d="M3,1 L1,3.5 L3,6 M6,1 L4,3.5 L6,6" fill="none" stroke="#bbb" stroke-width="0.9"/><path d="M14.5,1 L19.5,6 M19.5,1 L14.5,6" stroke="#ccc" stroke-width="1"/></svg>
<div class="a" style="left:820px;top:153px;width:190px;height:18px;background:#454545;"></div>
<div class="a" style="left:820px;top:153px;width:48px;height:18px;background:#535353;"></div>
<div class="a" style="left:868px;top:153px;width:1px;height:18px;background:#3c3c3c;"></div>
<div class="a" style="left:920px;top:153px;width:1px;height:18px;background:#3c3c3c;"></div>
<div class="t" style="left:823.5px;top:158.00px;font-size:8.14px;font-weight:bold;color:#eeeeee;transform:scaleX(0.951);transform-origin:0 0;">Artboards</div>
<div class="t" style="left:872.5px;top:158.00px;font-size:8.14px;font-weight:bold;color:#bdbdbd;transform:scaleX(0.827);transform-origin:0 0;">Asset Export</div>
<svg class="s" style="left:998px;top:158px" width="10" height="8" viewBox="0 0 10 8"><rect x="0" y="0" width="10" height="1.2" fill="#bbb"/><rect x="0" y="3.2" width="10" height="1.2" fill="#bbb"/><rect x="0" y="6.4" width="10" height="1.2" fill="#bbb"/></svg>
<div class="a" style="left:824px;top:176px;width:184px;height:132px;background:#4f4f4f;border:1px solid #5e5e5e;"></div>
<div class="a" style="left:825px;top:190px;width:182px;height:1px;background:#5a5a5a;"></div>
<div class="t" style="left:828.0px;top:181.00px;font-size:8.14px;font-weight:normal;color:#e0e0e0;transform:scaleX(0.884);transform-origin:0 0;">1</div>
<div class="t" style="left:856.5px;top:181.00px;font-size:8.14px;font-weight:normal;color:#e0e0e0;transform:scaleX(0.837);transform-origin:0 0;">Sterilized Cat Chicken</div>
<svg class="s" style="left:983px;top:179px" width="9" height="10" viewBox="0 0 9 10"><path d="M1,0.5 L5.5,0.5 L8,3 L8,9.5 L1,9.5 Z" fill="none" stroke="#ddd" stroke-width="0.9"/><path d="M0,2 L2,2 M1,1 L1,3" stroke="#ddd" stroke-width="0.8"/></svg>
<div class="a" style="left:825px;top:190px;width:182px;height:13px;background:#4b6382;"></div>
<div class="a" style="left:825px;top:203px;width:182px;height:1px;background:#5a5a5a;"></div>
<div class="t" style="left:828.0px;top:194.00px;font-size:8.14px;font-weight:normal;color:#e0e0e0;transform:scaleX(0.884);transform-origin:0 0;">2</div>
<div class="t" style="left:856.5px;top:194.00px;font-size:8.14px;font-weight:normal;color:#e0e0e0;transform:scaleX(0.837);transform-origin:0 0;">Cat Chicken</div>
<svg class="s" style="left:983px;top:192px" width="9" height="10" viewBox="0 0 9 10"><path d="M1,0.5 L5.5,0.5 L8,3 L8,9.5 L1,9.5 Z" fill="none" stroke="#ddd" stroke-width="0.9"/><path d="M0,2 L2,2 M1,1 L1,3" stroke="#ddd" stroke-width="0.8"/></svg>
<div class="a" style="left:825px;top:217px;width:182px;height:1px;background:#5a5a5a;"></div>
<div class="t" style="left:828.0px;top:208.00px;font-size:8.14px;font-weight:normal;color:#e0e0e0;transform:scaleX(0.884);transform-origin:0 0;">3</div>
<div class="t" style="left:856.5px;top:208.00px;font-size:8.14px;font-weight:normal;color:#e0e0e0;transform:scaleX(0.874);transform-origin:0 0;">Kitten Meat Mix</div>
<svg class="s" style="left:983px;top:206px" width="9" height="10" viewBox="0 0 9 10"><path d="M1,0.5 L5.5,0.5 L8,3 L8,9.5 L1,9.5 Z" fill="none" stroke="#ddd" stroke-width="0.9"/><path d="M0,2 L2,2 M1,1 L1,3" stroke="#ddd" stroke-width="0.8"/></svg>
<div class="a" style="left:825px;top:230px;width:182px;height:1px;background:#5a5a5a;"></div>
<div class="t" style="left:828.0px;top:221.00px;font-size:8.14px;font-weight:normal;color:#e0e0e0;transform:scaleX(0.884);transform-origin:0 0;">4</div>
<div class="t" style="left:856.5px;top:221.00px;font-size:8.14px;font-weight:normal;color:#e0e0e0;transform:scaleX(0.886);transform-origin:0 0;">Adult dog meat mix</div>
<svg class="s" style="left:983px;top:219px" width="9" height="10" viewBox="0 0 9 10"><path d="M1,0.5 L5.5,0.5 L8,3 L8,9.5 L1,9.5 Z" fill="none" stroke="#ddd" stroke-width="0.9"/><path d="M0,2 L2,2 M1,1 L1,3" stroke="#ddd" stroke-width="0.8"/></svg>
<div class="a" style="left:825px;top:243px;width:182px;height:1px;background:#5a5a5a;"></div>
<div class="t" style="left:828.0px;top:234.00px;font-size:8.14px;font-weight:normal;color:#e0e0e0;transform:scaleX(0.884);transform-origin:0 0;">5</div>
<div class="t" style="left:856.5px;top:234.00px;font-size:8.14px;font-weight:normal;color:#e0e0e0;transform:scaleX(0.832);transform-origin:0 0;">Pupies Rind</div>
<svg class="s" style="left:983px;top:232px" width="9" height="10" viewBox="0 0 9 10"><path d="M1,0.5 L5.5,0.5 L8,3 L8,9.5 L1,9.5 Z" fill="none" stroke="#ddd" stroke-width="0.9"/><path d="M0,2 L2,2 M1,1 L1,3" stroke="#ddd" stroke-width="0.8"/></svg>
<div class="a" style="left:853px;top:177px;width:1px;height:67px;background:#5a5a5a;"></div>
<div class="a" style="left:978px;top:177px;width:1px;height:67px;background:#5a5a5a;"></div>
<svg class="s" style="left:827px;top:313px" width="13" height="13" viewBox="0 0 13 13"><path d="M1,1 L12,12 M1,12 L12,1" stroke="#ddd" stroke-width="1.1"/><path d="M1,1 L4,1 M1,1 L1,4 M12,12 L9,12 M12,12 L12,9 M1,12 L1,9 M12,1 L9,1" stroke="#ddd" stroke-width="1.3"/></svg>
<svg class="s" style="left:926px;top:313px" width="11" height="11" viewBox="0 0 11 11"><path d="M5.5,0.5 L10.5,5.5 L7.5,5.5 L7.5,10.5 L3.5,10.5 L3.5,5.5 L0.5,5.5 Z" fill="#ddd"/></svg>
<svg class="s" style="left:944px;top:313px" width="11" height="11" viewBox="0 0 11 11"><path d="M5.5,10.5 L10.5,5.5 L7.5,5.5 L7.5,0.5 L3.5,0.5 L3.5,5.5 L0.5,5.5 Z" fill="#ddd"/></svg>
<svg class="s" style="left:963px;top:313px" width="11" height="11" viewBox="0 0 11 11"><rect x="0.6" y="0.6" width="9.8" height="9.8" fill="none" stroke="#ddd" stroke-width="1"/><path d="M5.5,3 L5.5,8 M3,5.5 L8,5.5" stroke="#ddd" stroke-width="1.1"/></svg>
<svg class="s" style="left:981px;top:313px" width="10" height="11" viewBox="0 0 10 11"><path d="M0,1.5 L10,1.5 M3.5,1.5 L3.5,0.3 L6.5,0.3 L6.5,1.5 M1.5,2.5 L2,10.5 L8,10.5 L8.5,2.5 M4,4 L4,9 M6,4 L6,9" fill="none" stroke="#ddd" stroke-width="0.9"/></svg>
<div class="a" style="left:820px;top:329px;width:190px;height:3px;background:#474747;"></div>
<svg class="s" style="left:905px;top:330px" width="18" height="2" viewBox="0 0 18 2"><rect x="0" y="0" width="1" height="1" fill="#6a6a6a"/><rect x="2" y="0" width="1" height="1" fill="#6a6a6a"/><rect x="4" y="0" width="1" height="1" fill="#6a6a6a"/><rect x="6" y="0" width="1" height="1" fill="#6a6a6a"/><rect x="8" y="0" width="1" height="1" fill="#6a6a6a"/><rect x="10" y="0" width="1" height="1" fill="#6a6a6a"/><rect x="12" y="0" width="1" height="1" fill="#6a6a6a"/><rect x="14" y="0" width="1" height="1" fill="#6a6a6a"/></svg>
<div class="a" style="left:972px;top:418px;width:28px;height:77px;background:#535353;border:1px solid #444;box-shadow:0 1px 3px rgba(0,0,0,0.45);"></div>
<div class="a" style="left:973px;top:419px;width:26px;height:9px;background:#464646;"></div>
<svg class="s" style="left:976px;top:420px" width="22" height="7" viewBox="0 0 22 7"><path d="M1,1 L3,3.5 L1,6 M4,1 L6,3.5 L4,6" fill="none" stroke="#bbb" stroke-width="0.9"/><path d="M15,1 L20,6 M20,1 L15,6" stroke="#ccc" stroke-width="1"/></svg>
<svg class="s" style="left:980px;top:431px" width="12" height="2" viewBox="0 0 12 2"><rect x="0.0" y="0" width="1" height="1" fill="#777"/><rect x="1.6" y="0" width="1" height="1" fill="#777"/><rect x="3.2" y="0" width="1" height="1" fill="#777"/><rect x="4.800000000000001" y="0" width="1" height="1" fill="#777"/><rect x="6.4" y="0" width="1" height="1" fill="#777"/><rect x="8.0" y="0" width="1" height="1" fill="#777"/><rect x="9.600000000000001" y="0" width="1" height="1" fill="#777"/></svg>
<svg class="s" style="left:979px;top:438px" width="14" height="11" viewBox="0 0 14 11"><rect x="0.6" y="0.6" width="12.8" height="9.8" fill="none" stroke="#ddd" stroke-width="1.1"/><rect x="2" y="2" width="4" height="3" fill="#ddd"/><rect x="7" y="2" width="5" height="3" fill="#ddd"/><rect x="2" y="6" width="4" height="3" fill="#ddd"/><rect x="7" y="6" width="5" height="3" fill="#ddd"/></svg>
<svg class="s" style="left:979px;top:456px" width="14" height="14" viewBox="0 0 14 14"><rect x="3" y="7" width="8" height="6.5" fill="#ddd"/><path d="M5,7 L3,1 M7,7 L7,0.5 M9,7 L11.5,2" stroke="#ddd" stroke-width="1.1"/><circle cx="3" cy="1.5" r="1.3" fill="#ddd"/><circle cx="11.5" cy="2" r="1.3" fill="#ddd"/></svg>
<svg class="s" style="left:979px;top:476px" width="14" height="14" viewBox="0 0 14 14"><circle cx="7" cy="3.5" r="3" fill="#ddd"/><circle cx="3.5" cy="8" r="3" fill="#ddd"/><circle cx="10.5" cy="8" r="3" fill="#ddd"/><path d="M7,7 L5,13 L9,13 Z" fill="#ddd"/></svg>
<div class="a" style="left:1000px;top:430px;width:169px;height:152px;background:#535353;border:1px solid #444;box-shadow:0 1px 3px rgba(0,0,0,0.45);"></div>
<div class="a" style="left:1001px;top:431px;width:167px;height:9px;background:#464646;"></div>
<svg class="s" style="left:1147px;top:432px" width="20" height="7" viewBox="0 0 20 7"><path d="M3,1 L1,3.5 L3,6 M6,1 L4,3.5 L6,6" fill="none" stroke="#bbb" stroke-width="0.9"/><path d="M12.5,1 L17.5,6 M17.5,1 L12.5,6" stroke="#ccc" stroke-width="1"/></svg>
<div class="a" style="left:1001px;top:440px;width:167px;height:19px;background:#454545;"></div>
<div class="a" style="left:1001px;top:440px;width:32px;height:19px;background:#4a4a4a;"></div>
<div class="a" style="left:1033px;top:440px;width:55px;height:19px;background:#535353;"></div>
<div class="a" style="left:1032px;top:440px;width:1px;height:19px;background:#3c3c3c;"></div>
<div class="a" style="left:1088px;top:440px;width:1px;height:19px;background:#3c3c3c;"></div>
<div class="t" style="left:1007.0px;top:446.00px;font-size:8.14px;font-weight:bold;color:#b8b8b8;transform:scaleX(0.800);transform-origin:0 0;">Color</div>
<svg class="s" style="left:1035px;top:444px" width="5" height="8" viewBox="0 0 5 8"><path d="M0.5,3 L2.5,1 L4.5,3 M0.5,5 L2.5,7 L4.5,5" fill="none" stroke="#bbb" stroke-width="0.7"/></svg>
<div class="t" style="left:1042.5px;top:446.00px;font-size:8.14px;font-weight:bold;color:#eeeeee;transform:scaleX(0.827);transform-origin:0 0;">Color Guide</div>
<svg class="s" style="left:1156px;top:445px" width="10" height="8" viewBox="0 0 10 8"><rect x="0" y="0" width="10" height="1.2" fill="#bbb"/><rect x="0" y="3.2" width="10" height="1.2" fill="#bbb"/><rect x="0" y="6.4" width="10" height="1.2" fill="#bbb"/></svg>
<div class="a" style="left:1003px;top:464px;width:17px;height:16px;background:#2e2e2e;border-radius:2px;"></div>
<div class="a" style="left:1005px;top:466px;width:12px;height:12px;background:#dd5158;border:1px solid #e8e8e8;"></div>
<div class="a" style="left:1023px;top:463px;width:141px;height:18px;background:#4a4a4a;border:1px solid #5a5a5a;border-radius:2px;"></div>
<div class="a" style="left:1026px;top:466px;width:10px;height:12px;background:#ffffff;border:1px solid #333;"></div>
<div class="a" style="left:1036.0px;top:466px;width:11.3px;height:12px;background:#b8a3a1;"></div>
<div class="a" style="left:1047.3px;top:466px;width:11.3px;height:12px;background:#b3ae9c;"></div>
<div class="a" style="left:1058.6px;top:466px;width:11.3px;height:12px;background:#c9e4cb;"></div>
<div class="a" style="left:1069.9px;top:466px;width:11.3px;height:12px;background:#9c9cc6;"></div>
<div class="a" style="left:1151px;top:464px;width:1px;height:16px;background:#3c3c3c;"></div>
<svg class="s" style="left:1154px;top:470px" width="8" height="5" viewBox="0 0 8 5"><path d="M1,1 L4,4 L7,1" fill="none" stroke="#ddd" stroke-width="1.1"/></svg>
<div class="t" style="left:1021.0px;top:487.00px;font-size:8.14px;font-weight:bold;color:#d0d0d0;transform:scaleX(0.898);transform-origin:0 0;">Shades</div>
<svg class="s" style="left:1082px;top:491px" width="5" height="4" viewBox="0 0 5 4"><path d="M0,0.5 L4.5,0.5 L2.25,3 Z" fill="#ccc"/></svg>
<div class="t" style="left:1129.0px;top:487.00px;font-size:8.14px;font-weight:bold;color:#d0d0d0;transform:scaleX(0.881);transform-origin:0 0;">Tints</div>
<svg class="s" style="left:1003px;top:498px" width="163" height="64" viewBox="0 0 163 64"><rect x="0" y="0" width="163" height="63" fill="#474747" stroke="#5a5a5a" stroke-width="0.8"/><rect x="2.00" y="2.00" width="16.87" height="9.80" fill="#221e1f"/><rect x="19.67" y="2.00" width="16.87" height="9.80" fill="#4e4c4e"/><rect x="37.33" y="2.00" width="16.87" height="9.80" fill="#97979b"/><rect x="55.00" y="2.00" width="16.87" height="9.80" fill="#cacaca"/><rect x="72.67" y="2.00" width="16.87" height="9.80" fill="#fdfdfd"/><rect x="90.33" y="2.00" width="16.87" height="9.80" fill="#fefefe"/><rect x="108.00" y="2.00" width="16.87" height="9.80" fill="#ffffff"/><rect x="125.67" y="2.00" width="16.87" height="9.80" fill="#ffffff"/><rect x="143.33" y="2.00" width="16.87" height="9.80" fill="#ffffff"/><rect x="2.00" y="12.60" width="16.87" height="9.80" fill="#231e1f"/><rect x="19.67" y="12.60" width="16.87" height="9.80" fill="#4e4b4c"/><rect x="37.33" y="12.60" width="16.87" height="9.80" fill="#7b7474"/><rect x="55.00" y="12.60" width="16.87" height="9.80" fill="#a59594"/><rect x="72.67" y="12.60" width="16.87" height="9.80" fill="#b8a2a2"/><rect x="90.33" y="12.60" width="16.87" height="9.80" fill="#c4b0b0"/><rect x="108.00" y="12.60" width="16.87" height="9.80" fill="#d5c7c7"/><rect x="125.67" y="12.60" width="16.87" height="9.80" fill="#e2d8d8"/><rect x="143.33" y="12.60" width="16.87" height="9.80" fill="#efe9e9"/><rect x="2.00" y="23.20" width="16.87" height="9.80" fill="#211f1f"/><rect x="19.67" y="23.20" width="16.87" height="9.80" fill="#4c4c4a"/><rect x="37.33" y="23.20" width="16.87" height="9.80" fill="#7c7c74"/><rect x="55.00" y="23.20" width="16.87" height="9.80" fill="#a3a394"/><rect x="72.67" y="23.20" width="16.87" height="9.80" fill="#b4b49f"/><rect x="90.33" y="23.20" width="16.87" height="9.80" fill="#c4c3ae"/><rect x="108.00" y="23.20" width="16.87" height="9.80" fill="#d4d3c5"/><rect x="125.67" y="23.20" width="16.87" height="9.80" fill="#e4e2d8"/><rect x="143.33" y="23.20" width="16.87" height="9.80" fill="#efeee9"/><rect x="2.00" y="33.80" width="16.87" height="9.80" fill="#1e2121"/><rect x="19.67" y="33.80" width="16.87" height="9.80" fill="#4b504d"/><rect x="37.33" y="33.80" width="16.87" height="9.80" fill="#7e8a80"/><rect x="55.00" y="33.80" width="16.87" height="9.80" fill="#a9c0ab"/><rect x="72.67" y="33.80" width="16.87" height="9.80" fill="#c8e6c8"/><rect x="90.33" y="33.80" width="16.87" height="9.80" fill="#d2ecd2"/><rect x="108.00" y="33.80" width="16.87" height="9.80" fill="#ddefdd"/><rect x="125.67" y="33.80" width="16.87" height="9.80" fill="#e8f4e8"/><rect x="143.33" y="33.80" width="16.87" height="9.80" fill="#f1f7f1"/><rect x="2.00" y="44.40" width="16.87" height="9.80" fill="#201e21"/><rect x="19.67" y="44.40" width="16.87" height="9.80" fill="#4c4b52"/><rect x="37.33" y="44.40" width="16.87" height="9.80" fill="#74738a"/><rect x="55.00" y="44.40" width="16.87" height="9.80" fill="#8f8db5"/><rect x="72.67" y="44.40" width="16.87" height="9.80" fill="#9a9ac5"/><rect x="90.33" y="44.40" width="16.87" height="9.80" fill="#aaaad0"/><rect x="108.00" y="44.40" width="16.87" height="9.80" fill="#c4c4de"/><rect x="125.67" y="44.40" width="16.87" height="9.80" fill="#d9d8ea"/><rect x="143.33" y="44.40" width="16.87" height="9.80" fill="#ebeaf4"/></svg>
<svg class="s" style="left:1007px;top:565px" width="14" height="10" viewBox="0 0 14 10"><rect x="0.5" y="0.5" width="11" height="8" fill="none" stroke="#ccc" stroke-width="0.9"/><path d="M4.2,0.5 L4.2,8.5 M7.8,0.5 L7.8,8.5 M0.5,4.5 L11.5,4.5" stroke="#ccc" stroke-width="0.8"/><circle cx="13" cy="9" r="0.7" fill="#ccc"/></svg>
<div class="t" style="left:1027.0px;top:567.00px;font-size:8.14px;font-weight:normal;color:#c8c8c8;transform:scaleX(0.822);transform-origin:0 0;">None</div>
<svg class="s" style="left:1120px;top:564px" width="12" height="12" viewBox="0 0 12 12"><circle cx="6" cy="6" r="5" fill="#bbb" stroke="#ddd" stroke-width="0.8"/><circle cx="6" cy="6" r="2.5" fill="#666"/></svg>
<svg class="s" style="left:1139px;top:565px" width="14" height="10" viewBox="0 0 14 10"><rect x="5" y="0.5" width="8" height="9" fill="none" stroke="#ddd" stroke-width="0.9"/><path d="M8,0.5 L8,9.5 M10.5,0.5 L10.5,9.5" stroke="#ddd" stroke-width="0.8"/><path d="M1,6.5 L4.5,6.5 M2.75,4.75 L2.75,8.25" stroke="#ddd" stroke-width="1"/></svg>
<div class="a" style="left:1001px;top:578px;width:167px;height:4px;background:#474747;"></div>
<svg class="s" style="left:1075px;top:579px" width="18" height="2" viewBox="0 0 18 2"><rect x="0" y="0" width="1" height="1" fill="#6a6a6a"/><rect x="2" y="0" width="1" height="1" fill="#6a6a6a"/><rect x="4" y="0" width="1" height="1" fill="#6a6a6a"/><rect x="6" y="0" width="1" height="1" fill="#6a6a6a"/><rect x="8" y="0" width="1" height="1" fill="#6a6a6a"/><rect x="10" y="0" width="1" height="1" fill="#6a6a6a"/><rect x="12" y="0" width="1" height="1" fill="#6a6a6a"/><rect x="14" y="0" width="1" height="1" fill="#6a6a6a"/></svg>


</body></html>
